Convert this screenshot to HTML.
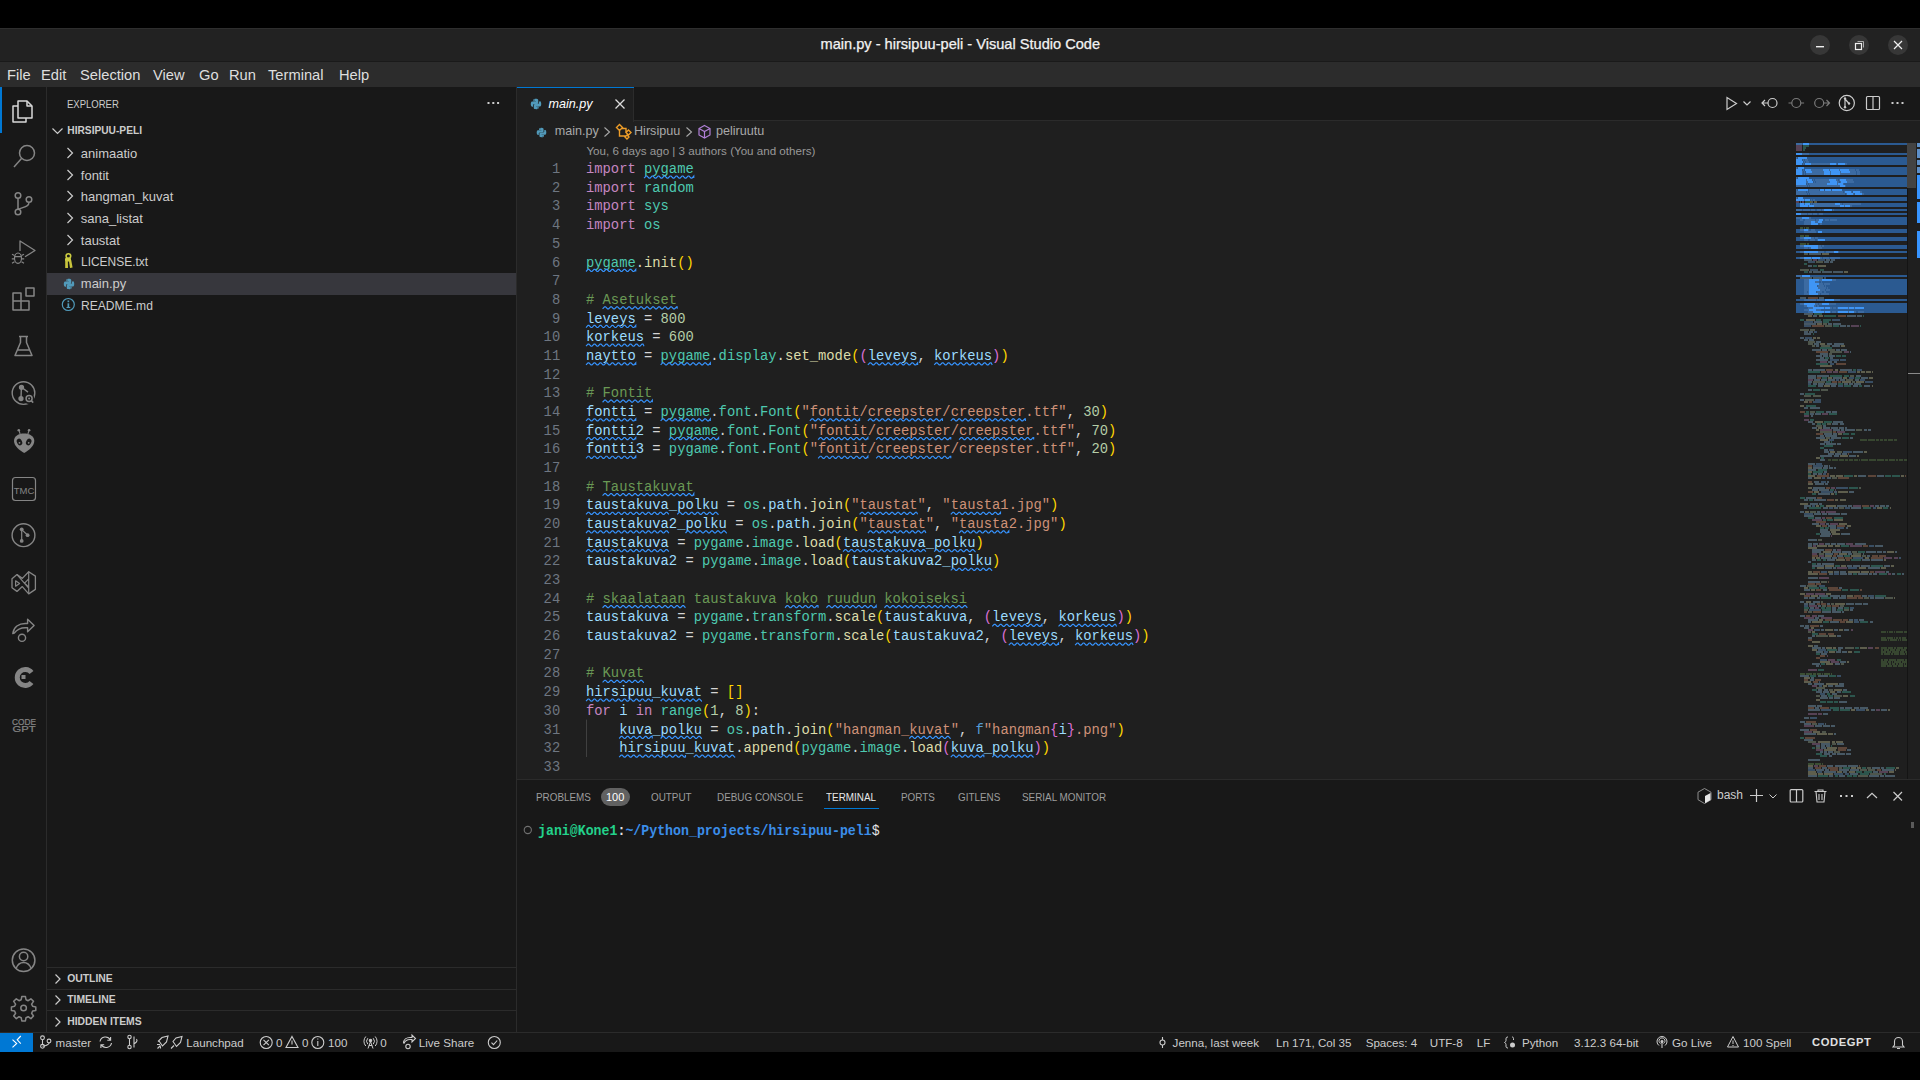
<!DOCTYPE html>
<html><head><meta charset="utf-8">
<style>
*{margin:0;padding:0;box-sizing:border-box}
html,body{width:1920px;height:1080px;overflow:hidden;background:#000;font-family:"Liberation Sans",sans-serif;color:#ccc}
.a{position:absolute}
#titlebar{left:0;top:28px;width:1920px;height:33px;background:#222222;border-top:1px solid #2e2e2e}
#menubar{left:0;top:61px;width:1920px;height:26px;background:#2c2c2c;border-top:1px solid #1a1a1a}
#activity{left:0;top:87px;width:47px;height:945px;background:#181818;border-right:1px solid #2b2b2b}
#sidebar{left:47px;top:87px;width:470px;height:945px;background:#181818;border-right:1px solid #2b2b2b}
#editor{left:517px;top:87px;width:1403px;height:692px;background:#1f1f1f}
#tabs{left:517px;top:87px;width:1403px;height:34px;background:#181818;border-bottom:1px solid #2b2b2b}
#panel{left:517px;top:779px;width:1403px;height:253px;background:#181818;border-top:1px solid #2b2b2b}
#status{left:0;top:1032px;width:1920px;height:20px;background:#181818;border-top:1px solid #2b2b2b}
.t{position:absolute;white-space:pre;line-height:1}
.menu{font-size:14.7px;color:#dedede}
.code{font-family:"Liberation Mono",monospace}
</style></head><body>
<div class="a" id="titlebar"></div>
<div class="a" id="menubar"></div>
<div class="a" id="activity"></div>
<div class="a" id="sidebar"></div>
<div class="a" id="editor"></div>
<div class="a" id="tabs"></div>
<div class="a" id="panel"></div>
<div class="a" id="status"></div>
<!-- TITLE BAR -->
<div class="t" style="left:820.5px;top:37.1px;font-size:14.6px;color:#f2f2f2;-webkit-text-stroke:0.25px #f2f2f2">main.py - hirsipuu-peli - Visual Studio Code</div>
<svg class="a" style="left:1800px;top:30px" width="120" height="30" viewBox="0 0 120 30">
 <circle cx="20" cy="15" r="10" fill="#373737"/>
 <rect x="16" y="16" width="8" height="1.4" fill="#f0f0f0"/>
 <circle cx="59" cy="15" r="10" fill="#373737"/>
 <rect x="55.5" y="13.5" width="6" height="6" fill="none" stroke="#f0f0f0" stroke-width="1.2"/>
 <path d="M57.5 11.5h6v6" fill="none" stroke="#bbb" stroke-width="0.9"/>
 <circle cx="98" cy="15" r="10" fill="#373737"/>
 <path d="M94 11l8 8M102 11l-8 8" stroke="#f0f0f0" stroke-width="1.2"/>
</svg>
<!-- MENU BAR -->
<div class="t menu" style="left:7px;top:68px">File</div>
<div class="t menu" style="left:41px;top:68px">Edit</div>
<div class="t menu" style="left:80px;top:68px">Selection</div>
<div class="t menu" style="left:153px;top:68px">View</div>
<div class="t menu" style="left:199px;top:68px">Go</div>
<div class="t menu" style="left:229px;top:68px">Run</div>
<div class="t menu" style="left:268px;top:68px">Terminal</div>
<div class="t menu" style="left:339px;top:68px">Help</div>
<!-- ACTIVITY BAR -->
<div class="a" style="left:0;top:87px;width:2px;height:46px;background:#0078d4"></div>
<svg class="a" style="left:0;top:87px" width="46" height="945" viewBox="0 87 46 945" fill="none" stroke="#858585" stroke-width="1.5" stroke-linejoin="round">
 <!-- explorer -->
 <g stroke="#d7d7d7">
  <path d="M18 101h9l5 5v12h-14z"/>
  <path d="M27 101v5h5"/>
  <path d="M18 106h-5v16h13v-4"/>
 </g>
 <!-- search -->
 <circle cx="27" cy="153" r="7.5"/>
 <path d="M21.5 158.5l-7.5 8.5"/>
 <!-- source control -->
 <circle cx="18" cy="195.5" r="2.8"/>
 <circle cx="18" cy="212" r="2.8"/>
 <circle cx="29" cy="199.5" r="2.8"/>
 <path d="M18 198.3v11M29 202.3c0 4-4 4.5-11 7"/>
 <!-- run debug -->
 <path d="M20 251V241l15 9.5-10 6.3" stroke-width="1.3"/>
 <ellipse cx="18" cy="258.2" rx="3.5" ry="5.2" stroke-width="1.2"/>
 <path d="M14.5 256.6h7M12 254.3l2.5 1.2M24 254.3l-2.5 1.2M11.8 258.8h2.7M24.2 258.8h-2.7M12 263.3l2.5-1.5M24 263.3l-2.5-1.5" stroke-width="1.2"/>
 <!-- extensions -->
 <path d="M13 293h8v8h8v9h-16z M13 301h8v9 M26 288h8v8h-8z"/>
 <!-- testing flask -->
 <path d="M19 336.5h9M20.5 336.5v6l-5.5 13h17l-5.5-13v-6M17 350h13"/>
 <!-- gitlens inspect -->
 <circle cx="23.5" cy="393.1" r="11.3" stroke-width="1.4"/>
 <circle cx="21.5" cy="387.3" r="1.9" fill="#858585"/>
 <circle cx="21" cy="398.6" r="1.9" fill="#858585"/>
 <path d="M21.4 387.3l-.4 11.3M21.5 387.3l6.5 4.8" stroke-width="1.4"/>
 <circle cx="29.1" cy="398.7" r="5.2" fill="#181818" stroke="none"/>
 <circle cx="29.1" cy="398.4" r="3" stroke-width="1.5"/>
 <circle cx="29.1" cy="398.4" r="1" fill="#858585" stroke="none"/>
 <path d="M31.2 400.6l2 2" stroke-width="1.5"/>
 <!-- platformio -->
 <path d="M14 441C14 436 18.5 433.5 24 433.5C29.5 433.5 34.3 436 34.3 441C34.3 446 28.5 450.5 24.2 453C19.8 450.5 14 446 14 441Z" fill="#858585" stroke="none"/>
 <path d="M19.3 431.2l.8 3M28.7 431.2l-.8 3" stroke-width="1.1"/>
 <circle cx="18.8" cy="430.3" r="1.3" fill="#858585" stroke="none"/>
 <circle cx="29.1" cy="430.3" r="1.3" fill="#858585" stroke="none"/>
 <ellipse cx="19.5" cy="442" rx="2.5" ry="3.5" transform="rotate(-28 19.5 442)" fill="#181818" stroke="none"/>
 <ellipse cx="28.7" cy="442" rx="2.5" ry="3.5" transform="rotate(28 28.7 442)" fill="#181818" stroke="none"/>
 <circle cx="19.5" cy="442.8" r="0.9" fill="#858585" stroke="none"/>
 <circle cx="28.7" cy="442.8" r="0.9" fill="#858585" stroke="none"/>
 <!-- TMC -->
 <rect x="12.5" y="477.5" width="23" height="23" rx="3" stroke-width="1.2"/>
 <text x="24" y="493.5" font-family="Liberation Sans" font-size="9.5" fill="#858585" stroke="none" text-anchor="middle">TMC</text>
 <!-- git graph -->
 <circle cx="23.5" cy="535.2" r="11.4" stroke-width="1.4"/>
 <circle cx="21.7" cy="529.3" r="1.9" fill="#858585" stroke="none"/>
 <circle cx="21.7" cy="540.9" r="1.9" fill="#858585" stroke="none"/>
 <circle cx="27.6" cy="535.2" r="1.9" fill="#858585" stroke="none"/>
 <path d="M21.7 529.3v11.6M21.7 529.6l5.5 5.2" stroke-width="1.2"/>
 <!-- VS logo -->
 <path d="M17 574.6L12 578.7V587.8L17 591.4L22.3 586.6L28.7 593.9L35.4 589.4V576.1L28.7 571.7L22.3 578.4Z" stroke-width="1.3"/>
 <path d="M17 574.6L28.7 588.2M28.7 571.7V593.9M15.6 580.8V586.2L19.6 583.5ZM28.7 578.8L24.6 583.2L28.7 587" stroke-width="1.2"/>
 <!-- live share -->
 <path d="M12.8 633.5c0.8-6.5 6-10 12.5-10h2.3v-4.3l6.5 6.2-6.5 6.3v-4h-2.3c-4.5 0-8.3 1.8-11 5.3z" stroke-width="1.4"/>
 <circle cx="22" cy="637.8" r="3.6" stroke-width="1.4"/>
 <!-- C -->
 <path d="M31.5 672.5a8 8 0 1 0 0 10" stroke-width="5"/>
 <rect x="21.5" y="675" width="4" height="4" fill="#858585" stroke="none"/>
 <!-- CODE GPT -->
 <text x="12" y="724.6" font-family="Liberation Sans" font-size="8.2" fill="#858585" stroke="#858585" stroke-width="0.2" textLength="24" lengthAdjust="spacingAndGlyphs">CODE</text>
 <text x="12.5" y="732.2" font-family="Liberation Sans" font-size="8.2" fill="#858585" stroke="#858585" stroke-width="0.2" textLength="23" lengthAdjust="spacingAndGlyphs">GPT</text>
 <!-- account -->
 <circle cx="23.6" cy="960.2" r="11.3"/>
 <circle cx="23.6" cy="956.5" r="4.2"/>
 <path d="M16 968.5c1.5-4 4.5-6 7.6-6s6 2 7.6 6"/>
 <!-- gear -->
 <path d="M21.8 996.5h3.6l.6 3.2 2.2 1 2.7-1.9 2.6 2.6-1.9 2.7 1 2.2 3.2.6v3.6l-3.2.6-1 2.2 1.9 2.7-2.6 2.6-2.7-1.9-2.2 1-.6 3.2h-3.6l-.6-3.2-2.2-1-2.7 1.9-2.6-2.6 1.9-2.7-1-2.2-3.2-.6v-3.6l3.2-.6 1-2.2-1.9-2.7 2.6-2.6 2.7 1.9 2.2-1z"/>
 <circle cx="23.6" cy="1008" r="2.8"/>
</svg>
<div class="t" style="left:67.3px;top:98.89px;font-size:11px;color:#cccccc;transform:scaleX(0.865);transform-origin:0 0;">EXPLORER</div>
<svg class="a" style="left:486px;top:101px" width="14" height="4"><rect x="1.5" y="1" width="2" height="2" fill="#ccc"/><rect x="6.3" y="1" width="2" height="2" fill="#ccc"/><rect x="11.1" y="1" width="2" height="2" fill="#ccc"/></svg>
<svg class="a" style="left:50px;top:124px" width="16" height="14"><path d="M2.5 4.5l5 5 5-5" fill="none" stroke="#ccc" stroke-width="1.2"/></svg>
<div class="t" style="left:67.3px;top:126.16px;font-size:10.2px;color:#cccccc;font-weight:bold;">HIRSIPUU-PELI</div>
<div class="a" style="left:47px;top:273px;width:469px;height:22px;background:#37373d"></div>
<div class="t" style="left:80.8px;top:146.89px;font-size:13px;color:#cccccc;">animaatio</div>
<svg class="a" style="left:64px;top:145.9px" width="12" height="14"><path d="M3.5 2l5 5-5 5" fill="none" stroke="#ccc" stroke-width="1.2"/></svg>
<div class="t" style="left:80.8px;top:168.59px;font-size:13px;color:#cccccc;">fontit</div>
<svg class="a" style="left:64px;top:167.6px" width="12" height="14"><path d="M3.5 2l5 5-5 5" fill="none" stroke="#ccc" stroke-width="1.2"/></svg>
<div class="t" style="left:80.8px;top:190.39px;font-size:13px;color:#cccccc;">hangman_kuvat</div>
<svg class="a" style="left:64px;top:189.4px" width="12" height="14"><path d="M3.5 2l5 5-5 5" fill="none" stroke="#ccc" stroke-width="1.2"/></svg>
<div class="t" style="left:80.8px;top:212.09px;font-size:13px;color:#cccccc;">sana_listat</div>
<svg class="a" style="left:64px;top:211.1px" width="12" height="14"><path d="M3.5 2l5 5-5 5" fill="none" stroke="#ccc" stroke-width="1.2"/></svg>
<div class="t" style="left:80.8px;top:233.89px;font-size:13px;color:#cccccc;">taustat</div>
<svg class="a" style="left:64px;top:232.9px" width="12" height="14"><path d="M3.5 2l5 5-5 5" fill="none" stroke="#ccc" stroke-width="1.2"/></svg>
<div class="t" style="left:80.8px;top:255.19px;font-size:13px;color:#cccccc;transform:scaleX(0.92);transform-origin:0 0;">LICENSE.txt</div>
<svg class="a" style="left:58px;top:250px" width="22" height="22" viewBox="58 250 22 22"><circle cx="68.4" cy="256" r="2.3" fill="none" stroke="#cbcb41" stroke-width="1.6"/><rect x="65" y="257.8" width="6" height="3.6" rx="1.4" fill="#cbcb41"/><path d="M65.2 260h2.6l.2 8h-2.8z M68.8 260h2.4l1.4 7.6-2.6.5z" fill="#c8c43c"/></svg>
<div class="t" style="left:80.8px;top:276.99px;font-size:13px;color:#cccccc;">main.py</div>
<svg class="a" style="left:62.5px;top:277.5px" width="12" height="12" viewBox="0 0 16 16"><path fill="#519aba" d="M7.9 1C4.3 1 4.5 2.6 4.5 2.6v1.6h3.5v.5H3.1S1 4.5 1 8.1s1.9 3.4 1.9 3.4h1.1V9.9s-.1-1.9 1.9-1.9h3.3s1.8 0 1.8-1.8V2.9S11.3 1 7.9 1zM6 2.1a.6.6 0 1 1 0 1.2.6.6 0 0 1 0-1.2z"/><path fill="#519aba" d="M8.1 15c3.6 0 3.4-1.6 3.4-1.6v-1.6H8v-.5h4.9S15 11.5 15 7.9s-1.9-3.4-1.9-3.4H12v1.6s.1 1.9-1.9 1.9H6.8S5 8 5 9.8v3.3S4.7 15 8.1 15zM10 13.9a.6.6 0 1 1 0-1.2.6.6 0 0 1 0 1.2z"/></svg>
<div class="t" style="left:80.8px;top:298.69px;font-size:13px;color:#cccccc;transform:scaleX(0.93);transform-origin:0 0;">README.md</div>
<svg class="a" style="left:61px;top:296.7px" width="15" height="15"><circle cx="7.3" cy="7.5" r="6" fill="none" stroke="#519aba" stroke-width="1.2"/><rect x="6.5" y="6.3" width="1.7" height="4.5" fill="#519aba"/><rect x="6.5" y="3.5" width="1.7" height="1.7" fill="#519aba"/><rect x="5.5" y="10" width="3.8" height="1" fill="#519aba"/></svg>
<div class="a" style="left:517px;top:87px;width:117px;height:35px;background:#1f1f1f;border-right:1px solid #2b2b2b"></div>
<div class="a" style="left:517px;top:87px;width:117px;height:1px;background:#0078d4"></div>
<svg class="a" style="left:530px;top:97.5px" width="12" height="12" viewBox="0 0 16 16"><path fill="#519aba" d="M7.9 1C4.3 1 4.5 2.6 4.5 2.6v1.6h3.5v.5H3.1S1 4.5 1 8.1s1.9 3.4 1.9 3.4h1.1V9.9s-.1-1.9 1.9-1.9h3.3s1.8 0 1.8-1.8V2.9S11.3 1 7.9 1zM6 2.1a.6.6 0 1 1 0 1.2.6.6 0 0 1 0-1.2z"/><path fill="#519aba" d="M8.1 15c3.6 0 3.4-1.6 3.4-1.6v-1.6H8v-.5h4.9S15 11.5 15 7.9s-1.9-3.4-1.9-3.4H12v1.6s.1 1.9-1.9 1.9H6.8S5 8 5 9.8v3.3S4.7 15 8.1 15zM10 13.9a.6.6 0 1 1 0-1.2.6.6 0 0 1 0 1.2z"/></svg>
<div class="t" style="left:548.5px;top:97.83px;font-size:12.6px;color:#ffffff;font-style:italic;">main.py</div>
<svg class="a" style="left:612px;top:96px" width="16" height="16"><path d="M3.5 3.5l9 9M12.5 3.5l-9 9" stroke="#ddd" stroke-width="1.3"/></svg>
<svg class="a" style="left:1715px;top:90px" width="205" height="28" viewBox="1715 90 205 28" fill="none" stroke-width="1.2">
 <path d="M1727 97.5v12l9.5-6z" stroke="#cccccc"/>
 <path d="M1743.5 101.5l3.5 3.5 3.5-3.5" stroke="#cccccc"/>
 <circle cx="1772.5" cy="103" r="4.5" stroke="#cccccc"/>
 <path d="M1768 103h-6M1765 100l-3 3 3 3" stroke="#cccccc"/>
 <circle cx="1796.3" cy="103" r="4.5" stroke="#7a7a7a"/>
 <path d="M1788.5 103h3.3M1800.8 103h3.3" stroke="#7a7a7a"/>
 <circle cx="1819.2" cy="103" r="4.5" stroke="#7a7a7a"/>
 <path d="M1823.7 103h5.5M1826.5 100l3 3-3 3" stroke="#7a7a7a"/>
 <circle cx="1846.8" cy="103" r="7.6" stroke="#cccccc"/>
 <circle cx="1845" cy="98.5" r="1.2" fill="#ccc" stroke="none"/>
 <circle cx="1845" cy="107.3" r="1.2" fill="#ccc" stroke="none"/>
 <circle cx="1849" cy="103.5" r="1.2" fill="#ccc" stroke="none"/>
 <path d="M1845 98.5v9M1845 99l4 4.5" stroke="#cccccc"/>
 <rect x="1866.5" y="96.5" width="13" height="13" rx="1" stroke="#cccccc"/>
 <path d="M1873 96.5v13" stroke="#cccccc"/>
 <rect x="1891.5" y="102" width="2" height="2" fill="#ccc" stroke="none"/>
 <rect x="1896.5" y="102" width="2" height="2" fill="#ccc" stroke="none"/>
 <rect x="1901.5" y="102" width="2" height="2" fill="#ccc" stroke="none"/>
</svg>
<div class="a" style="left:634px;top:120px;width:1286px;height:1px;background:#2b2b2b"></div>
<svg class="a" style="left:536px;top:126.5px" width="11" height="11" viewBox="0 0 16 16"><path fill="#519aba" d="M7.9 1C4.3 1 4.5 2.6 4.5 2.6v1.6h3.5v.5H3.1S1 4.5 1 8.1s1.9 3.4 1.9 3.4h1.1V9.9s-.1-1.9 1.9-1.9h3.3s1.8 0 1.8-1.8V2.9S11.3 1 7.9 1zM6 2.1a.6.6 0 1 1 0 1.2.6.6 0 0 1 0-1.2z"/><path fill="#519aba" d="M8.1 15c3.6 0 3.4-1.6 3.4-1.6v-1.6H8v-.5h4.9S15 11.5 15 7.9s-1.9-3.4-1.9-3.4H12v1.6s.1 1.9-1.9 1.9H6.8S5 8 5 9.8v3.3S4.7 15 8.1 15zM10 13.9a.6.6 0 1 1 0-1.2.6.6 0 0 1 0 1.2z"/></svg>
<div class="t" style="left:554.8px;top:124.93px;font-size:12.6px;color:#a9a9a9;">main.py</div>
<svg class="a" style="left:600px;top:124px" width="100" height="16" fill="none" stroke-width="1.1"><path d="M4.5 3.5l5 4.5-5 4.5" stroke="#a9a9a9"/><path d="M86.5 3.5l5 4.5-5 4.5" stroke="#a9a9a9"/></svg>
<svg class="a" style="left:614px;top:123px" width="18" height="18" fill="none" stroke="#ee9d28" stroke-width="1.4"><path d="M2.5 4.5l3-3 3 3-3 3z M12 9.5l2.5-2.5 2.5 2.5-2.5 2.5z M11 14l2-2 2 2-2 2z M5.5 7.5v5.5h6 M7.5 5.5h4.5v4"/></svg>
<div class="t" style="left:634px;top:124.93px;font-size:12.6px;color:#a9a9a9;">Hirsipuu</div>
<svg class="a" style="left:697px;top:124px" width="16" height="16" fill="none" stroke="#b180d7" stroke-width="1.2"><path d="M7.5 1.5l5.5 3v6.5l-5.5 3-5.5-3v-6.5z M2 4.5l5.5 3 5.5-3 M7.5 7.5v6.5"/></svg>
<div class="t" style="left:716px;top:124.93px;font-size:12.6px;color:#a9a9a9;">peliruutu</div>
<div class="t" style="left:586.4px;top:144.78px;font-size:11.6px;color:#999999;">You, 6 days ago | 3 authors (You and others)</div>
<div class="t code" style="left:519px;top:162.10px;width:45.93px;font-size:15.4px;color:#6e7681;text-align:right;transform:scaleX(0.8971);transform-origin:0 0">1</div>
<div class="t code" style="left:586.0px;top:162.10px;font-size:15.4px;transform:scaleX(0.8971);transform-origin:0 0"><span style="color:#C586C0">import</span><span style="color:#D4D4D4"> </span><span style="color:#4EC9B0">pygame</span></div>
<div class="t code" style="left:519px;top:180.78px;width:45.93px;font-size:15.4px;color:#6e7681;text-align:right;transform:scaleX(0.8971);transform-origin:0 0">2</div>
<div class="t code" style="left:586.0px;top:180.78px;font-size:15.4px;transform:scaleX(0.8971);transform-origin:0 0"><span style="color:#C586C0">import</span><span style="color:#D4D4D4"> </span><span style="color:#4EC9B0">random</span></div>
<div class="t code" style="left:519px;top:199.46px;width:45.93px;font-size:15.4px;color:#6e7681;text-align:right;transform:scaleX(0.8971);transform-origin:0 0">3</div>
<div class="t code" style="left:586.0px;top:199.46px;font-size:15.4px;transform:scaleX(0.8971);transform-origin:0 0"><span style="color:#C586C0">import</span><span style="color:#D4D4D4"> </span><span style="color:#4EC9B0">sys</span></div>
<div class="t code" style="left:519px;top:218.14px;width:45.93px;font-size:15.4px;color:#6e7681;text-align:right;transform:scaleX(0.8971);transform-origin:0 0">4</div>
<div class="t code" style="left:586.0px;top:218.14px;font-size:15.4px;transform:scaleX(0.8971);transform-origin:0 0"><span style="color:#C586C0">import</span><span style="color:#D4D4D4"> </span><span style="color:#4EC9B0">os</span></div>
<div class="t code" style="left:519px;top:236.82px;width:45.93px;font-size:15.4px;color:#6e7681;text-align:right;transform:scaleX(0.8971);transform-origin:0 0">5</div>
<div class="t code" style="left:519px;top:255.50px;width:45.93px;font-size:15.4px;color:#6e7681;text-align:right;transform:scaleX(0.8971);transform-origin:0 0">6</div>
<div class="t code" style="left:586.0px;top:255.50px;font-size:15.4px;transform:scaleX(0.8971);transform-origin:0 0"><span style="color:#4EC9B0">pygame</span><span style="color:#D4D4D4">.</span><span style="color:#DCDCAA">init</span><span style="color:#FFD700">()</span></div>
<div class="t code" style="left:519px;top:274.18px;width:45.93px;font-size:15.4px;color:#6e7681;text-align:right;transform:scaleX(0.8971);transform-origin:0 0">7</div>
<div class="t code" style="left:519px;top:292.86px;width:45.93px;font-size:15.4px;color:#6e7681;text-align:right;transform:scaleX(0.8971);transform-origin:0 0">8</div>
<div class="t code" style="left:586.0px;top:292.86px;font-size:15.4px;transform:scaleX(0.8971);transform-origin:0 0"><span style="color:#6A9955"># Asetukset</span></div>
<div class="t code" style="left:519px;top:311.54px;width:45.93px;font-size:15.4px;color:#6e7681;text-align:right;transform:scaleX(0.8971);transform-origin:0 0">9</div>
<div class="t code" style="left:586.0px;top:311.54px;font-size:15.4px;transform:scaleX(0.8971);transform-origin:0 0"><span style="color:#9CDCFE">leveys</span><span style="color:#D4D4D4"> = </span><span style="color:#B5CEA8">800</span></div>
<div class="t code" style="left:519px;top:330.22px;width:45.93px;font-size:15.4px;color:#6e7681;text-align:right;transform:scaleX(0.8971);transform-origin:0 0">10</div>
<div class="t code" style="left:586.0px;top:330.22px;font-size:15.4px;transform:scaleX(0.8971);transform-origin:0 0"><span style="color:#9CDCFE">korkeus</span><span style="color:#D4D4D4"> = </span><span style="color:#B5CEA8">600</span></div>
<div class="t code" style="left:519px;top:348.90px;width:45.93px;font-size:15.4px;color:#6e7681;text-align:right;transform:scaleX(0.8971);transform-origin:0 0">11</div>
<div class="t code" style="left:586.0px;top:348.90px;font-size:15.4px;transform:scaleX(0.8971);transform-origin:0 0"><span style="color:#9CDCFE">naytto</span><span style="color:#D4D4D4"> = </span><span style="color:#4EC9B0">pygame</span><span style="color:#D4D4D4">.</span><span style="color:#4EC9B0">display</span><span style="color:#D4D4D4">.</span><span style="color:#DCDCAA">set_mode</span><span style="color:#FFD700">(</span><span style="color:#DA70D6">(</span><span style="color:#9CDCFE">leveys</span><span style="color:#D4D4D4">, </span><span style="color:#9CDCFE">korkeus</span><span style="color:#DA70D6">)</span><span style="color:#FFD700">)</span></div>
<div class="t code" style="left:519px;top:367.58px;width:45.93px;font-size:15.4px;color:#6e7681;text-align:right;transform:scaleX(0.8971);transform-origin:0 0">12</div>
<div class="t code" style="left:519px;top:386.26px;width:45.93px;font-size:15.4px;color:#6e7681;text-align:right;transform:scaleX(0.8971);transform-origin:0 0">13</div>
<div class="t code" style="left:586.0px;top:386.26px;font-size:15.4px;transform:scaleX(0.8971);transform-origin:0 0"><span style="color:#6A9955"># Fontit</span></div>
<div class="t code" style="left:519px;top:404.94px;width:45.93px;font-size:15.4px;color:#6e7681;text-align:right;transform:scaleX(0.8971);transform-origin:0 0">14</div>
<div class="t code" style="left:586.0px;top:404.94px;font-size:15.4px;transform:scaleX(0.8971);transform-origin:0 0"><span style="color:#9CDCFE">fontti</span><span style="color:#D4D4D4"> = </span><span style="color:#4EC9B0">pygame</span><span style="color:#D4D4D4">.</span><span style="color:#4EC9B0">font</span><span style="color:#D4D4D4">.</span><span style="color:#4EC9B0">Font</span><span style="color:#FFD700">(</span><span style="color:#CE9178">&quot;fontit/creepster/creepster.ttf&quot;</span><span style="color:#D4D4D4">, </span><span style="color:#B5CEA8">30</span><span style="color:#FFD700">)</span></div>
<div class="t code" style="left:519px;top:423.62px;width:45.93px;font-size:15.4px;color:#6e7681;text-align:right;transform:scaleX(0.8971);transform-origin:0 0">15</div>
<div class="t code" style="left:586.0px;top:423.62px;font-size:15.4px;transform:scaleX(0.8971);transform-origin:0 0"><span style="color:#9CDCFE">fontti2</span><span style="color:#D4D4D4"> = </span><span style="color:#4EC9B0">pygame</span><span style="color:#D4D4D4">.</span><span style="color:#4EC9B0">font</span><span style="color:#D4D4D4">.</span><span style="color:#4EC9B0">Font</span><span style="color:#FFD700">(</span><span style="color:#CE9178">&quot;fontit/creepster/creepster.ttf&quot;</span><span style="color:#D4D4D4">, </span><span style="color:#B5CEA8">70</span><span style="color:#FFD700">)</span></div>
<div class="t code" style="left:519px;top:442.30px;width:45.93px;font-size:15.4px;color:#6e7681;text-align:right;transform:scaleX(0.8971);transform-origin:0 0">16</div>
<div class="t code" style="left:586.0px;top:442.30px;font-size:15.4px;transform:scaleX(0.8971);transform-origin:0 0"><span style="color:#9CDCFE">fontti3</span><span style="color:#D4D4D4"> = </span><span style="color:#4EC9B0">pygame</span><span style="color:#D4D4D4">.</span><span style="color:#4EC9B0">font</span><span style="color:#D4D4D4">.</span><span style="color:#4EC9B0">Font</span><span style="color:#FFD700">(</span><span style="color:#CE9178">&quot;fontit/creepster/creepster.ttf&quot;</span><span style="color:#D4D4D4">, </span><span style="color:#B5CEA8">20</span><span style="color:#FFD700">)</span></div>
<div class="t code" style="left:519px;top:460.98px;width:45.93px;font-size:15.4px;color:#6e7681;text-align:right;transform:scaleX(0.8971);transform-origin:0 0">17</div>
<div class="t code" style="left:519px;top:479.66px;width:45.93px;font-size:15.4px;color:#6e7681;text-align:right;transform:scaleX(0.8971);transform-origin:0 0">18</div>
<div class="t code" style="left:586.0px;top:479.66px;font-size:15.4px;transform:scaleX(0.8971);transform-origin:0 0"><span style="color:#6A9955"># Taustakuvat</span></div>
<div class="t code" style="left:519px;top:498.34px;width:45.93px;font-size:15.4px;color:#6e7681;text-align:right;transform:scaleX(0.8971);transform-origin:0 0">19</div>
<div class="t code" style="left:586.0px;top:498.34px;font-size:15.4px;transform:scaleX(0.8971);transform-origin:0 0"><span style="color:#9CDCFE">taustakuva_polku</span><span style="color:#D4D4D4"> = </span><span style="color:#4EC9B0">os</span><span style="color:#D4D4D4">.</span><span style="color:#9CDCFE">path</span><span style="color:#D4D4D4">.</span><span style="color:#DCDCAA">join</span><span style="color:#FFD700">(</span><span style="color:#CE9178">&quot;taustat&quot;</span><span style="color:#D4D4D4">, </span><span style="color:#CE9178">&quot;tausta1.jpg&quot;</span><span style="color:#FFD700">)</span></div>
<div class="t code" style="left:519px;top:517.02px;width:45.93px;font-size:15.4px;color:#6e7681;text-align:right;transform:scaleX(0.8971);transform-origin:0 0">20</div>
<div class="t code" style="left:586.0px;top:517.02px;font-size:15.4px;transform:scaleX(0.8971);transform-origin:0 0"><span style="color:#9CDCFE">taustakuva2_polku</span><span style="color:#D4D4D4"> = </span><span style="color:#4EC9B0">os</span><span style="color:#D4D4D4">.</span><span style="color:#9CDCFE">path</span><span style="color:#D4D4D4">.</span><span style="color:#DCDCAA">join</span><span style="color:#FFD700">(</span><span style="color:#CE9178">&quot;taustat&quot;</span><span style="color:#D4D4D4">, </span><span style="color:#CE9178">&quot;tausta2.jpg&quot;</span><span style="color:#FFD700">)</span></div>
<div class="t code" style="left:519px;top:535.70px;width:45.93px;font-size:15.4px;color:#6e7681;text-align:right;transform:scaleX(0.8971);transform-origin:0 0">21</div>
<div class="t code" style="left:586.0px;top:535.70px;font-size:15.4px;transform:scaleX(0.8971);transform-origin:0 0"><span style="color:#9CDCFE">taustakuva</span><span style="color:#D4D4D4"> = </span><span style="color:#4EC9B0">pygame</span><span style="color:#D4D4D4">.</span><span style="color:#4EC9B0">image</span><span style="color:#D4D4D4">.</span><span style="color:#DCDCAA">load</span><span style="color:#FFD700">(</span><span style="color:#9CDCFE">taustakuva_polku</span><span style="color:#FFD700">)</span></div>
<div class="t code" style="left:519px;top:554.38px;width:45.93px;font-size:15.4px;color:#6e7681;text-align:right;transform:scaleX(0.8971);transform-origin:0 0">22</div>
<div class="t code" style="left:586.0px;top:554.38px;font-size:15.4px;transform:scaleX(0.8971);transform-origin:0 0"><span style="color:#9CDCFE">taustakuva2</span><span style="color:#D4D4D4"> = </span><span style="color:#4EC9B0">pygame</span><span style="color:#D4D4D4">.</span><span style="color:#4EC9B0">image</span><span style="color:#D4D4D4">.</span><span style="color:#DCDCAA">load</span><span style="color:#FFD700">(</span><span style="color:#9CDCFE">taustakuva2_polku</span><span style="color:#FFD700">)</span></div>
<div class="t code" style="left:519px;top:573.06px;width:45.93px;font-size:15.4px;color:#6e7681;text-align:right;transform:scaleX(0.8971);transform-origin:0 0">23</div>
<div class="t code" style="left:519px;top:591.74px;width:45.93px;font-size:15.4px;color:#6e7681;text-align:right;transform:scaleX(0.8971);transform-origin:0 0">24</div>
<div class="t code" style="left:586.0px;top:591.74px;font-size:15.4px;transform:scaleX(0.8971);transform-origin:0 0"><span style="color:#6A9955"># skaalataan taustakuva koko ruudun kokoiseksi</span></div>
<div class="t code" style="left:519px;top:610.42px;width:45.93px;font-size:15.4px;color:#6e7681;text-align:right;transform:scaleX(0.8971);transform-origin:0 0">25</div>
<div class="t code" style="left:586.0px;top:610.42px;font-size:15.4px;transform:scaleX(0.8971);transform-origin:0 0"><span style="color:#9CDCFE">taustakuva</span><span style="color:#D4D4D4"> = </span><span style="color:#4EC9B0">pygame</span><span style="color:#D4D4D4">.</span><span style="color:#4EC9B0">transform</span><span style="color:#D4D4D4">.</span><span style="color:#DCDCAA">scale</span><span style="color:#FFD700">(</span><span style="color:#9CDCFE">taustakuva</span><span style="color:#D4D4D4">, </span><span style="color:#DA70D6">(</span><span style="color:#9CDCFE">leveys</span><span style="color:#D4D4D4">, </span><span style="color:#9CDCFE">korkeus</span><span style="color:#DA70D6">)</span><span style="color:#FFD700">)</span></div>
<div class="t code" style="left:519px;top:629.10px;width:45.93px;font-size:15.4px;color:#6e7681;text-align:right;transform:scaleX(0.8971);transform-origin:0 0">26</div>
<div class="t code" style="left:586.0px;top:629.10px;font-size:15.4px;transform:scaleX(0.8971);transform-origin:0 0"><span style="color:#9CDCFE">taustakuva2</span><span style="color:#D4D4D4"> = </span><span style="color:#4EC9B0">pygame</span><span style="color:#D4D4D4">.</span><span style="color:#4EC9B0">transform</span><span style="color:#D4D4D4">.</span><span style="color:#DCDCAA">scale</span><span style="color:#FFD700">(</span><span style="color:#9CDCFE">taustakuva2</span><span style="color:#D4D4D4">, </span><span style="color:#DA70D6">(</span><span style="color:#9CDCFE">leveys</span><span style="color:#D4D4D4">, </span><span style="color:#9CDCFE">korkeus</span><span style="color:#DA70D6">)</span><span style="color:#FFD700">)</span></div>
<div class="t code" style="left:519px;top:647.78px;width:45.93px;font-size:15.4px;color:#6e7681;text-align:right;transform:scaleX(0.8971);transform-origin:0 0">27</div>
<div class="t code" style="left:519px;top:666.46px;width:45.93px;font-size:15.4px;color:#6e7681;text-align:right;transform:scaleX(0.8971);transform-origin:0 0">28</div>
<div class="t code" style="left:586.0px;top:666.46px;font-size:15.4px;transform:scaleX(0.8971);transform-origin:0 0"><span style="color:#6A9955"># Kuvat</span></div>
<div class="t code" style="left:519px;top:685.14px;width:45.93px;font-size:15.4px;color:#6e7681;text-align:right;transform:scaleX(0.8971);transform-origin:0 0">29</div>
<div class="t code" style="left:586.0px;top:685.14px;font-size:15.4px;transform:scaleX(0.8971);transform-origin:0 0"><span style="color:#9CDCFE">hirsipuu_kuvat</span><span style="color:#D4D4D4"> = </span><span style="color:#FFD700">[]</span></div>
<div class="t code" style="left:519px;top:703.82px;width:45.93px;font-size:15.4px;color:#6e7681;text-align:right;transform:scaleX(0.8971);transform-origin:0 0">30</div>
<div class="t code" style="left:586.0px;top:703.82px;font-size:15.4px;transform:scaleX(0.8971);transform-origin:0 0"><span style="color:#C586C0">for</span><span style="color:#D4D4D4"> </span><span style="color:#9CDCFE">i</span><span style="color:#D4D4D4"> </span><span style="color:#C586C0">in</span><span style="color:#D4D4D4"> </span><span style="color:#4EC9B0">range</span><span style="color:#FFD700">(</span><span style="color:#B5CEA8">1</span><span style="color:#D4D4D4">, </span><span style="color:#B5CEA8">8</span><span style="color:#FFD700">)</span><span style="color:#D4D4D4">:</span></div>
<div class="t code" style="left:519px;top:722.50px;width:45.93px;font-size:15.4px;color:#6e7681;text-align:right;transform:scaleX(0.8971);transform-origin:0 0">31</div>
<div class="t code" style="left:586.0px;top:722.50px;font-size:15.4px;transform:scaleX(0.8971);transform-origin:0 0"><span style="color:#D4D4D4">    </span><span style="color:#9CDCFE">kuva_polku</span><span style="color:#D4D4D4"> = </span><span style="color:#4EC9B0">os</span><span style="color:#D4D4D4">.</span><span style="color:#9CDCFE">path</span><span style="color:#D4D4D4">.</span><span style="color:#DCDCAA">join</span><span style="color:#FFD700">(</span><span style="color:#CE9178">&quot;hangman_kuvat&quot;</span><span style="color:#D4D4D4">, </span><span style="color:#569CD6">f</span><span style="color:#CE9178">&quot;hangman</span><span style="color:#DA70D6">{</span><span style="color:#9CDCFE">i</span><span style="color:#DA70D6">}</span><span style="color:#CE9178">.png&quot;</span><span style="color:#FFD700">)</span></div>
<div class="t code" style="left:519px;top:741.18px;width:45.93px;font-size:15.4px;color:#6e7681;text-align:right;transform:scaleX(0.8971);transform-origin:0 0">32</div>
<div class="t code" style="left:586.0px;top:741.18px;font-size:15.4px;transform:scaleX(0.8971);transform-origin:0 0"><span style="color:#D4D4D4">    </span><span style="color:#9CDCFE">hirsipuu_kuvat</span><span style="color:#D4D4D4">.</span><span style="color:#DCDCAA">append</span><span style="color:#FFD700">(</span><span style="color:#4EC9B0">pygame</span><span style="color:#D4D4D4">.</span><span style="color:#4EC9B0">image</span><span style="color:#D4D4D4">.</span><span style="color:#DCDCAA">load</span><span style="color:#DA70D6">(</span><span style="color:#9CDCFE">kuva_polku</span><span style="color:#DA70D6">)</span><span style="color:#FFD700">)</span></div>
<div class="t code" style="left:519px;top:759.86px;width:45.93px;font-size:15.4px;color:#6e7681;text-align:right;transform:scaleX(0.8971);transform-origin:0 0">33</div>
<svg class="a" style="left:0;top:0" width="1920" height="1080" fill="none"><path d="M644.03 178.10L646.03 176.00L647.03 176.00L649.03 178.10L650.03 178.10L652.03 176.00L653.03 176.00L655.03 178.10L656.03 178.10L658.03 176.00L659.03 176.00L661.03 178.10L662.03 178.10L664.03 176.00L665.03 176.00L667.03 178.10L668.03 178.10L670.03 176.00L671.03 176.00L673.03 178.10L674.03 178.10L676.03 176.00L677.03 176.00L679.03 178.10L680.03 178.10L682.03 176.00L683.03 176.00L685.03 178.10L686.03 178.10L688.03 176.00L689.03 176.00L691.03 178.10L692.03 178.10L693.77 176.00L693.77 176.00L693.77 178.10L693.77 178.10" stroke="#3794ff" stroke-width="1.15"/><path d="M586.00 271.50L588.00 269.40L589.00 269.40L591.00 271.50L592.00 271.50L594.00 269.40L595.00 269.40L597.00 271.50L598.00 271.50L600.00 269.40L601.00 269.40L603.00 271.50L604.00 271.50L606.00 269.40L607.00 269.40L609.00 271.50L610.00 271.50L612.00 269.40L613.00 269.40L615.00 271.50L616.00 271.50L618.00 269.40L619.00 269.40L621.00 271.50L622.00 271.50L624.00 269.40L625.00 269.40L627.00 271.50L628.00 271.50L630.00 269.40L631.00 269.40L633.00 271.50L634.00 271.50L635.74 269.40L635.74 269.40L635.74 271.50L635.74 271.50" stroke="#3794ff" stroke-width="1.15"/><path d="M602.58 308.86L604.58 306.76L605.58 306.76L607.58 308.86L608.58 308.86L610.58 306.76L611.58 306.76L613.58 308.86L614.58 308.86L616.58 306.76L617.58 306.76L619.58 308.86L620.58 308.86L622.58 306.76L623.58 306.76L625.58 308.86L626.58 308.86L628.58 306.76L629.58 306.76L631.58 308.86L632.58 308.86L634.58 306.76L635.58 306.76L637.58 308.86L638.58 308.86L640.58 306.76L641.58 306.76L643.58 308.86L644.58 308.86L646.58 306.76L647.58 306.76L649.58 308.86L650.58 308.86L652.58 306.76L653.58 306.76L655.58 308.86L656.58 308.86L658.58 306.76L659.58 306.76L661.58 308.86L662.58 308.86L664.58 306.76L665.58 306.76L667.58 308.86L668.58 308.86L670.58 306.76L671.58 306.76L673.58 308.86L674.58 308.86L676.58 306.76L677.19 306.76L677.19 308.86L677.19 308.86" stroke="#3794ff" stroke-width="1.15"/><path d="M586.00 327.54L588.00 325.44L589.00 325.44L591.00 327.54L592.00 327.54L594.00 325.44L595.00 325.44L597.00 327.54L598.00 327.54L600.00 325.44L601.00 325.44L603.00 327.54L604.00 327.54L606.00 325.44L607.00 325.44L609.00 327.54L610.00 327.54L612.00 325.44L613.00 325.44L615.00 327.54L616.00 327.54L618.00 325.44L619.00 325.44L621.00 327.54L622.00 327.54L624.00 325.44L625.00 325.44L627.00 327.54L628.00 327.54L630.00 325.44L631.00 325.44L633.00 327.54L634.00 327.54L635.74 325.44L635.74 325.44L635.74 327.54L635.74 327.54" stroke="#3794ff" stroke-width="1.15"/><path d="M586.00 346.22L588.00 344.12L589.00 344.12L591.00 346.22L592.00 346.22L594.00 344.12L595.00 344.12L597.00 346.22L598.00 346.22L600.00 344.12L601.00 344.12L603.00 346.22L604.00 346.22L606.00 344.12L607.00 344.12L609.00 346.22L610.00 346.22L612.00 344.12L613.00 344.12L615.00 346.22L616.00 346.22L618.00 344.12L619.00 344.12L621.00 346.22L622.00 346.22L624.00 344.12L625.00 344.12L627.00 346.22L628.00 346.22L630.00 344.12L631.00 344.12L633.00 346.22L634.00 346.22L636.00 344.12L637.00 344.12L639.00 346.22L640.00 346.22L642.00 344.12L643.00 344.12L644.03 346.22L644.03 346.22" stroke="#3794ff" stroke-width="1.15"/><path d="M586.00 364.90L588.00 362.80L589.00 362.80L591.00 364.90L592.00 364.90L594.00 362.80L595.00 362.80L597.00 364.90L598.00 364.90L600.00 362.80L601.00 362.80L603.00 364.90L604.00 364.90L606.00 362.80L607.00 362.80L609.00 364.90L610.00 364.90L612.00 362.80L613.00 362.80L615.00 364.90L616.00 364.90L618.00 362.80L619.00 362.80L621.00 364.90L622.00 364.90L624.00 362.80L625.00 362.80L627.00 364.90L628.00 364.90L630.00 362.80L631.00 362.80L633.00 364.90L634.00 364.90L635.74 362.80L635.74 362.80L635.74 364.90L635.74 364.90" stroke="#3794ff" stroke-width="1.15"/><path d="M660.61 364.90L662.61 362.80L663.61 362.80L665.61 364.90L666.61 364.90L668.61 362.80L669.61 362.80L671.61 364.90L672.61 364.90L674.61 362.80L675.61 362.80L677.61 364.90L678.61 364.90L680.61 362.80L681.61 362.80L683.61 364.90L684.61 364.90L686.61 362.80L687.61 362.80L689.61 364.90L690.61 364.90L692.61 362.80L693.61 362.80L695.61 364.90L696.61 364.90L698.61 362.80L699.61 362.80L701.61 364.90L702.61 364.90L704.61 362.80L705.61 362.80L707.61 364.90L708.61 364.90L710.35 362.80L710.35 362.80L710.35 364.90L710.35 364.90" stroke="#3794ff" stroke-width="1.15"/><path d="M867.86 364.90L869.86 362.80L870.86 362.80L872.86 364.90L873.86 364.90L875.86 362.80L876.86 362.80L878.86 364.90L879.86 364.90L881.86 362.80L882.86 362.80L884.86 364.90L885.86 364.90L887.86 362.80L888.86 362.80L890.86 364.90L891.86 364.90L893.86 362.80L894.86 362.80L896.86 364.90L897.86 364.90L899.86 362.80L900.86 362.80L902.86 364.90L903.86 364.90L905.86 362.80L906.86 362.80L908.86 364.90L909.86 364.90L911.86 362.80L912.86 362.80L914.86 364.90L915.86 364.90L917.60 362.80L917.60 362.80L917.60 364.90L917.60 364.90" stroke="#3794ff" stroke-width="1.15"/><path d="M934.18 364.90L936.18 362.80L937.18 362.80L939.18 364.90L940.18 364.90L942.18 362.80L943.18 362.80L945.18 364.90L946.18 364.90L948.18 362.80L949.18 362.80L951.18 364.90L952.18 364.90L954.18 362.80L955.18 362.80L957.18 364.90L958.18 364.90L960.18 362.80L961.18 362.80L963.18 364.90L964.18 364.90L966.18 362.80L967.18 362.80L969.18 364.90L970.18 364.90L972.18 362.80L973.18 362.80L975.18 364.90L976.18 364.90L978.18 362.80L979.18 362.80L981.18 364.90L982.18 364.90L984.18 362.80L985.18 362.80L987.18 364.90L988.18 364.90L990.18 362.80L991.18 362.80L992.21 364.90L992.21 364.90" stroke="#3794ff" stroke-width="1.15"/><path d="M602.58 402.26L604.58 400.16L605.58 400.16L607.58 402.26L608.58 402.26L610.58 400.16L611.58 400.16L613.58 402.26L614.58 402.26L616.58 400.16L617.58 400.16L619.58 402.26L620.58 402.26L622.58 400.16L623.58 400.16L625.58 402.26L626.58 402.26L628.58 400.16L629.58 400.16L631.58 402.26L632.58 402.26L634.58 400.16L635.58 400.16L637.58 402.26L638.58 402.26L640.58 400.16L641.58 400.16L643.58 402.26L644.58 402.26L646.58 400.16L647.58 400.16L649.58 402.26L650.58 402.26L652.32 400.16L652.32 400.16L652.32 402.26L652.32 402.26" stroke="#3794ff" stroke-width="1.15"/><path d="M586.00 420.94L588.00 418.84L589.00 418.84L591.00 420.94L592.00 420.94L594.00 418.84L595.00 418.84L597.00 420.94L598.00 420.94L600.00 418.84L601.00 418.84L603.00 420.94L604.00 420.94L606.00 418.84L607.00 418.84L609.00 420.94L610.00 420.94L612.00 418.84L613.00 418.84L615.00 420.94L616.00 420.94L618.00 418.84L619.00 418.84L621.00 420.94L622.00 420.94L624.00 418.84L625.00 418.84L627.00 420.94L628.00 420.94L630.00 418.84L631.00 418.84L633.00 420.94L634.00 420.94L635.74 418.84L635.74 418.84L635.74 420.94L635.74 420.94" stroke="#3794ff" stroke-width="1.15"/><path d="M660.61 420.94L662.61 418.84L663.61 418.84L665.61 420.94L666.61 420.94L668.61 418.84L669.61 418.84L671.61 420.94L672.61 420.94L674.61 418.84L675.61 418.84L677.61 420.94L678.61 420.94L680.61 418.84L681.61 418.84L683.61 420.94L684.61 420.94L686.61 418.84L687.61 418.84L689.61 420.94L690.61 420.94L692.61 418.84L693.61 418.84L695.61 420.94L696.61 420.94L698.61 418.84L699.61 418.84L701.61 420.94L702.61 420.94L704.61 418.84L705.61 418.84L707.61 420.94L708.61 420.94L710.35 418.84L710.35 418.84L710.35 420.94L710.35 420.94" stroke="#3794ff" stroke-width="1.15"/><path d="M809.83 420.94L811.83 418.84L812.83 418.84L814.83 420.94L815.83 420.94L817.83 418.84L818.83 418.84L820.83 420.94L821.83 420.94L823.83 418.84L824.83 418.84L826.83 420.94L827.83 420.94L829.83 418.84L830.83 418.84L832.83 420.94L833.83 420.94L835.83 418.84L836.83 418.84L838.83 420.94L839.83 420.94L841.83 418.84L842.83 418.84L844.83 420.94L845.83 420.94L847.83 418.84L848.83 418.84L850.83 420.94L851.83 420.94L853.83 418.84L854.83 418.84L856.83 420.94L857.83 420.94L859.57 418.84L859.57 418.84L859.57 420.94L859.57 420.94" stroke="#3794ff" stroke-width="1.15"/><path d="M867.86 420.94L869.86 418.84L870.86 418.84L872.86 420.94L873.86 420.94L875.86 418.84L876.86 418.84L878.86 420.94L879.86 420.94L881.86 418.84L882.86 418.84L884.86 420.94L885.86 420.94L887.86 418.84L888.86 418.84L890.86 420.94L891.86 420.94L893.86 418.84L894.86 418.84L896.86 420.94L897.86 420.94L899.86 418.84L900.86 418.84L902.86 420.94L903.86 420.94L905.86 418.84L906.86 418.84L908.86 420.94L909.86 420.94L911.86 418.84L912.86 418.84L914.86 420.94L915.86 420.94L917.86 418.84L918.86 418.84L920.86 420.94L921.86 420.94L923.86 418.84L924.86 418.84L926.86 420.94L927.86 420.94L929.86 418.84L930.86 418.84L932.86 420.94L933.86 420.94L935.86 418.84L936.86 418.84L938.86 420.94L939.86 420.94L941.86 418.84L942.47 418.84L942.47 420.94L942.47 420.94" stroke="#3794ff" stroke-width="1.15"/><path d="M950.76 420.94L952.76 418.84L953.76 418.84L955.76 420.94L956.76 420.94L958.76 418.84L959.76 418.84L961.76 420.94L962.76 420.94L964.76 418.84L965.76 418.84L967.76 420.94L968.76 420.94L970.76 418.84L971.76 418.84L973.76 420.94L974.76 420.94L976.76 418.84L977.76 418.84L979.76 420.94L980.76 420.94L982.76 418.84L983.76 418.84L985.76 420.94L986.76 420.94L988.76 418.84L989.76 418.84L991.76 420.94L992.76 420.94L994.76 418.84L995.76 418.84L997.76 420.94L998.76 420.94L1000.76 418.84L1001.76 418.84L1003.76 420.94L1004.76 420.94L1006.76 418.84L1007.76 418.84L1009.76 420.94L1010.76 420.94L1012.76 418.84L1013.76 418.84L1015.76 420.94L1016.76 420.94L1018.76 418.84L1019.76 418.84L1021.76 420.94L1022.76 420.94L1024.76 418.84L1025.37 418.84L1025.37 420.94L1025.37 420.94" stroke="#3794ff" stroke-width="1.15"/><path d="M586.00 439.62L588.00 437.52L589.00 437.52L591.00 439.62L592.00 439.62L594.00 437.52L595.00 437.52L597.00 439.62L598.00 439.62L600.00 437.52L601.00 437.52L603.00 439.62L604.00 439.62L606.00 437.52L607.00 437.52L609.00 439.62L610.00 439.62L612.00 437.52L613.00 437.52L615.00 439.62L616.00 439.62L618.00 437.52L619.00 437.52L621.00 439.62L622.00 439.62L624.00 437.52L625.00 437.52L627.00 439.62L628.00 439.62L630.00 437.52L631.00 437.52L633.00 439.62L634.00 439.62L635.74 437.52L635.74 437.52L635.74 439.62L635.74 439.62" stroke="#3794ff" stroke-width="1.15"/><path d="M668.90 439.62L670.90 437.52L671.90 437.52L673.90 439.62L674.90 439.62L676.90 437.52L677.90 437.52L679.90 439.62L680.90 439.62L682.90 437.52L683.90 437.52L685.90 439.62L686.90 439.62L688.90 437.52L689.90 437.52L691.90 439.62L692.90 439.62L694.90 437.52L695.90 437.52L697.90 439.62L698.90 439.62L700.90 437.52L701.90 437.52L703.90 439.62L704.90 439.62L706.90 437.52L707.90 437.52L709.90 439.62L710.90 439.62L712.90 437.52L713.90 437.52L715.90 439.62L716.90 439.62L718.64 437.52L718.64 437.52L718.64 439.62L718.64 439.62" stroke="#3794ff" stroke-width="1.15"/><path d="M818.12 439.62L820.12 437.52L821.12 437.52L823.12 439.62L824.12 439.62L826.12 437.52L827.12 437.52L829.12 439.62L830.12 439.62L832.12 437.52L833.12 437.52L835.12 439.62L836.12 439.62L838.12 437.52L839.12 437.52L841.12 439.62L842.12 439.62L844.12 437.52L845.12 437.52L847.12 439.62L848.12 439.62L850.12 437.52L851.12 437.52L853.12 439.62L854.12 439.62L856.12 437.52L857.12 437.52L859.12 439.62L860.12 439.62L862.12 437.52L863.12 437.52L865.12 439.62L866.12 439.62L867.86 437.52L867.86 437.52L867.86 439.62L867.86 439.62" stroke="#3794ff" stroke-width="1.15"/><path d="M876.15 439.62L878.15 437.52L879.15 437.52L881.15 439.62L882.15 439.62L884.15 437.52L885.15 437.52L887.15 439.62L888.15 439.62L890.15 437.52L891.15 437.52L893.15 439.62L894.15 439.62L896.15 437.52L897.15 437.52L899.15 439.62L900.15 439.62L902.15 437.52L903.15 437.52L905.15 439.62L906.15 439.62L908.15 437.52L909.15 437.52L911.15 439.62L912.15 439.62L914.15 437.52L915.15 437.52L917.15 439.62L918.15 439.62L920.15 437.52L921.15 437.52L923.15 439.62L924.15 439.62L926.15 437.52L927.15 437.52L929.15 439.62L930.15 439.62L932.15 437.52L933.15 437.52L935.15 439.62L936.15 439.62L938.15 437.52L939.15 437.52L941.15 439.62L942.15 439.62L944.15 437.52L945.15 437.52L947.15 439.62L948.15 439.62L950.15 437.52L950.76 437.52L950.76 439.62L950.76 439.62" stroke="#3794ff" stroke-width="1.15"/><path d="M959.05 439.62L961.05 437.52L962.05 437.52L964.05 439.62L965.05 439.62L967.05 437.52L968.05 437.52L970.05 439.62L971.05 439.62L973.05 437.52L974.05 437.52L976.05 439.62L977.05 439.62L979.05 437.52L980.05 437.52L982.05 439.62L983.05 439.62L985.05 437.52L986.05 437.52L988.05 439.62L989.05 439.62L991.05 437.52L992.05 437.52L994.05 439.62L995.05 439.62L997.05 437.52L998.05 437.52L1000.05 439.62L1001.05 439.62L1003.05 437.52L1004.05 437.52L1006.05 439.62L1007.05 439.62L1009.05 437.52L1010.05 437.52L1012.05 439.62L1013.05 439.62L1015.05 437.52L1016.05 437.52L1018.05 439.62L1019.05 439.62L1021.05 437.52L1022.05 437.52L1024.05 439.62L1025.05 439.62L1027.05 437.52L1028.05 437.52L1030.05 439.62L1031.05 439.62L1033.05 437.52L1033.66 437.52L1033.66 439.62L1033.66 439.62" stroke="#3794ff" stroke-width="1.15"/><path d="M586.00 458.30L588.00 456.20L589.00 456.20L591.00 458.30L592.00 458.30L594.00 456.20L595.00 456.20L597.00 458.30L598.00 458.30L600.00 456.20L601.00 456.20L603.00 458.30L604.00 458.30L606.00 456.20L607.00 456.20L609.00 458.30L610.00 458.30L612.00 456.20L613.00 456.20L615.00 458.30L616.00 458.30L618.00 456.20L619.00 456.20L621.00 458.30L622.00 458.30L624.00 456.20L625.00 456.20L627.00 458.30L628.00 458.30L630.00 456.20L631.00 456.20L633.00 458.30L634.00 458.30L635.74 456.20L635.74 456.20L635.74 458.30L635.74 458.30" stroke="#3794ff" stroke-width="1.15"/><path d="M818.12 458.30L820.12 456.20L821.12 456.20L823.12 458.30L824.12 458.30L826.12 456.20L827.12 456.20L829.12 458.30L830.12 458.30L832.12 456.20L833.12 456.20L835.12 458.30L836.12 458.30L838.12 456.20L839.12 456.20L841.12 458.30L842.12 458.30L844.12 456.20L845.12 456.20L847.12 458.30L848.12 458.30L850.12 456.20L851.12 456.20L853.12 458.30L854.12 458.30L856.12 456.20L857.12 456.20L859.12 458.30L860.12 458.30L862.12 456.20L863.12 456.20L865.12 458.30L866.12 458.30L867.86 456.20L867.86 456.20L867.86 458.30L867.86 458.30" stroke="#3794ff" stroke-width="1.15"/><path d="M876.15 458.30L878.15 456.20L879.15 456.20L881.15 458.30L882.15 458.30L884.15 456.20L885.15 456.20L887.15 458.30L888.15 458.30L890.15 456.20L891.15 456.20L893.15 458.30L894.15 458.30L896.15 456.20L897.15 456.20L899.15 458.30L900.15 458.30L902.15 456.20L903.15 456.20L905.15 458.30L906.15 458.30L908.15 456.20L909.15 456.20L911.15 458.30L912.15 458.30L914.15 456.20L915.15 456.20L917.15 458.30L918.15 458.30L920.15 456.20L921.15 456.20L923.15 458.30L924.15 458.30L926.15 456.20L927.15 456.20L929.15 458.30L930.15 458.30L932.15 456.20L933.15 456.20L935.15 458.30L936.15 458.30L938.15 456.20L939.15 456.20L941.15 458.30L942.15 458.30L944.15 456.20L945.15 456.20L947.15 458.30L948.15 458.30L950.15 456.20L950.76 456.20L950.76 458.30L950.76 458.30" stroke="#3794ff" stroke-width="1.15"/><path d="M602.58 495.66L604.58 493.56L605.58 493.56L607.58 495.66L608.58 495.66L610.58 493.56L611.58 493.56L613.58 495.66L614.58 495.66L616.58 493.56L617.58 493.56L619.58 495.66L620.58 495.66L622.58 493.56L623.58 493.56L625.58 495.66L626.58 495.66L628.58 493.56L629.58 493.56L631.58 495.66L632.58 495.66L634.58 493.56L635.58 493.56L637.58 495.66L638.58 495.66L640.58 493.56L641.58 493.56L643.58 495.66L644.58 495.66L646.58 493.56L647.58 493.56L649.58 495.66L650.58 495.66L652.58 493.56L653.58 493.56L655.58 495.66L656.58 495.66L658.58 493.56L659.58 493.56L661.58 495.66L662.58 495.66L664.58 493.56L665.58 493.56L667.58 495.66L668.58 495.66L670.58 493.56L671.58 493.56L673.58 495.66L674.58 495.66L676.58 493.56L677.58 493.56L679.58 495.66L680.58 495.66L682.58 493.56L683.58 493.56L685.58 495.66L686.58 495.66L688.58 493.56L689.58 493.56L691.58 495.66L692.58 495.66L693.77 493.56L693.77 493.56L693.77 495.66L693.77 495.66" stroke="#3794ff" stroke-width="1.15"/><path d="M586.00 514.34L588.00 512.24L589.00 512.24L591.00 514.34L592.00 514.34L594.00 512.24L595.00 512.24L597.00 514.34L598.00 514.34L600.00 512.24L601.00 512.24L603.00 514.34L604.00 514.34L606.00 512.24L607.00 512.24L609.00 514.34L610.00 514.34L612.00 512.24L613.00 512.24L615.00 514.34L616.00 514.34L618.00 512.24L619.00 512.24L621.00 514.34L622.00 514.34L624.00 512.24L625.00 512.24L627.00 514.34L628.00 514.34L630.00 512.24L631.00 512.24L633.00 514.34L634.00 514.34L636.00 512.24L637.00 512.24L639.00 514.34L640.00 514.34L642.00 512.24L643.00 512.24L645.00 514.34L646.00 514.34L648.00 512.24L649.00 512.24L651.00 514.34L652.00 514.34L654.00 512.24L655.00 512.24L657.00 514.34L658.00 514.34L660.00 512.24L661.00 512.24L663.00 514.34L664.00 514.34L666.00 512.24L667.00 512.24L668.90 514.34L668.90 514.34" stroke="#3794ff" stroke-width="1.15"/><path d="M677.19 514.34L679.19 512.24L680.19 512.24L682.19 514.34L683.19 514.34L685.19 512.24L686.19 512.24L688.19 514.34L689.19 514.34L691.19 512.24L692.19 512.24L694.19 514.34L695.19 514.34L697.19 512.24L698.19 512.24L700.19 514.34L701.19 514.34L703.19 512.24L704.19 512.24L706.19 514.34L707.19 514.34L709.19 512.24L710.19 512.24L712.19 514.34L713.19 514.34L715.19 512.24L716.19 512.24L718.19 514.34L718.64 514.34" stroke="#3794ff" stroke-width="1.15"/><path d="M859.57 514.34L861.57 512.24L862.57 512.24L864.57 514.34L865.57 514.34L867.57 512.24L868.57 512.24L870.57 514.34L871.57 514.34L873.57 512.24L874.57 512.24L876.57 514.34L877.57 514.34L879.57 512.24L880.57 512.24L882.57 514.34L883.57 514.34L885.57 512.24L886.57 512.24L888.57 514.34L889.57 514.34L891.57 512.24L892.57 512.24L894.57 514.34L895.57 514.34L897.57 512.24L898.57 512.24L900.57 514.34L901.57 514.34L903.57 512.24L904.57 512.24L906.57 514.34L907.57 514.34L909.57 512.24L910.57 512.24L912.57 514.34L913.57 514.34L915.57 512.24L916.57 512.24L917.60 514.34L917.60 514.34" stroke="#3794ff" stroke-width="1.15"/><path d="M950.76 514.34L952.76 512.24L953.76 512.24L955.76 514.34L956.76 514.34L958.76 512.24L959.76 512.24L961.76 514.34L962.76 514.34L964.76 512.24L965.76 512.24L967.76 514.34L968.76 514.34L970.76 512.24L971.76 512.24L973.76 514.34L974.76 514.34L976.76 512.24L977.76 512.24L979.76 514.34L980.76 514.34L982.76 512.24L983.76 512.24L985.76 514.34L986.76 514.34L988.76 512.24L989.76 512.24L991.76 514.34L992.76 514.34L994.76 512.24L995.76 512.24L997.76 514.34L998.76 514.34L1000.50 512.24L1000.50 512.24L1000.50 514.34L1000.50 514.34" stroke="#3794ff" stroke-width="1.15"/><path d="M586.00 533.02L588.00 530.92L589.00 530.92L591.00 533.02L592.00 533.02L594.00 530.92L595.00 530.92L597.00 533.02L598.00 533.02L600.00 530.92L601.00 530.92L603.00 533.02L604.00 533.02L606.00 530.92L607.00 530.92L609.00 533.02L610.00 533.02L612.00 530.92L613.00 530.92L615.00 533.02L616.00 533.02L618.00 530.92L619.00 530.92L621.00 533.02L622.00 533.02L624.00 530.92L625.00 530.92L627.00 533.02L628.00 533.02L630.00 530.92L631.00 530.92L633.00 533.02L634.00 533.02L636.00 530.92L637.00 530.92L639.00 533.02L640.00 533.02L642.00 530.92L643.00 530.92L645.00 533.02L646.00 533.02L648.00 530.92L649.00 530.92L651.00 533.02L652.00 533.02L654.00 530.92L655.00 530.92L657.00 533.02L658.00 533.02L660.00 530.92L661.00 530.92L663.00 533.02L664.00 533.02L666.00 530.92L667.00 530.92L668.90 533.02L668.90 533.02" stroke="#3794ff" stroke-width="1.15"/><path d="M685.48 533.02L687.48 530.92L688.48 530.92L690.48 533.02L691.48 533.02L693.48 530.92L694.48 530.92L696.48 533.02L697.48 533.02L699.48 530.92L700.48 530.92L702.48 533.02L703.48 533.02L705.48 530.92L706.48 530.92L708.48 533.02L709.48 533.02L711.48 530.92L712.48 530.92L714.48 533.02L715.48 533.02L717.48 530.92L718.48 530.92L720.48 533.02L721.48 533.02L723.48 530.92L724.48 530.92L726.48 533.02L726.93 533.02" stroke="#3794ff" stroke-width="1.15"/><path d="M867.86 533.02L869.86 530.92L870.86 530.92L872.86 533.02L873.86 533.02L875.86 530.92L876.86 530.92L878.86 533.02L879.86 533.02L881.86 530.92L882.86 530.92L884.86 533.02L885.86 533.02L887.86 530.92L888.86 530.92L890.86 533.02L891.86 533.02L893.86 530.92L894.86 530.92L896.86 533.02L897.86 533.02L899.86 530.92L900.86 530.92L902.86 533.02L903.86 533.02L905.86 530.92L906.86 530.92L908.86 533.02L909.86 533.02L911.86 530.92L912.86 530.92L914.86 533.02L915.86 533.02L917.86 530.92L918.86 530.92L920.86 533.02L921.86 533.02L923.86 530.92L924.86 530.92L925.89 533.02L925.89 533.02" stroke="#3794ff" stroke-width="1.15"/><path d="M959.05 533.02L961.05 530.92L962.05 530.92L964.05 533.02L965.05 533.02L967.05 530.92L968.05 530.92L970.05 533.02L971.05 533.02L973.05 530.92L974.05 530.92L976.05 533.02L977.05 533.02L979.05 530.92L980.05 530.92L982.05 533.02L983.05 533.02L985.05 530.92L986.05 530.92L988.05 533.02L989.05 533.02L991.05 530.92L992.05 530.92L994.05 533.02L995.05 533.02L997.05 530.92L998.05 530.92L1000.05 533.02L1001.05 533.02L1003.05 530.92L1004.05 530.92L1006.05 533.02L1007.05 533.02L1008.79 530.92L1008.79 530.92L1008.79 533.02L1008.79 533.02" stroke="#3794ff" stroke-width="1.15"/><path d="M586.00 551.70L588.00 549.60L589.00 549.60L591.00 551.70L592.00 551.70L594.00 549.60L595.00 549.60L597.00 551.70L598.00 551.70L600.00 549.60L601.00 549.60L603.00 551.70L604.00 551.70L606.00 549.60L607.00 549.60L609.00 551.70L610.00 551.70L612.00 549.60L613.00 549.60L615.00 551.70L616.00 551.70L618.00 549.60L619.00 549.60L621.00 551.70L622.00 551.70L624.00 549.60L625.00 549.60L627.00 551.70L628.00 551.70L630.00 549.60L631.00 549.60L633.00 551.70L634.00 551.70L636.00 549.60L637.00 549.60L639.00 551.70L640.00 551.70L642.00 549.60L643.00 549.60L645.00 551.70L646.00 551.70L648.00 549.60L649.00 549.60L651.00 551.70L652.00 551.70L654.00 549.60L655.00 549.60L657.00 551.70L658.00 551.70L660.00 549.60L661.00 549.60L663.00 551.70L664.00 551.70L666.00 549.60L667.00 549.60L668.90 551.70L668.90 551.70" stroke="#3794ff" stroke-width="1.15"/><path d="M842.99 551.70L844.99 549.60L845.99 549.60L847.99 551.70L848.99 551.70L850.99 549.60L851.99 549.60L853.99 551.70L854.99 551.70L856.99 549.60L857.99 549.60L859.99 551.70L860.99 551.70L862.99 549.60L863.99 549.60L865.99 551.70L866.99 551.70L868.99 549.60L869.99 549.60L871.99 551.70L872.99 551.70L874.99 549.60L875.99 549.60L877.99 551.70L878.99 551.70L880.99 549.60L881.99 549.60L883.99 551.70L884.99 551.70L886.99 549.60L887.99 549.60L889.99 551.70L890.99 551.70L892.99 549.60L893.99 549.60L895.99 551.70L896.99 551.70L898.99 549.60L899.99 549.60L901.99 551.70L902.99 551.70L904.99 549.60L905.99 549.60L907.99 551.70L908.99 551.70L910.99 549.60L911.99 549.60L913.99 551.70L914.99 551.70L916.99 549.60L917.99 549.60L919.99 551.70L920.99 551.70L922.99 549.60L923.99 549.60L925.89 551.70L925.89 551.70" stroke="#3794ff" stroke-width="1.15"/><path d="M934.18 551.70L936.18 549.60L937.18 549.60L939.18 551.70L940.18 551.70L942.18 549.60L943.18 549.60L945.18 551.70L946.18 551.70L948.18 549.60L949.18 549.60L951.18 551.70L952.18 551.70L954.18 549.60L955.18 549.60L957.18 551.70L958.18 551.70L960.18 549.60L961.18 549.60L963.18 551.70L964.18 551.70L966.18 549.60L967.18 549.60L969.18 551.70L970.18 551.70L972.18 549.60L973.18 549.60L975.18 551.70L975.63 551.70" stroke="#3794ff" stroke-width="1.15"/><path d="M950.76 570.38L952.76 568.28L953.76 568.28L955.76 570.38L956.76 570.38L958.76 568.28L959.76 568.28L961.76 570.38L962.76 570.38L964.76 568.28L965.76 568.28L967.76 570.38L968.76 570.38L970.76 568.28L971.76 568.28L973.76 570.38L974.76 570.38L976.76 568.28L977.76 568.28L979.76 570.38L980.76 570.38L982.76 568.28L983.76 568.28L985.76 570.38L986.76 570.38L988.76 568.28L989.76 568.28L991.76 570.38L992.21 570.38" stroke="#3794ff" stroke-width="1.15"/><path d="M602.58 607.74L604.58 605.64L605.58 605.64L607.58 607.74L608.58 607.74L610.58 605.64L611.58 605.64L613.58 607.74L614.58 607.74L616.58 605.64L617.58 605.64L619.58 607.74L620.58 607.74L622.58 605.64L623.58 605.64L625.58 607.74L626.58 607.74L628.58 605.64L629.58 605.64L631.58 607.74L632.58 607.74L634.58 605.64L635.58 605.64L637.58 607.74L638.58 607.74L640.58 605.64L641.58 605.64L643.58 607.74L644.58 607.74L646.58 605.64L647.58 605.64L649.58 607.74L650.58 607.74L652.58 605.64L653.58 605.64L655.58 607.74L656.58 607.74L658.58 605.64L659.58 605.64L661.58 607.74L662.58 607.74L664.58 605.64L665.58 605.64L667.58 607.74L668.58 607.74L670.58 605.64L671.58 605.64L673.58 607.74L674.58 607.74L676.58 605.64L677.58 605.64L679.58 607.74L680.58 607.74L682.58 605.64L683.58 605.64L685.48 607.74L685.48 607.74" stroke="#3794ff" stroke-width="1.15"/><path d="M784.96 607.74L786.96 605.64L787.96 605.64L789.96 607.74L790.96 607.74L792.96 605.64L793.96 605.64L795.96 607.74L796.96 607.74L798.96 605.64L799.96 605.64L801.96 607.74L802.96 607.74L804.96 605.64L805.96 605.64L807.96 607.74L808.96 607.74L810.96 605.64L811.96 605.64L813.96 607.74L814.96 607.74L816.96 605.64L817.96 605.64L818.12 607.74L818.12 607.74" stroke="#3794ff" stroke-width="1.15"/><path d="M826.41 607.74L828.41 605.64L829.41 605.64L831.41 607.74L832.41 607.74L834.41 605.64L835.41 605.64L837.41 607.74L838.41 607.74L840.41 605.64L841.41 605.64L843.41 607.74L844.41 607.74L846.41 605.64L847.41 605.64L849.41 607.74L850.41 607.74L852.41 605.64L853.41 605.64L855.41 607.74L856.41 607.74L858.41 605.64L859.41 605.64L861.41 607.74L862.41 607.74L864.41 605.64L865.41 605.64L867.41 607.74L868.41 607.74L870.41 605.64L871.41 605.64L873.41 607.74L874.41 607.74L876.15 605.64L876.15 605.64L876.15 607.74L876.15 607.74" stroke="#3794ff" stroke-width="1.15"/><path d="M884.44 607.74L886.44 605.64L887.44 605.64L889.44 607.74L890.44 607.74L892.44 605.64L893.44 605.64L895.44 607.74L896.44 607.74L898.44 605.64L899.44 605.64L901.44 607.74L902.44 607.74L904.44 605.64L905.44 605.64L907.44 607.74L908.44 607.74L910.44 605.64L911.44 605.64L913.44 607.74L914.44 607.74L916.44 605.64L917.44 605.64L919.44 607.74L920.44 607.74L922.44 605.64L923.44 605.64L925.44 607.74L926.44 607.74L928.44 605.64L929.44 605.64L931.44 607.74L932.44 607.74L934.44 605.64L935.44 605.64L937.44 607.74L938.44 607.74L940.44 605.64L941.44 605.64L943.44 607.74L944.44 607.74L946.44 605.64L947.44 605.64L949.44 607.74L950.44 607.74L952.44 605.64L953.44 605.64L955.44 607.74L956.44 607.74L958.44 605.64L959.44 605.64L961.44 607.74L962.44 607.74L964.44 605.64L965.44 605.64L967.34 607.74L967.34 607.74" stroke="#3794ff" stroke-width="1.15"/><path d="M992.21 626.42L994.21 624.32L995.21 624.32L997.21 626.42L998.21 626.42L1000.21 624.32L1001.21 624.32L1003.21 626.42L1004.21 626.42L1006.21 624.32L1007.21 624.32L1009.21 626.42L1010.21 626.42L1012.21 624.32L1013.21 624.32L1015.21 626.42L1016.21 626.42L1018.21 624.32L1019.21 624.32L1021.21 626.42L1022.21 626.42L1024.21 624.32L1025.21 624.32L1027.21 626.42L1028.21 626.42L1030.21 624.32L1031.21 624.32L1033.21 626.42L1034.21 626.42L1036.21 624.32L1037.21 624.32L1039.21 626.42L1040.21 626.42L1041.95 624.32L1041.95 624.32L1041.95 626.42L1041.95 626.42" stroke="#3794ff" stroke-width="1.15"/><path d="M1058.53 626.42L1060.53 624.32L1061.53 624.32L1063.53 626.42L1064.53 626.42L1066.53 624.32L1067.53 624.32L1069.53 626.42L1070.53 626.42L1072.53 624.32L1073.53 624.32L1075.53 626.42L1076.53 626.42L1078.53 624.32L1079.53 624.32L1081.53 626.42L1082.53 626.42L1084.53 624.32L1085.53 624.32L1087.53 626.42L1088.53 626.42L1090.53 624.32L1091.53 624.32L1093.53 626.42L1094.53 626.42L1096.53 624.32L1097.53 624.32L1099.53 626.42L1100.53 626.42L1102.53 624.32L1103.53 624.32L1105.53 626.42L1106.53 626.42L1108.53 624.32L1109.53 624.32L1111.53 626.42L1112.53 626.42L1114.53 624.32L1115.53 624.32L1116.56 626.42L1116.56 626.42" stroke="#3794ff" stroke-width="1.15"/><path d="M1008.79 645.10L1010.79 643.00L1011.79 643.00L1013.79 645.10L1014.79 645.10L1016.79 643.00L1017.79 643.00L1019.79 645.10L1020.79 645.10L1022.79 643.00L1023.79 643.00L1025.79 645.10L1026.79 645.10L1028.79 643.00L1029.79 643.00L1031.79 645.10L1032.79 645.10L1034.79 643.00L1035.79 643.00L1037.79 645.10L1038.79 645.10L1040.79 643.00L1041.79 643.00L1043.79 645.10L1044.79 645.10L1046.79 643.00L1047.79 643.00L1049.79 645.10L1050.79 645.10L1052.79 643.00L1053.79 643.00L1055.79 645.10L1056.79 645.10L1058.53 643.00L1058.53 643.00L1058.53 645.10L1058.53 645.10" stroke="#3794ff" stroke-width="1.15"/><path d="M1075.11 645.10L1077.11 643.00L1078.11 643.00L1080.11 645.10L1081.11 645.10L1083.11 643.00L1084.11 643.00L1086.11 645.10L1087.11 645.10L1089.11 643.00L1090.11 643.00L1092.11 645.10L1093.11 645.10L1095.11 643.00L1096.11 643.00L1098.11 645.10L1099.11 645.10L1101.11 643.00L1102.11 643.00L1104.11 645.10L1105.11 645.10L1107.11 643.00L1108.11 643.00L1110.11 645.10L1111.11 645.10L1113.11 643.00L1114.11 643.00L1116.11 645.10L1117.11 645.10L1119.11 643.00L1120.11 643.00L1122.11 645.10L1123.11 645.10L1125.11 643.00L1126.11 643.00L1128.11 645.10L1129.11 645.10L1131.11 643.00L1132.11 643.00L1133.14 645.10L1133.14 645.10" stroke="#3794ff" stroke-width="1.15"/><path d="M602.58 682.46L604.58 680.36L605.58 680.36L607.58 682.46L608.58 682.46L610.58 680.36L611.58 680.36L613.58 682.46L614.58 682.46L616.58 680.36L617.58 680.36L619.58 682.46L620.58 682.46L622.58 680.36L623.58 680.36L625.58 682.46L626.58 682.46L628.58 680.36L629.58 680.36L631.58 682.46L632.58 682.46L634.58 680.36L635.58 680.36L637.58 682.46L638.58 682.46L640.58 680.36L641.58 680.36L643.58 682.46L644.03 682.46" stroke="#3794ff" stroke-width="1.15"/><path d="M586.00 701.14L588.00 699.04L589.00 699.04L591.00 701.14L592.00 701.14L594.00 699.04L595.00 699.04L597.00 701.14L598.00 701.14L600.00 699.04L601.00 699.04L603.00 701.14L604.00 701.14L606.00 699.04L607.00 699.04L609.00 701.14L610.00 701.14L612.00 699.04L613.00 699.04L615.00 701.14L616.00 701.14L618.00 699.04L619.00 699.04L621.00 701.14L622.00 701.14L624.00 699.04L625.00 699.04L627.00 701.14L628.00 701.14L630.00 699.04L631.00 699.04L633.00 701.14L634.00 701.14L636.00 699.04L637.00 699.04L639.00 701.14L640.00 701.14L642.00 699.04L643.00 699.04L645.00 701.14L646.00 701.14L648.00 699.04L649.00 699.04L651.00 701.14L652.00 701.14L652.32 699.04L652.32 699.04L652.32 701.14L652.32 701.14" stroke="#3794ff" stroke-width="1.15"/><path d="M660.61 701.14L662.61 699.04L663.61 699.04L665.61 701.14L666.61 701.14L668.61 699.04L669.61 699.04L671.61 701.14L672.61 701.14L674.61 699.04L675.61 699.04L677.61 701.14L678.61 701.14L680.61 699.04L681.61 699.04L683.61 701.14L684.61 701.14L686.61 699.04L687.61 699.04L689.61 701.14L690.61 701.14L692.61 699.04L693.61 699.04L695.61 701.14L696.61 701.14L698.61 699.04L699.61 699.04L701.61 701.14L702.06 701.14" stroke="#3794ff" stroke-width="1.15"/><path d="M619.16 738.50L621.16 736.40L622.16 736.40L624.16 738.50L625.16 738.50L627.16 736.40L628.16 736.40L630.16 738.50L631.16 738.50L633.16 736.40L634.16 736.40L636.16 738.50L637.16 738.50L639.16 736.40L640.16 736.40L642.16 738.50L643.16 738.50L645.16 736.40L646.16 736.40L648.16 738.50L649.16 738.50L651.16 736.40L652.16 736.40L652.32 738.50L652.32 738.50" stroke="#3794ff" stroke-width="1.15"/><path d="M660.61 738.50L662.61 736.40L663.61 736.40L665.61 738.50L666.61 738.50L668.61 736.40L669.61 736.40L671.61 738.50L672.61 738.50L674.61 736.40L675.61 736.40L677.61 738.50L678.61 738.50L680.61 736.40L681.61 736.40L683.61 738.50L684.61 738.50L686.61 736.40L687.61 736.40L689.61 738.50L690.61 738.50L692.61 736.40L693.61 736.40L695.61 738.50L696.61 738.50L698.61 736.40L699.61 736.40L701.61 738.50L702.06 738.50" stroke="#3794ff" stroke-width="1.15"/><path d="M909.31 738.50L911.31 736.40L912.31 736.40L914.31 738.50L915.31 738.50L917.31 736.40L918.31 736.40L920.31 738.50L921.31 738.50L923.31 736.40L924.31 736.40L926.31 738.50L927.31 738.50L929.31 736.40L930.31 736.40L932.31 738.50L933.31 738.50L935.31 736.40L936.31 736.40L938.31 738.50L939.31 738.50L941.31 736.40L942.31 736.40L944.31 738.50L945.31 738.50L947.31 736.40L948.31 736.40L950.31 738.50L950.76 738.50" stroke="#3794ff" stroke-width="1.15"/><path d="M619.16 757.18L621.16 755.08L622.16 755.08L624.16 757.18L625.16 757.18L627.16 755.08L628.16 755.08L630.16 757.18L631.16 757.18L633.16 755.08L634.16 755.08L636.16 757.18L637.16 757.18L639.16 755.08L640.16 755.08L642.16 757.18L643.16 757.18L645.16 755.08L646.16 755.08L648.16 757.18L649.16 757.18L651.16 755.08L652.16 755.08L654.16 757.18L655.16 757.18L657.16 755.08L658.16 755.08L660.16 757.18L661.16 757.18L663.16 755.08L664.16 755.08L666.16 757.18L667.16 757.18L669.16 755.08L670.16 755.08L672.16 757.18L673.16 757.18L675.16 755.08L676.16 755.08L678.16 757.18L679.16 757.18L681.16 755.08L682.16 755.08L684.16 757.18L685.16 757.18L685.48 755.08L685.48 755.08L685.48 757.18L685.48 757.18" stroke="#3794ff" stroke-width="1.15"/><path d="M693.77 757.18L695.77 755.08L696.77 755.08L698.77 757.18L699.77 757.18L701.77 755.08L702.77 755.08L704.77 757.18L705.77 757.18L707.77 755.08L708.77 755.08L710.77 757.18L711.77 757.18L713.77 755.08L714.77 755.08L716.77 757.18L717.77 757.18L719.77 755.08L720.77 755.08L722.77 757.18L723.77 757.18L725.77 755.08L726.77 755.08L728.77 757.18L729.77 757.18L731.77 755.08L732.77 755.08L734.77 757.18L735.22 757.18" stroke="#3794ff" stroke-width="1.15"/><path d="M950.76 757.18L952.76 755.08L953.76 755.08L955.76 757.18L956.76 757.18L958.76 755.08L959.76 755.08L961.76 757.18L962.76 757.18L964.76 755.08L965.76 755.08L967.76 757.18L968.76 757.18L970.76 755.08L971.76 755.08L973.76 757.18L974.76 757.18L976.76 755.08L977.76 755.08L979.76 757.18L980.76 757.18L982.76 755.08L983.76 755.08L983.92 757.18L983.92 757.18" stroke="#3794ff" stroke-width="1.15"/><path d="M992.21 757.18L994.21 755.08L995.21 755.08L997.21 757.18L998.21 757.18L1000.21 755.08L1001.21 755.08L1003.21 757.18L1004.21 757.18L1006.21 755.08L1007.21 755.08L1009.21 757.18L1010.21 757.18L1012.21 755.08L1013.21 755.08L1015.21 757.18L1016.21 757.18L1018.21 755.08L1019.21 755.08L1021.21 757.18L1022.21 757.18L1024.21 755.08L1025.21 755.08L1027.21 757.18L1028.21 757.18L1030.21 755.08L1031.21 755.08L1033.21 757.18L1033.66 757.18" stroke="#3794ff" stroke-width="1.15"/><rect x="586" y="719.6" width="1" height="37.4" fill="#404040"/></svg>
<svg class="a" style="left:0;top:0" width="1920" height="1080" viewBox="0 0 1920 1080" shape-rendering="crispEdges"><rect x="1796" y="143" width="111" height="2" fill="#2b5a91"/><rect x="1796" y="143" width="6" height="2" fill="#6fa0d8" opacity="0.25"/><rect x="1803" y="143" width="6" height="2" fill="#6fa0d8" opacity="0.25"/><rect x="1803" y="143" width="6" height="2" fill="#3f95f5"/><rect x="1796" y="145" width="6" height="2" fill="#a173a0" opacity="0.42"/><rect x="1803" y="145" width="6" height="2" fill="#3f9f8c" opacity="0.42"/><rect x="1796" y="147" width="6" height="2" fill="#a173a0" opacity="0.42"/><rect x="1803" y="147" width="3" height="2" fill="#3f9f8c" opacity="0.42"/><rect x="1796" y="149" width="6" height="2" fill="#a173a0" opacity="0.42"/><rect x="1803" y="149" width="2" height="2" fill="#3f9f8c" opacity="0.42"/><rect x="1796" y="153" width="111" height="2" fill="#2b5a91"/><rect x="1796" y="153" width="6" height="2" fill="#6fa0d8" opacity="0.25"/><rect x="1802" y="153" width="1" height="2" fill="#6fa0d8" opacity="0.25"/><rect x="1803" y="153" width="4" height="2" fill="#6fa0d8" opacity="0.25"/><rect x="1807" y="153" width="2" height="2" fill="#6fa0d8" opacity="0.25"/><rect x="1796" y="153" width="6" height="2" fill="#3f95f5"/><rect x="1796" y="157" width="111" height="2" fill="#2b5a91"/><rect x="1796" y="157" width="1" height="2" fill="#6fa0d8" opacity="0.25"/><rect x="1798" y="157" width="9" height="2" fill="#6fa0d8" opacity="0.25"/><rect x="1798" y="157" width="9" height="2" fill="#3f95f5"/><rect x="1796" y="159" width="111" height="2" fill="#2b5a91"/><rect x="1796" y="159" width="6" height="2" fill="#6fa0d8" opacity="0.25"/><rect x="1803" y="159" width="1" height="2" fill="#6fa0d8" opacity="0.25"/><rect x="1805" y="159" width="3" height="2" fill="#6fa0d8" opacity="0.25"/><rect x="1796" y="159" width="6" height="2" fill="#3f95f5"/><rect x="1796" y="161" width="111" height="2" fill="#2b5a91"/><rect x="1796" y="161" width="7" height="2" fill="#6fa0d8" opacity="0.25"/><rect x="1804" y="161" width="1" height="2" fill="#6fa0d8" opacity="0.25"/><rect x="1806" y="161" width="3" height="2" fill="#6fa0d8" opacity="0.25"/><rect x="1796" y="161" width="7" height="2" fill="#3f95f5"/><rect x="1796" y="163" width="111" height="2" fill="#2b5a91"/><rect x="1796" y="163" width="6" height="2" fill="#6fa0d8" opacity="0.25"/><rect x="1803" y="163" width="1" height="2" fill="#6fa0d8" opacity="0.25"/><rect x="1805" y="163" width="6" height="2" fill="#6fa0d8" opacity="0.25"/><rect x="1811" y="163" width="1" height="2" fill="#6fa0d8" opacity="0.25"/><rect x="1812" y="163" width="7" height="2" fill="#6fa0d8" opacity="0.25"/><rect x="1819" y="163" width="1" height="2" fill="#6fa0d8" opacity="0.25"/><rect x="1820" y="163" width="8" height="2" fill="#6fa0d8" opacity="0.25"/><rect x="1828" y="163" width="1" height="2" fill="#6fa0d8" opacity="0.25"/><rect x="1829" y="163" width="1" height="2" fill="#6fa0d8" opacity="0.25"/><rect x="1830" y="163" width="6" height="2" fill="#6fa0d8" opacity="0.25"/><rect x="1836" y="163" width="1" height="2" fill="#6fa0d8" opacity="0.25"/><rect x="1838" y="163" width="7" height="2" fill="#6fa0d8" opacity="0.25"/><rect x="1845" y="163" width="1" height="2" fill="#6fa0d8" opacity="0.25"/><rect x="1846" y="163" width="1" height="2" fill="#6fa0d8" opacity="0.25"/><rect x="1796" y="163" width="6" height="2" fill="#3f95f5"/><rect x="1805" y="163" width="6" height="2" fill="#3f95f5"/><rect x="1830" y="163" width="6" height="2" fill="#3f95f5"/><rect x="1838" y="163" width="7" height="2" fill="#3f95f5"/><rect x="1796" y="167" width="111" height="2" fill="#2b5a91"/><rect x="1796" y="167" width="1" height="2" fill="#6fa0d8" opacity="0.25"/><rect x="1798" y="167" width="6" height="2" fill="#6fa0d8" opacity="0.25"/><rect x="1798" y="167" width="6" height="2" fill="#3f95f5"/><rect x="1796" y="169" width="111" height="2" fill="#2b5a91"/><rect x="1796" y="169" width="6" height="2" fill="#6fa0d8" opacity="0.25"/><rect x="1803" y="169" width="1" height="2" fill="#6fa0d8" opacity="0.25"/><rect x="1805" y="169" width="6" height="2" fill="#6fa0d8" opacity="0.25"/><rect x="1811" y="169" width="1" height="2" fill="#6fa0d8" opacity="0.25"/><rect x="1812" y="169" width="4" height="2" fill="#6fa0d8" opacity="0.25"/><rect x="1816" y="169" width="1" height="2" fill="#6fa0d8" opacity="0.25"/><rect x="1817" y="169" width="4" height="2" fill="#6fa0d8" opacity="0.25"/><rect x="1821" y="169" width="1" height="2" fill="#6fa0d8" opacity="0.25"/><rect x="1822" y="169" width="32" height="2" fill="#6fa0d8" opacity="0.25"/><rect x="1854" y="169" width="1" height="2" fill="#6fa0d8" opacity="0.25"/><rect x="1856" y="169" width="2" height="2" fill="#6fa0d8" opacity="0.25"/><rect x="1858" y="169" width="1" height="2" fill="#6fa0d8" opacity="0.25"/><rect x="1796" y="169" width="6" height="2" fill="#3f95f5"/><rect x="1805" y="169" width="6" height="2" fill="#3f95f5"/><rect x="1823" y="169" width="6" height="2" fill="#3f95f5"/><rect x="1830" y="169" width="9" height="2" fill="#3f95f5"/><rect x="1840" y="169" width="9" height="2" fill="#3f95f5"/><rect x="1796" y="171" width="111" height="2" fill="#2b5a91"/><rect x="1796" y="171" width="7" height="2" fill="#6fa0d8" opacity="0.25"/><rect x="1804" y="171" width="1" height="2" fill="#6fa0d8" opacity="0.25"/><rect x="1806" y="171" width="6" height="2" fill="#6fa0d8" opacity="0.25"/><rect x="1812" y="171" width="1" height="2" fill="#6fa0d8" opacity="0.25"/><rect x="1813" y="171" width="4" height="2" fill="#6fa0d8" opacity="0.25"/><rect x="1817" y="171" width="1" height="2" fill="#6fa0d8" opacity="0.25"/><rect x="1818" y="171" width="4" height="2" fill="#6fa0d8" opacity="0.25"/><rect x="1822" y="171" width="1" height="2" fill="#6fa0d8" opacity="0.25"/><rect x="1823" y="171" width="32" height="2" fill="#6fa0d8" opacity="0.25"/><rect x="1855" y="171" width="1" height="2" fill="#6fa0d8" opacity="0.25"/><rect x="1857" y="171" width="2" height="2" fill="#6fa0d8" opacity="0.25"/><rect x="1859" y="171" width="1" height="2" fill="#6fa0d8" opacity="0.25"/><rect x="1796" y="171" width="6" height="2" fill="#3f95f5"/><rect x="1806" y="171" width="6" height="2" fill="#3f95f5"/><rect x="1824" y="171" width="6" height="2" fill="#3f95f5"/><rect x="1831" y="171" width="9" height="2" fill="#3f95f5"/><rect x="1841" y="171" width="9" height="2" fill="#3f95f5"/><rect x="1796" y="173" width="111" height="2" fill="#2b5a91"/><rect x="1796" y="173" width="7" height="2" fill="#6fa0d8" opacity="0.25"/><rect x="1804" y="173" width="1" height="2" fill="#6fa0d8" opacity="0.25"/><rect x="1806" y="173" width="6" height="2" fill="#6fa0d8" opacity="0.25"/><rect x="1812" y="173" width="1" height="2" fill="#6fa0d8" opacity="0.25"/><rect x="1813" y="173" width="4" height="2" fill="#6fa0d8" opacity="0.25"/><rect x="1817" y="173" width="1" height="2" fill="#6fa0d8" opacity="0.25"/><rect x="1818" y="173" width="4" height="2" fill="#6fa0d8" opacity="0.25"/><rect x="1822" y="173" width="1" height="2" fill="#6fa0d8" opacity="0.25"/><rect x="1823" y="173" width="32" height="2" fill="#6fa0d8" opacity="0.25"/><rect x="1855" y="173" width="1" height="2" fill="#6fa0d8" opacity="0.25"/><rect x="1857" y="173" width="2" height="2" fill="#6fa0d8" opacity="0.25"/><rect x="1859" y="173" width="1" height="2" fill="#6fa0d8" opacity="0.25"/><rect x="1796" y="173" width="6" height="2" fill="#3f95f5"/><rect x="1824" y="173" width="6" height="2" fill="#3f95f5"/><rect x="1831" y="173" width="9" height="2" fill="#3f95f5"/><rect x="1796" y="177" width="111" height="2" fill="#2b5a91"/><rect x="1796" y="177" width="1" height="2" fill="#6fa0d8" opacity="0.25"/><rect x="1798" y="177" width="11" height="2" fill="#6fa0d8" opacity="0.25"/><rect x="1798" y="177" width="11" height="2" fill="#3f95f5"/><rect x="1796" y="179" width="111" height="2" fill="#2b5a91"/><rect x="1796" y="179" width="16" height="2" fill="#6fa0d8" opacity="0.25"/><rect x="1813" y="179" width="1" height="2" fill="#6fa0d8" opacity="0.25"/><rect x="1815" y="179" width="2" height="2" fill="#6fa0d8" opacity="0.25"/><rect x="1817" y="179" width="1" height="2" fill="#6fa0d8" opacity="0.25"/><rect x="1818" y="179" width="4" height="2" fill="#6fa0d8" opacity="0.25"/><rect x="1822" y="179" width="1" height="2" fill="#6fa0d8" opacity="0.25"/><rect x="1823" y="179" width="4" height="2" fill="#6fa0d8" opacity="0.25"/><rect x="1827" y="179" width="1" height="2" fill="#6fa0d8" opacity="0.25"/><rect x="1828" y="179" width="9" height="2" fill="#6fa0d8" opacity="0.25"/><rect x="1837" y="179" width="1" height="2" fill="#6fa0d8" opacity="0.25"/><rect x="1839" y="179" width="13" height="2" fill="#6fa0d8" opacity="0.25"/><rect x="1852" y="179" width="1" height="2" fill="#6fa0d8" opacity="0.25"/><rect x="1796" y="179" width="10" height="2" fill="#3f95f5"/><rect x="1807" y="179" width="5" height="2" fill="#3f95f5"/><rect x="1829" y="179" width="7" height="2" fill="#3f95f5"/><rect x="1840" y="179" width="6" height="2" fill="#3f95f5"/><rect x="1796" y="181" width="111" height="2" fill="#2b5a91"/><rect x="1796" y="181" width="17" height="2" fill="#6fa0d8" opacity="0.25"/><rect x="1814" y="181" width="1" height="2" fill="#6fa0d8" opacity="0.25"/><rect x="1816" y="181" width="2" height="2" fill="#6fa0d8" opacity="0.25"/><rect x="1818" y="181" width="1" height="2" fill="#6fa0d8" opacity="0.25"/><rect x="1819" y="181" width="4" height="2" fill="#6fa0d8" opacity="0.25"/><rect x="1823" y="181" width="1" height="2" fill="#6fa0d8" opacity="0.25"/><rect x="1824" y="181" width="4" height="2" fill="#6fa0d8" opacity="0.25"/><rect x="1828" y="181" width="1" height="2" fill="#6fa0d8" opacity="0.25"/><rect x="1829" y="181" width="9" height="2" fill="#6fa0d8" opacity="0.25"/><rect x="1838" y="181" width="1" height="2" fill="#6fa0d8" opacity="0.25"/><rect x="1840" y="181" width="13" height="2" fill="#6fa0d8" opacity="0.25"/><rect x="1853" y="181" width="1" height="2" fill="#6fa0d8" opacity="0.25"/><rect x="1796" y="181" width="10" height="2" fill="#3f95f5"/><rect x="1808" y="181" width="5" height="2" fill="#3f95f5"/><rect x="1830" y="181" width="7" height="2" fill="#3f95f5"/><rect x="1841" y="181" width="6" height="2" fill="#3f95f5"/><rect x="1796" y="183" width="111" height="2" fill="#2b5a91"/><rect x="1796" y="183" width="10" height="2" fill="#6fa0d8" opacity="0.25"/><rect x="1807" y="183" width="1" height="2" fill="#6fa0d8" opacity="0.25"/><rect x="1809" y="183" width="6" height="2" fill="#6fa0d8" opacity="0.25"/><rect x="1815" y="183" width="1" height="2" fill="#6fa0d8" opacity="0.25"/><rect x="1816" y="183" width="5" height="2" fill="#6fa0d8" opacity="0.25"/><rect x="1821" y="183" width="1" height="2" fill="#6fa0d8" opacity="0.25"/><rect x="1822" y="183" width="4" height="2" fill="#6fa0d8" opacity="0.25"/><rect x="1826" y="183" width="1" height="2" fill="#6fa0d8" opacity="0.25"/><rect x="1827" y="183" width="16" height="2" fill="#6fa0d8" opacity="0.25"/><rect x="1843" y="183" width="1" height="2" fill="#6fa0d8" opacity="0.25"/><rect x="1796" y="183" width="10" height="2" fill="#3f95f5"/><rect x="1827" y="183" width="10" height="2" fill="#3f95f5"/><rect x="1838" y="183" width="5" height="2" fill="#3f95f5"/><rect x="1796" y="185" width="111" height="2" fill="#2b5a91"/><rect x="1796" y="185" width="11" height="2" fill="#6fa0d8" opacity="0.25"/><rect x="1808" y="185" width="1" height="2" fill="#6fa0d8" opacity="0.25"/><rect x="1810" y="185" width="6" height="2" fill="#6fa0d8" opacity="0.25"/><rect x="1816" y="185" width="1" height="2" fill="#6fa0d8" opacity="0.25"/><rect x="1817" y="185" width="5" height="2" fill="#6fa0d8" opacity="0.25"/><rect x="1822" y="185" width="1" height="2" fill="#6fa0d8" opacity="0.25"/><rect x="1823" y="185" width="4" height="2" fill="#6fa0d8" opacity="0.25"/><rect x="1827" y="185" width="1" height="2" fill="#6fa0d8" opacity="0.25"/><rect x="1828" y="185" width="17" height="2" fill="#6fa0d8" opacity="0.25"/><rect x="1845" y="185" width="1" height="2" fill="#6fa0d8" opacity="0.25"/><rect x="1840" y="185" width="5" height="2" fill="#3f95f5"/><rect x="1796" y="189" width="111" height="2" fill="#2b5a91"/><rect x="1796" y="189" width="1" height="2" fill="#6fa0d8" opacity="0.25"/><rect x="1798" y="189" width="10" height="2" fill="#6fa0d8" opacity="0.25"/><rect x="1809" y="189" width="10" height="2" fill="#6fa0d8" opacity="0.25"/><rect x="1820" y="189" width="4" height="2" fill="#6fa0d8" opacity="0.25"/><rect x="1825" y="189" width="6" height="2" fill="#6fa0d8" opacity="0.25"/><rect x="1832" y="189" width="10" height="2" fill="#6fa0d8" opacity="0.25"/><rect x="1798" y="189" width="10" height="2" fill="#3f95f5"/><rect x="1820" y="189" width="4" height="2" fill="#3f95f5"/><rect x="1825" y="189" width="6" height="2" fill="#3f95f5"/><rect x="1832" y="189" width="10" height="2" fill="#3f95f5"/><rect x="1796" y="191" width="111" height="2" fill="#2b5a91"/><rect x="1796" y="191" width="10" height="2" fill="#6fa0d8" opacity="0.25"/><rect x="1807" y="191" width="1" height="2" fill="#6fa0d8" opacity="0.25"/><rect x="1809" y="191" width="6" height="2" fill="#6fa0d8" opacity="0.25"/><rect x="1815" y="191" width="1" height="2" fill="#6fa0d8" opacity="0.25"/><rect x="1816" y="191" width="9" height="2" fill="#6fa0d8" opacity="0.25"/><rect x="1825" y="191" width="1" height="2" fill="#6fa0d8" opacity="0.25"/><rect x="1826" y="191" width="5" height="2" fill="#6fa0d8" opacity="0.25"/><rect x="1831" y="191" width="1" height="2" fill="#6fa0d8" opacity="0.25"/><rect x="1832" y="191" width="10" height="2" fill="#6fa0d8" opacity="0.25"/><rect x="1842" y="191" width="1" height="2" fill="#6fa0d8" opacity="0.25"/><rect x="1844" y="191" width="1" height="2" fill="#6fa0d8" opacity="0.25"/><rect x="1845" y="191" width="6" height="2" fill="#6fa0d8" opacity="0.25"/><rect x="1851" y="191" width="1" height="2" fill="#6fa0d8" opacity="0.25"/><rect x="1853" y="191" width="7" height="2" fill="#6fa0d8" opacity="0.25"/><rect x="1860" y="191" width="1" height="2" fill="#6fa0d8" opacity="0.25"/><rect x="1861" y="191" width="1" height="2" fill="#6fa0d8" opacity="0.25"/><rect x="1845" y="191" width="6" height="2" fill="#3f95f5"/><rect x="1853" y="191" width="7" height="2" fill="#3f95f5"/><rect x="1796" y="193" width="111" height="2" fill="#2b5a91"/><rect x="1796" y="193" width="11" height="2" fill="#6fa0d8" opacity="0.25"/><rect x="1808" y="193" width="1" height="2" fill="#6fa0d8" opacity="0.25"/><rect x="1810" y="193" width="6" height="2" fill="#6fa0d8" opacity="0.25"/><rect x="1816" y="193" width="1" height="2" fill="#6fa0d8" opacity="0.25"/><rect x="1817" y="193" width="9" height="2" fill="#6fa0d8" opacity="0.25"/><rect x="1826" y="193" width="1" height="2" fill="#6fa0d8" opacity="0.25"/><rect x="1827" y="193" width="5" height="2" fill="#6fa0d8" opacity="0.25"/><rect x="1832" y="193" width="1" height="2" fill="#6fa0d8" opacity="0.25"/><rect x="1833" y="193" width="11" height="2" fill="#6fa0d8" opacity="0.25"/><rect x="1844" y="193" width="1" height="2" fill="#6fa0d8" opacity="0.25"/><rect x="1846" y="193" width="1" height="2" fill="#6fa0d8" opacity="0.25"/><rect x="1847" y="193" width="6" height="2" fill="#6fa0d8" opacity="0.25"/><rect x="1853" y="193" width="1" height="2" fill="#6fa0d8" opacity="0.25"/><rect x="1855" y="193" width="7" height="2" fill="#6fa0d8" opacity="0.25"/><rect x="1862" y="193" width="1" height="2" fill="#6fa0d8" opacity="0.25"/><rect x="1863" y="193" width="1" height="2" fill="#6fa0d8" opacity="0.25"/><rect x="1847" y="193" width="6" height="2" fill="#3f95f5"/><rect x="1855" y="193" width="7" height="2" fill="#3f95f5"/><rect x="1796" y="197" width="111" height="2" fill="#2b5a91"/><rect x="1796" y="197" width="1" height="2" fill="#6fa0d8" opacity="0.25"/><rect x="1798" y="197" width="5" height="2" fill="#6fa0d8" opacity="0.25"/><rect x="1798" y="197" width="5" height="2" fill="#3f95f5"/><rect x="1796" y="199" width="111" height="2" fill="#2b5a91"/><rect x="1796" y="199" width="14" height="2" fill="#6fa0d8" opacity="0.25"/><rect x="1811" y="199" width="1" height="2" fill="#6fa0d8" opacity="0.25"/><rect x="1813" y="199" width="2" height="2" fill="#6fa0d8" opacity="0.25"/><rect x="1796" y="199" width="8" height="2" fill="#3f95f5"/><rect x="1805" y="199" width="5" height="2" fill="#3f95f5"/><rect x="1796" y="201" width="3" height="2" fill="#a173a0" opacity="0.42"/><rect x="1800" y="201" width="1" height="2" fill="#7fa8c4" opacity="0.42"/><rect x="1802" y="201" width="2" height="2" fill="#a173a0" opacity="0.42"/><rect x="1805" y="201" width="5" height="2" fill="#3f9f8c" opacity="0.42"/><rect x="1810" y="201" width="1" height="2" fill="#c8b040" opacity="0.42"/><rect x="1811" y="201" width="1" height="2" fill="#98a88c" opacity="0.42"/><rect x="1812" y="201" width="1" height="2" fill="#a0a0a0" opacity="0.42"/><rect x="1814" y="201" width="1" height="2" fill="#98a88c" opacity="0.42"/><rect x="1815" y="201" width="1" height="2" fill="#c8b040" opacity="0.42"/><rect x="1816" y="201" width="1" height="2" fill="#a0a0a0" opacity="0.42"/><rect x="1796" y="203" width="111" height="2" fill="#2b5a91"/><rect x="1800" y="203" width="10" height="2" fill="#6fa0d8" opacity="0.25"/><rect x="1811" y="203" width="1" height="2" fill="#6fa0d8" opacity="0.25"/><rect x="1813" y="203" width="2" height="2" fill="#6fa0d8" opacity="0.25"/><rect x="1815" y="203" width="1" height="2" fill="#6fa0d8" opacity="0.25"/><rect x="1816" y="203" width="4" height="2" fill="#6fa0d8" opacity="0.25"/><rect x="1820" y="203" width="1" height="2" fill="#6fa0d8" opacity="0.25"/><rect x="1821" y="203" width="4" height="2" fill="#6fa0d8" opacity="0.25"/><rect x="1825" y="203" width="1" height="2" fill="#6fa0d8" opacity="0.25"/><rect x="1826" y="203" width="15" height="2" fill="#6fa0d8" opacity="0.25"/><rect x="1841" y="203" width="1" height="2" fill="#6fa0d8" opacity="0.25"/><rect x="1843" y="203" width="1" height="2" fill="#6fa0d8" opacity="0.25"/><rect x="1844" y="203" width="8" height="2" fill="#6fa0d8" opacity="0.25"/><rect x="1852" y="203" width="1" height="2" fill="#6fa0d8" opacity="0.25"/><rect x="1853" y="203" width="1" height="2" fill="#6fa0d8" opacity="0.25"/><rect x="1854" y="203" width="1" height="2" fill="#6fa0d8" opacity="0.25"/><rect x="1855" y="203" width="5" height="2" fill="#6fa0d8" opacity="0.25"/><rect x="1860" y="203" width="1" height="2" fill="#6fa0d8" opacity="0.25"/><rect x="1800" y="203" width="4" height="2" fill="#3f95f5"/><rect x="1805" y="203" width="5" height="2" fill="#3f95f5"/><rect x="1835" y="203" width="5" height="2" fill="#3f95f5"/><rect x="1796" y="205" width="111" height="2" fill="#2b5a91"/><rect x="1800" y="205" width="14" height="2" fill="#6fa0d8" opacity="0.25"/><rect x="1814" y="205" width="1" height="2" fill="#6fa0d8" opacity="0.25"/><rect x="1815" y="205" width="6" height="2" fill="#6fa0d8" opacity="0.25"/><rect x="1821" y="205" width="1" height="2" fill="#6fa0d8" opacity="0.25"/><rect x="1822" y="205" width="6" height="2" fill="#6fa0d8" opacity="0.25"/><rect x="1828" y="205" width="1" height="2" fill="#6fa0d8" opacity="0.25"/><rect x="1829" y="205" width="5" height="2" fill="#6fa0d8" opacity="0.25"/><rect x="1834" y="205" width="1" height="2" fill="#6fa0d8" opacity="0.25"/><rect x="1835" y="205" width="4" height="2" fill="#6fa0d8" opacity="0.25"/><rect x="1839" y="205" width="1" height="2" fill="#6fa0d8" opacity="0.25"/><rect x="1840" y="205" width="10" height="2" fill="#6fa0d8" opacity="0.25"/><rect x="1850" y="205" width="1" height="2" fill="#6fa0d8" opacity="0.25"/><rect x="1851" y="205" width="1" height="2" fill="#6fa0d8" opacity="0.25"/><rect x="1800" y="205" width="8" height="2" fill="#3f95f5"/><rect x="1809" y="205" width="5" height="2" fill="#3f95f5"/><rect x="1840" y="205" width="4" height="2" fill="#3f95f5"/><rect x="1845" y="205" width="5" height="2" fill="#3f95f5"/><rect x="1796" y="209" width="111" height="2" fill="#2b5a91"/><rect x="1796" y="209" width="6" height="2" fill="#6fa0d8" opacity="0.25"/><rect x="1803" y="209" width="7" height="2" fill="#6fa0d8" opacity="0.25"/><rect x="1811" y="209" width="4" height="2" fill="#6fa0d8" opacity="0.25"/><rect x="1817" y="209" width="4" height="2" fill="#6fa0d8" opacity="0.25"/><rect x="1822" y="209" width="10" height="2" fill="#6fa0d8" opacity="0.25"/><rect x="1833" y="209" width="1" height="2" fill="#6fa0d8" opacity="0.25"/><rect x="1824" y="209" width="8" height="2" fill="#3f95f5"/><rect x="1796" y="213" width="111" height="2" fill="#2b5a91"/><rect x="1796" y="213" width="3" height="2" fill="#6fa0d8" opacity="0.25"/><rect x="1800" y="213" width="7" height="2" fill="#6fa0d8" opacity="0.25"/><rect x="1808" y="213" width="4" height="2" fill="#6fa0d8" opacity="0.25"/><rect x="1813" y="213" width="4" height="2" fill="#6fa0d8" opacity="0.25"/><rect x="1819" y="213" width="4" height="2" fill="#6fa0d8" opacity="0.25"/><rect x="1796" y="213" width="5" height="2" fill="#3f95f5"/><rect x="1796" y="217" width="111" height="2" fill="#2b5a91"/><rect x="1796" y="217" width="10" height="2" fill="#6fa0d8" opacity="0.25"/><rect x="1807" y="217" width="4" height="2" fill="#6fa0d8" opacity="0.25"/><rect x="1802" y="217" width="7" height="2" fill="#3f95f5"/><rect x="1796" y="219" width="111" height="2" fill="#2b5a91"/><rect x="1800" y="219" width="3" height="2" fill="#6fa0d8" opacity="0.25"/><rect x="1805" y="219" width="10" height="2" fill="#6fa0d8" opacity="0.25"/><rect x="1816" y="219" width="3" height="2" fill="#6fa0d8" opacity="0.25"/><rect x="1820" y="219" width="3" height="2" fill="#6fa0d8" opacity="0.25"/><rect x="1825" y="219" width="4" height="2" fill="#6fa0d8" opacity="0.25"/><rect x="1830" y="219" width="7" height="2" fill="#6fa0d8" opacity="0.25"/><rect x="1819" y="219" width="4" height="2" fill="#3f95f5"/><rect x="1796" y="221" width="111" height="2" fill="#2b5a91"/><rect x="1804" y="221" width="9" height="2" fill="#6fa0d8" opacity="0.25"/><rect x="1814" y="221" width="8" height="2" fill="#6fa0d8" opacity="0.25"/><rect x="1811" y="221" width="4" height="2" fill="#3f95f5"/><rect x="1818" y="221" width="4" height="2" fill="#3f95f5"/><rect x="1796" y="223" width="111" height="2" fill="#2b5a91"/><rect x="1804" y="223" width="9" height="2" fill="#6fa0d8" opacity="0.25"/><rect x="1814" y="223" width="4" height="2" fill="#6fa0d8" opacity="0.25"/><rect x="1820" y="223" width="2" height="2" fill="#6fa0d8" opacity="0.25"/><rect x="1811" y="223" width="7" height="2" fill="#3f95f5"/><rect x="1800" y="227" width="3" height="2" fill="#6a9955" opacity="0.4"/><rect x="1804" y="227" width="1" height="2" fill="#6a9955" opacity="0.4"/><rect x="1806" y="227" width="3" height="2" fill="#6a9955" opacity="0.4"/><rect x="1796" y="229" width="111" height="2" fill="#2b5a91"/><rect x="1800" y="229" width="4" height="2" fill="#6fa0d8" opacity="0.25"/><rect x="1806" y="229" width="3" height="2" fill="#6fa0d8" opacity="0.25"/><rect x="1811" y="229" width="4" height="2" fill="#6fa0d8" opacity="0.25"/><rect x="1804" y="229" width="4" height="2" fill="#3f95f5"/><rect x="1796" y="231" width="111" height="2" fill="#2b5a91"/><rect x="1804" y="231" width="12" height="2" fill="#6fa0d8" opacity="0.25"/><rect x="1818" y="231" width="4" height="2" fill="#6fa0d8" opacity="0.25"/><rect x="1818" y="231" width="4" height="2" fill="#3f95f5"/><rect x="1800" y="235" width="4" height="2" fill="#6a9955" opacity="0.4"/><rect x="1805" y="235" width="4" height="2" fill="#6a9955" opacity="0.4"/><rect x="1796" y="237" width="111" height="2" fill="#2b5a91"/><rect x="1800" y="237" width="8" height="2" fill="#6fa0d8" opacity="0.25"/><rect x="1809" y="237" width="5" height="2" fill="#6fa0d8" opacity="0.25"/><rect x="1815" y="237" width="3" height="2" fill="#6fa0d8" opacity="0.25"/><rect x="1804" y="237" width="7" height="2" fill="#3f95f5"/><rect x="1796" y="239" width="111" height="2" fill="#2b5a91"/><rect x="1804" y="239" width="4" height="2" fill="#6fa0d8" opacity="0.25"/><rect x="1810" y="239" width="5" height="2" fill="#6fa0d8" opacity="0.25"/><rect x="1817" y="239" width="8" height="2" fill="#6fa0d8" opacity="0.25"/><rect x="1818" y="239" width="7" height="2" fill="#3f95f5"/><rect x="1800" y="243" width="6" height="2" fill="#6a9955" opacity="0.4"/><rect x="1807" y="243" width="2" height="2" fill="#6a9955" opacity="0.4"/><rect x="1796" y="245" width="111" height="2" fill="#2b5a91"/><rect x="1800" y="245" width="5" height="2" fill="#6fa0d8" opacity="0.25"/><rect x="1807" y="245" width="4" height="2" fill="#6fa0d8" opacity="0.25"/><rect x="1812" y="245" width="9" height="2" fill="#6fa0d8" opacity="0.25"/><rect x="1822" y="245" width="2" height="2" fill="#6fa0d8" opacity="0.25"/><rect x="1804" y="245" width="14" height="2" fill="#3f95f5"/><rect x="1796" y="247" width="111" height="2" fill="#2b5a91"/><rect x="1804" y="247" width="4" height="2" fill="#6fa0d8" opacity="0.25"/><rect x="1809" y="247" width="7" height="2" fill="#6fa0d8" opacity="0.25"/><rect x="1817" y="247" width="5" height="2" fill="#6fa0d8" opacity="0.25"/><rect x="1811" y="247" width="7" height="2" fill="#3f95f5"/><rect x="1796" y="251" width="111" height="2" fill="#2b5a91"/><rect x="1800" y="251" width="9" height="2" fill="#6fa0d8" opacity="0.25"/><rect x="1811" y="251" width="6" height="2" fill="#6fa0d8" opacity="0.25"/><rect x="1818" y="251" width="6" height="2" fill="#6fa0d8" opacity="0.25"/><rect x="1826" y="251" width="8" height="2" fill="#6fa0d8" opacity="0.25"/><rect x="1836" y="251" width="3" height="2" fill="#6fa0d8" opacity="0.25"/><rect x="1804" y="251" width="14" height="2" fill="#3f95f5"/><rect x="1834" y="251" width="4" height="2" fill="#3f95f5"/><rect x="1804" y="253" width="4" height="2" fill="#8f9f88" opacity="0.42"/><rect x="1809" y="253" width="12" height="2" fill="#7fa8c4" opacity="0.42"/><rect x="1822" y="253" width="7" height="2" fill="#b4b48c" opacity="0.42"/><rect x="1796" y="257" width="111" height="2" fill="#2b5a91"/><rect x="1800" y="257" width="5" height="2" fill="#6fa0d8" opacity="0.25"/><rect x="1806" y="257" width="12" height="2" fill="#6fa0d8" opacity="0.25"/><rect x="1819" y="257" width="3" height="2" fill="#6fa0d8" opacity="0.25"/><rect x="1823" y="257" width="6" height="2" fill="#6fa0d8" opacity="0.25"/><rect x="1830" y="257" width="10" height="2" fill="#6fa0d8" opacity="0.25"/><rect x="1804" y="257" width="7" height="2" fill="#3f95f5"/><rect x="1812" y="257" width="8" height="2" fill="#3f95f5"/><rect x="1804" y="259" width="8" height="2" fill="#7fa8c4" opacity="0.42"/><rect x="1813" y="259" width="4" height="2" fill="#a173a0" opacity="0.42"/><rect x="1818" y="259" width="7" height="2" fill="#5c8fc0" opacity="0.42"/><rect x="1826" y="259" width="4" height="2" fill="#7fa8c4" opacity="0.42"/><rect x="1831" y="259" width="4" height="2" fill="#7fa8c4" opacity="0.42"/><rect x="1808" y="261" width="7" height="2" fill="#5c8fc0" opacity="0.42"/><rect x="1816" y="261" width="7" height="2" fill="#8f9f88" opacity="0.42"/><rect x="1824" y="261" width="5" height="2" fill="#7fa8c4" opacity="0.42"/><rect x="1830" y="261" width="3" height="2" fill="#7fa8c4" opacity="0.42"/><rect x="1804" y="263" width="3" height="2" fill="#3f9f8c" opacity="0.42"/><rect x="1808" y="265" width="4" height="2" fill="#7fa8c4" opacity="0.42"/><rect x="1813" y="265" width="4" height="2" fill="#3f9f8c" opacity="0.42"/><rect x="1818" y="265" width="8" height="2" fill="#b4b48c" opacity="0.42"/><rect x="1800" y="269" width="9" height="2" fill="#8f9f88" opacity="0.42"/><rect x="1810" y="269" width="8" height="2" fill="#5c8fc0" opacity="0.42"/><rect x="1820" y="269" width="4" height="2" fill="#3f9f8c" opacity="0.42"/><rect x="1804" y="271" width="4" height="2" fill="#3f9f8c" opacity="0.42"/><rect x="1809" y="271" width="3" height="2" fill="#7fa8c4" opacity="0.42"/><rect x="1813" y="271" width="8" height="2" fill="#7fa8c4" opacity="0.42"/><rect x="1822" y="271" width="10" height="2" fill="#7fa8c4" opacity="0.42"/><rect x="1833" y="271" width="10" height="2" fill="#7fa8c4" opacity="0.42"/><rect x="1844" y="271" width="4" height="2" fill="#b4b48c" opacity="0.42"/><rect x="1796" y="275" width="111" height="2" fill="#2b5a91"/><rect x="1796" y="275" width="5" height="2" fill="#6fa0d8" opacity="0.25"/><rect x="1803" y="275" width="7" height="2" fill="#6fa0d8" opacity="0.25"/><rect x="1802" y="275" width="8" height="2" fill="#3f95f5"/><rect x="1800" y="277" width="12" height="2" fill="#7fa8c4" opacity="0.42"/><rect x="1813" y="277" width="10" height="2" fill="#7fa8c4" opacity="0.42"/><rect x="1824" y="277" width="2" height="2" fill="#5c8fc0" opacity="0.42"/><rect x="1796" y="279" width="111" height="2" fill="#2b5a91"/><rect x="1804" y="279" width="8" height="2" fill="#6fa0d8" opacity="0.25"/><rect x="1813" y="279" width="5" height="2" fill="#6fa0d8" opacity="0.25"/><rect x="1819" y="279" width="4" height="2" fill="#6fa0d8" opacity="0.25"/><rect x="1824" y="279" width="6" height="2" fill="#6fa0d8" opacity="0.25"/><rect x="1831" y="279" width="5" height="2" fill="#6fa0d8" opacity="0.25"/><rect x="1809" y="279" width="10" height="2" fill="#3f95f5"/><rect x="1822" y="279" width="10" height="2" fill="#3f95f5"/><rect x="1796" y="281" width="111" height="2" fill="#2b5a91"/><rect x="1804" y="281" width="9" height="2" fill="#6fa0d8" opacity="0.25"/><rect x="1814" y="281" width="5" height="2" fill="#6fa0d8" opacity="0.25"/><rect x="1821" y="281" width="1" height="2" fill="#6fa0d8" opacity="0.25"/><rect x="1809" y="281" width="6" height="2" fill="#3f95f5"/><rect x="1796" y="283" width="111" height="2" fill="#2b5a91"/><rect x="1804" y="283" width="9" height="2" fill="#6fa0d8" opacity="0.25"/><rect x="1814" y="283" width="9" height="2" fill="#6fa0d8" opacity="0.25"/><rect x="1824" y="283" width="6" height="2" fill="#6fa0d8" opacity="0.25"/><rect x="1809" y="283" width="10" height="2" fill="#3f95f5"/><rect x="1796" y="285" width="111" height="2" fill="#2b5a91"/><rect x="1804" y="285" width="5" height="2" fill="#6fa0d8" opacity="0.25"/><rect x="1811" y="285" width="6" height="2" fill="#6fa0d8" opacity="0.25"/><rect x="1818" y="285" width="6" height="2" fill="#6fa0d8" opacity="0.25"/><rect x="1825" y="285" width="1" height="2" fill="#6fa0d8" opacity="0.25"/><rect x="1809" y="285" width="8" height="2" fill="#3f95f5"/><rect x="1796" y="287" width="111" height="2" fill="#2b5a91"/><rect x="1804" y="287" width="9" height="2" fill="#6fa0d8" opacity="0.25"/><rect x="1814" y="287" width="12" height="2" fill="#6fa0d8" opacity="0.25"/><rect x="1827" y="287" width="1" height="2" fill="#6fa0d8" opacity="0.25"/><rect x="1809" y="287" width="9" height="2" fill="#3f95f5"/><rect x="1796" y="289" width="111" height="2" fill="#2b5a91"/><rect x="1804" y="289" width="5" height="2" fill="#6fa0d8" opacity="0.25"/><rect x="1810" y="289" width="5" height="2" fill="#6fa0d8" opacity="0.25"/><rect x="1816" y="289" width="9" height="2" fill="#6fa0d8" opacity="0.25"/><rect x="1826" y="289" width="4" height="2" fill="#6fa0d8" opacity="0.25"/><rect x="1809" y="289" width="11" height="2" fill="#3f95f5"/><rect x="1796" y="291" width="111" height="2" fill="#2b5a91"/><rect x="1804" y="291" width="3" height="2" fill="#6fa0d8" opacity="0.25"/><rect x="1808" y="291" width="8" height="2" fill="#6fa0d8" opacity="0.25"/><rect x="1817" y="291" width="5" height="2" fill="#6fa0d8" opacity="0.25"/><rect x="1824" y="291" width="2" height="2" fill="#6fa0d8" opacity="0.25"/><rect x="1809" y="291" width="7" height="2" fill="#3f95f5"/><rect x="1796" y="293" width="111" height="2" fill="#2b5a91"/><rect x="1804" y="293" width="6" height="2" fill="#6fa0d8" opacity="0.25"/><rect x="1811" y="293" width="4" height="2" fill="#6fa0d8" opacity="0.25"/><rect x="1816" y="293" width="4" height="2" fill="#6fa0d8" opacity="0.25"/><rect x="1821" y="293" width="8" height="2" fill="#6fa0d8" opacity="0.25"/><rect x="1809" y="293" width="9" height="2" fill="#3f95f5"/><rect x="1800" y="297" width="6" height="2" fill="#7fa8c4" opacity="0.42"/><rect x="1808" y="297" width="10" height="2" fill="#b07a5c" opacity="0.42"/><rect x="1819" y="297" width="5" height="2" fill="#7fa8c4" opacity="0.42"/><rect x="1796" y="299" width="111" height="2" fill="#2b5a91"/><rect x="1804" y="299" width="12" height="2" fill="#6fa0d8" opacity="0.25"/><rect x="1817" y="299" width="7" height="2" fill="#6fa0d8" opacity="0.25"/><rect x="1825" y="299" width="8" height="2" fill="#6fa0d8" opacity="0.25"/><rect x="1834" y="299" width="6" height="2" fill="#6fa0d8" opacity="0.25"/><rect x="1825" y="299" width="9" height="2" fill="#3f95f5"/><rect x="1796" y="303" width="111" height="2" fill="#2b5a91"/><rect x="1800" y="303" width="4" height="2" fill="#6fa0d8" opacity="0.25"/><rect x="1805" y="303" width="8" height="2" fill="#6fa0d8" opacity="0.25"/><rect x="1814" y="303" width="4" height="2" fill="#6fa0d8" opacity="0.25"/><rect x="1819" y="303" width="4" height="2" fill="#6fa0d8" opacity="0.25"/><rect x="1824" y="303" width="3" height="2" fill="#6fa0d8" opacity="0.25"/><rect x="1828" y="303" width="8" height="2" fill="#6fa0d8" opacity="0.25"/><rect x="1804" y="303" width="11" height="2" fill="#3f95f5"/><rect x="1822" y="303" width="7" height="2" fill="#3f95f5"/><rect x="1796" y="305" width="111" height="2" fill="#2b5a91"/><rect x="1804" y="305" width="12" height="2" fill="#6fa0d8" opacity="0.25"/><rect x="1817" y="305" width="2" height="2" fill="#6fa0d8" opacity="0.25"/><rect x="1807" y="305" width="7" height="2" fill="#3f95f5"/><rect x="1796" y="307" width="111" height="2" fill="#2b5a91"/><rect x="1808" y="307" width="8" height="2" fill="#6fa0d8" opacity="0.25"/><rect x="1817" y="307" width="4" height="2" fill="#6fa0d8" opacity="0.25"/><rect x="1823" y="307" width="9" height="2" fill="#6fa0d8" opacity="0.25"/><rect x="1833" y="307" width="3" height="2" fill="#6fa0d8" opacity="0.25"/><rect x="1837" y="307" width="12" height="2" fill="#6fa0d8" opacity="0.25"/><rect x="1850" y="307" width="9" height="2" fill="#6fa0d8" opacity="0.25"/><rect x="1860" y="307" width="4" height="2" fill="#6fa0d8" opacity="0.25"/><rect x="1813" y="307" width="11" height="2" fill="#3f95f5"/><rect x="1825" y="307" width="5" height="2" fill="#3f95f5"/><rect x="1838" y="307" width="10" height="2" fill="#3f95f5"/><rect x="1849" y="307" width="5" height="2" fill="#3f95f5"/><rect x="1855" y="307" width="9" height="2" fill="#3f95f5"/><rect x="1796" y="309" width="111" height="2" fill="#2b5a91"/><rect x="1804" y="309" width="5" height="2" fill="#6fa0d8" opacity="0.25"/><rect x="1810" y="309" width="5" height="2" fill="#6fa0d8" opacity="0.25"/><rect x="1816" y="309" width="5" height="2" fill="#6fa0d8" opacity="0.25"/><rect x="1809" y="309" width="7" height="2" fill="#3f95f5"/><rect x="1796" y="311" width="111" height="2" fill="#2b5a91"/><rect x="1808" y="311" width="5" height="2" fill="#6fa0d8" opacity="0.25"/><rect x="1815" y="311" width="6" height="2" fill="#6fa0d8" opacity="0.25"/><rect x="1822" y="311" width="9" height="2" fill="#6fa0d8" opacity="0.25"/><rect x="1832" y="311" width="4" height="2" fill="#6fa0d8" opacity="0.25"/><rect x="1837" y="311" width="6" height="2" fill="#6fa0d8" opacity="0.25"/><rect x="1844" y="311" width="12" height="2" fill="#6fa0d8" opacity="0.25"/><rect x="1858" y="311" width="6" height="2" fill="#6fa0d8" opacity="0.25"/><rect x="1813" y="311" width="11" height="2" fill="#3f95f5"/><rect x="1825" y="311" width="5" height="2" fill="#3f95f5"/><rect x="1838" y="311" width="10" height="2" fill="#3f95f5"/><rect x="1849" y="311" width="5" height="2" fill="#3f95f5"/><rect x="1804" y="313" width="9" height="2" fill="#7fa8c4" opacity="0.42"/><rect x="1814" y="313" width="8" height="2" fill="#3f9f8c" opacity="0.42"/><rect x="1808" y="315" width="4" height="2" fill="#b4b48c" opacity="0.42"/><rect x="1813" y="315" width="4" height="2" fill="#7fa8c4" opacity="0.42"/><rect x="1819" y="315" width="4" height="2" fill="#b4b48c" opacity="0.42"/><rect x="1824" y="315" width="12" height="2" fill="#3f9f8c" opacity="0.42"/><rect x="1838" y="315" width="8" height="2" fill="#b07a5c" opacity="0.42"/><rect x="1847" y="315" width="9" height="2" fill="#7fa8c4" opacity="0.42"/><rect x="1857" y="315" width="5" height="2" fill="#7fa8c4" opacity="0.42"/><rect x="1863" y="315" width="1" height="2" fill="#3f9f8c" opacity="0.42"/><rect x="1800" y="319" width="4" height="2" fill="#3f9f8c" opacity="0.42"/><rect x="1806" y="319" width="9" height="2" fill="#b4b48c" opacity="0.42"/><rect x="1816" y="319" width="5" height="2" fill="#3f9f8c" opacity="0.42"/><rect x="1823" y="319" width="8" height="2" fill="#3f9f8c" opacity="0.42"/><rect x="1832" y="319" width="8" height="2" fill="#5c8fc0" opacity="0.42"/><rect x="1804" y="321" width="9" height="2" fill="#5c8fc0" opacity="0.42"/><rect x="1814" y="321" width="8" height="2" fill="#7fa8c4" opacity="0.42"/><rect x="1823" y="321" width="6" height="2" fill="#3f9f8c" opacity="0.42"/><rect x="1804" y="323" width="12" height="2" fill="#7fa8c4" opacity="0.42"/><rect x="1817" y="323" width="5" height="2" fill="#b4b48c" opacity="0.42"/><rect x="1823" y="323" width="4" height="2" fill="#8f9f88" opacity="0.42"/><rect x="1828" y="323" width="4" height="2" fill="#7fa8c4" opacity="0.42"/><rect x="1833" y="323" width="8" height="2" fill="#7fa8c4" opacity="0.42"/><rect x="1804" y="325" width="7" height="2" fill="#5c8fc0" opacity="0.42"/><rect x="1812" y="325" width="12" height="2" fill="#b07a5c" opacity="0.42"/><rect x="1825" y="325" width="7" height="2" fill="#8f9f88" opacity="0.42"/><rect x="1833" y="325" width="6" height="2" fill="#3f9f8c" opacity="0.42"/><rect x="1840" y="325" width="6" height="2" fill="#7fa8c4" opacity="0.42"/><rect x="1847" y="325" width="3" height="2" fill="#7fa8c4" opacity="0.42"/><rect x="1851" y="325" width="8" height="2" fill="#a173a0" opacity="0.42"/><rect x="1860" y="325" width="1" height="2" fill="#3f9f8c" opacity="0.42"/><rect x="1800" y="329" width="9" height="2" fill="#8f9f88" opacity="0.42"/><rect x="1810" y="329" width="5" height="2" fill="#8f9f88" opacity="0.42"/><rect x="1804" y="331" width="4" height="2" fill="#7fa8c4" opacity="0.42"/><rect x="1809" y="331" width="4" height="2" fill="#7fa8c4" opacity="0.42"/><rect x="1814" y="331" width="3" height="2" fill="#5c8fc0" opacity="0.42"/><rect x="1804" y="333" width="7" height="2" fill="#7fa8c4" opacity="0.42"/><rect x="1813" y="333" width="1" height="2" fill="#3f9f8c" opacity="0.42"/><rect x="1800" y="337" width="4" height="2" fill="#7fa8c4" opacity="0.42"/><rect x="1805" y="337" width="7" height="2" fill="#5c8fc0" opacity="0.42"/><rect x="1813" y="337" width="3" height="2" fill="#b4b48c" opacity="0.42"/><rect x="1817" y="337" width="3" height="2" fill="#b4b48c" opacity="0.42"/><rect x="1804" y="339" width="4" height="2" fill="#7fa8c4" opacity="0.42"/><rect x="1809" y="339" width="5" height="2" fill="#7fa8c4" opacity="0.42"/><rect x="1808" y="341" width="7" height="2" fill="#8f9f88" opacity="0.42"/><rect x="1816" y="341" width="5" height="2" fill="#7fa8c4" opacity="0.42"/><rect x="1808" y="343" width="5" height="2" fill="#8f9f88" opacity="0.42"/><rect x="1814" y="343" width="5" height="2" fill="#7fa8c4" opacity="0.42"/><rect x="1820" y="343" width="5" height="2" fill="#b4b48c" opacity="0.42"/><rect x="1827" y="343" width="5" height="2" fill="#7fa8c4" opacity="0.42"/><rect x="1834" y="343" width="10" height="2" fill="#7fa8c4" opacity="0.42"/><rect x="1812" y="345" width="3" height="2" fill="#8f9f88" opacity="0.42"/><rect x="1816" y="345" width="3" height="2" fill="#7fa8c4" opacity="0.42"/><rect x="1821" y="345" width="9" height="2" fill="#8f9f88" opacity="0.42"/><rect x="1832" y="345" width="8" height="2" fill="#7fa8c4" opacity="0.42"/><rect x="1841" y="345" width="4" height="2" fill="#b4b48c" opacity="0.42"/><rect x="1820" y="347" width="12" height="2" fill="#3f9f8c" opacity="0.42"/><rect x="1812" y="349" width="9" height="2" fill="#7fa8c4" opacity="0.42"/><rect x="1822" y="349" width="5" height="2" fill="#7fa8c4" opacity="0.42"/><rect x="1828" y="349" width="7" height="2" fill="#8f9f88" opacity="0.42"/><rect x="1836" y="349" width="4" height="2" fill="#7fa8c4" opacity="0.42"/><rect x="1841" y="349" width="6" height="2" fill="#7fa8c4" opacity="0.42"/><rect x="1816" y="351" width="12" height="2" fill="#b07a5c" opacity="0.42"/><rect x="1830" y="351" width="12" height="2" fill="#8f9f88" opacity="0.42"/><rect x="1844" y="351" width="5" height="2" fill="#a173a0" opacity="0.42"/><rect x="1850" y="351" width="1" height="2" fill="#7fa8c4" opacity="0.42"/><rect x="1820" y="353" width="8" height="2" fill="#7fa8c4" opacity="0.42"/><rect x="1829" y="353" width="3" height="2" fill="#8f9f88" opacity="0.42"/><rect x="1816" y="355" width="6" height="2" fill="#7fa8c4" opacity="0.42"/><rect x="1823" y="355" width="5" height="2" fill="#7fa8c4" opacity="0.42"/><rect x="1829" y="355" width="6" height="2" fill="#7fa8c4" opacity="0.42"/><rect x="1836" y="355" width="5" height="2" fill="#3f9f8c" opacity="0.42"/><rect x="1842" y="355" width="4" height="2" fill="#3f9f8c" opacity="0.42"/><rect x="1820" y="357" width="4" height="2" fill="#7fa8c4" opacity="0.42"/><rect x="1825" y="357" width="4" height="2" fill="#3f9f8c" opacity="0.42"/><rect x="1830" y="357" width="3" height="2" fill="#7fa8c4" opacity="0.42"/><rect x="1816" y="359" width="12" height="2" fill="#7fa8c4" opacity="0.42"/><rect x="1830" y="359" width="9" height="2" fill="#5c8fc0" opacity="0.42"/><rect x="1840" y="359" width="6" height="2" fill="#5c8fc0" opacity="0.42"/><rect x="1820" y="361" width="7" height="2" fill="#a173a0" opacity="0.42"/><rect x="1828" y="361" width="4" height="2" fill="#7fa8c4" opacity="0.42"/><rect x="1834" y="361" width="3" height="2" fill="#7fa8c4" opacity="0.42"/><rect x="1816" y="363" width="12" height="2" fill="#3f9f8c" opacity="0.42"/><rect x="1830" y="363" width="4" height="2" fill="#5c8fc0" opacity="0.42"/><rect x="1836" y="363" width="10" height="2" fill="#b07a5c" opacity="0.42"/><rect x="1820" y="365" width="12" height="2" fill="#b4b48c" opacity="0.42"/><rect x="1808" y="369" width="4" height="2" fill="#7fa8c4" opacity="0.42"/><rect x="1813" y="369" width="12" height="2" fill="#7fa8c4" opacity="0.42"/><rect x="1826" y="369" width="7" height="2" fill="#b07a5c" opacity="0.42"/><rect x="1835" y="369" width="3" height="2" fill="#b4b48c" opacity="0.42"/><rect x="1840" y="369" width="12" height="2" fill="#7fa8c4" opacity="0.42"/><rect x="1853" y="369" width="3" height="2" fill="#3f9f8c" opacity="0.42"/><rect x="1857" y="369" width="5" height="2" fill="#5c8fc0" opacity="0.42"/><rect x="1808" y="371" width="12" height="2" fill="#3f9f8c" opacity="0.42"/><rect x="1821" y="371" width="5" height="2" fill="#b07a5c" opacity="0.42"/><rect x="1827" y="371" width="5" height="2" fill="#a173a0" opacity="0.42"/><rect x="1833" y="371" width="5" height="2" fill="#a173a0" opacity="0.42"/><rect x="1839" y="371" width="8" height="2" fill="#b07a5c" opacity="0.42"/><rect x="1848" y="371" width="8" height="2" fill="#5c8fc0" opacity="0.42"/><rect x="1857" y="371" width="3" height="2" fill="#b4b48c" opacity="0.42"/><rect x="1861" y="371" width="4" height="2" fill="#b4b48c" opacity="0.42"/><rect x="1866" y="371" width="5" height="2" fill="#b4b48c" opacity="0.42"/><rect x="1872" y="371" width="1" height="2" fill="#b4b48c" opacity="0.42"/><rect x="1808" y="375" width="8" height="2" fill="#7fa8c4" opacity="0.42"/><rect x="1817" y="375" width="12" height="2" fill="#7fa8c4" opacity="0.42"/><rect x="1830" y="375" width="12" height="2" fill="#3f9f8c" opacity="0.42"/><rect x="1844" y="375" width="5" height="2" fill="#3f9f8c" opacity="0.42"/><rect x="1850" y="375" width="4" height="2" fill="#8f9f88" opacity="0.42"/><rect x="1856" y="375" width="5" height="2" fill="#7fa8c4" opacity="0.42"/><rect x="1808" y="377" width="8" height="2" fill="#7fa8c4" opacity="0.42"/><rect x="1817" y="377" width="4" height="2" fill="#b07a5c" opacity="0.42"/><rect x="1822" y="377" width="5" height="2" fill="#3f9f8c" opacity="0.42"/><rect x="1828" y="377" width="4" height="2" fill="#b4b48c" opacity="0.42"/><rect x="1833" y="377" width="9" height="2" fill="#7fa8c4" opacity="0.42"/><rect x="1843" y="377" width="4" height="2" fill="#b4b48c" opacity="0.42"/><rect x="1849" y="377" width="5" height="2" fill="#5c8fc0" opacity="0.42"/><rect x="1855" y="377" width="5" height="2" fill="#3f9f8c" opacity="0.42"/><rect x="1861" y="377" width="7" height="2" fill="#7fa8c4" opacity="0.42"/><rect x="1869" y="377" width="4" height="2" fill="#b4b48c" opacity="0.42"/><rect x="1808" y="379" width="5" height="2" fill="#a173a0" opacity="0.42"/><rect x="1814" y="379" width="6" height="2" fill="#7fa8c4" opacity="0.42"/><rect x="1821" y="379" width="6" height="2" fill="#7fa8c4" opacity="0.42"/><rect x="1828" y="379" width="7" height="2" fill="#7fa8c4" opacity="0.42"/><rect x="1836" y="379" width="3" height="2" fill="#5c8fc0" opacity="0.42"/><rect x="1840" y="379" width="5" height="2" fill="#7fa8c4" opacity="0.42"/><rect x="1846" y="379" width="7" height="2" fill="#8f9f88" opacity="0.42"/><rect x="1855" y="379" width="4" height="2" fill="#7fa8c4" opacity="0.42"/><rect x="1860" y="379" width="5" height="2" fill="#5c8fc0" opacity="0.42"/><rect x="1808" y="381" width="4" height="2" fill="#7fa8c4" opacity="0.42"/><rect x="1813" y="381" width="12" height="2" fill="#8f9f88" opacity="0.42"/><rect x="1826" y="381" width="5" height="2" fill="#3f9f8c" opacity="0.42"/><rect x="1832" y="381" width="5" height="2" fill="#b07a5c" opacity="0.42"/><rect x="1838" y="381" width="3" height="2" fill="#b07a5c" opacity="0.42"/><rect x="1842" y="381" width="9" height="2" fill="#b4b48c" opacity="0.42"/><rect x="1852" y="381" width="3" height="2" fill="#8f9f88" opacity="0.42"/><rect x="1856" y="381" width="8" height="2" fill="#b4b48c" opacity="0.42"/><rect x="1865" y="381" width="8" height="2" fill="#5c8fc0" opacity="0.42"/><rect x="1808" y="383" width="3" height="2" fill="#5c8fc0" opacity="0.42"/><rect x="1813" y="383" width="4" height="2" fill="#7fa8c4" opacity="0.42"/><rect x="1818" y="383" width="6" height="2" fill="#7fa8c4" opacity="0.42"/><rect x="1825" y="383" width="12" height="2" fill="#7fa8c4" opacity="0.42"/><rect x="1838" y="383" width="5" height="2" fill="#3f9f8c" opacity="0.42"/><rect x="1844" y="383" width="4" height="2" fill="#7fa8c4" opacity="0.42"/><rect x="1849" y="383" width="4" height="2" fill="#7fa8c4" opacity="0.42"/><rect x="1854" y="383" width="7" height="2" fill="#7fa8c4" opacity="0.42"/><rect x="1808" y="385" width="8" height="2" fill="#3f9f8c" opacity="0.42"/><rect x="1818" y="385" width="5" height="2" fill="#7fa8c4" opacity="0.42"/><rect x="1824" y="385" width="6" height="2" fill="#b4b48c" opacity="0.42"/><rect x="1831" y="385" width="5" height="2" fill="#7fa8c4" opacity="0.42"/><rect x="1838" y="385" width="5" height="2" fill="#5c8fc0" opacity="0.42"/><rect x="1844" y="385" width="7" height="2" fill="#3f9f8c" opacity="0.42"/><rect x="1853" y="385" width="5" height="2" fill="#7fa8c4" opacity="0.42"/><rect x="1859" y="385" width="3" height="2" fill="#3f9f8c" opacity="0.42"/><rect x="1864" y="385" width="6" height="2" fill="#7fa8c4" opacity="0.42"/><rect x="1872" y="385" width="1" height="2" fill="#b4b48c" opacity="0.42"/><rect x="1808" y="389" width="4" height="2" fill="#7fa8c4" opacity="0.42"/><rect x="1813" y="389" width="7" height="2" fill="#3f9f8c" opacity="0.42"/><rect x="1821" y="389" width="7" height="2" fill="#8f9f88" opacity="0.42"/><rect x="1800" y="393" width="4" height="2" fill="#7fa8c4" opacity="0.42"/><rect x="1805" y="393" width="10" height="2" fill="#3f9f8c" opacity="0.42"/><rect x="1804" y="395" width="7" height="2" fill="#8f9f88" opacity="0.42"/><rect x="1813" y="395" width="8" height="2" fill="#8f9f88" opacity="0.42"/><rect x="1800" y="399" width="4" height="2" fill="#7fa8c4" opacity="0.42"/><rect x="1805" y="399" width="9" height="2" fill="#8f9f88" opacity="0.42"/><rect x="1815" y="399" width="6" height="2" fill="#5c8fc0" opacity="0.42"/><rect x="1804" y="401" width="4" height="2" fill="#b4b48c" opacity="0.42"/><rect x="1809" y="401" width="3" height="2" fill="#b07a5c" opacity="0.42"/><rect x="1813" y="401" width="8" height="2" fill="#5c8fc0" opacity="0.42"/><rect x="1800" y="405" width="4" height="2" fill="#b4b48c" opacity="0.42"/><rect x="1806" y="405" width="10" height="2" fill="#3f9f8c" opacity="0.42"/><rect x="1804" y="407" width="4" height="2" fill="#7fa8c4" opacity="0.42"/><rect x="1810" y="407" width="10" height="2" fill="#7fa8c4" opacity="0.42"/><rect x="1800" y="411" width="5" height="2" fill="#b07a5c" opacity="0.42"/><rect x="1806" y="411" width="3" height="2" fill="#3f9f8c" opacity="0.42"/><rect x="1810" y="411" width="5" height="2" fill="#8f9f88" opacity="0.42"/><rect x="1816" y="411" width="8" height="2" fill="#3f9f8c" opacity="0.42"/><rect x="1826" y="411" width="5" height="2" fill="#7fa8c4" opacity="0.42"/><rect x="1832" y="411" width="5" height="2" fill="#7fa8c4" opacity="0.42"/><rect x="1804" y="413" width="5" height="2" fill="#3f9f8c" opacity="0.42"/><rect x="1810" y="413" width="4" height="2" fill="#7fa8c4" opacity="0.42"/><rect x="1815" y="413" width="6" height="2" fill="#7fa8c4" opacity="0.42"/><rect x="1822" y="413" width="6" height="2" fill="#a173a0" opacity="0.42"/><rect x="1829" y="413" width="8" height="2" fill="#3f9f8c" opacity="0.42"/><rect x="1804" y="415" width="5" height="2" fill="#a173a0" opacity="0.42"/><rect x="1811" y="415" width="2" height="2" fill="#7fa8c4" opacity="0.42"/><rect x="1804" y="419" width="5" height="2" fill="#a173a0" opacity="0.42"/><rect x="1810" y="419" width="4" height="2" fill="#3f9f8c" opacity="0.42"/><rect x="1808" y="421" width="5" height="2" fill="#7fa8c4" opacity="0.42"/><rect x="1815" y="421" width="8" height="2" fill="#b4b48c" opacity="0.42"/><rect x="1824" y="421" width="8" height="2" fill="#3f9f8c" opacity="0.42"/><rect x="1833" y="421" width="10" height="2" fill="#7fa8c4" opacity="0.42"/><rect x="1812" y="423" width="3" height="2" fill="#7fa8c4" opacity="0.42"/><rect x="1817" y="423" width="4" height="2" fill="#3f9f8c" opacity="0.42"/><rect x="1822" y="423" width="4" height="2" fill="#3f9f8c" opacity="0.42"/><rect x="1827" y="423" width="4" height="2" fill="#8f9f88" opacity="0.42"/><rect x="1832" y="423" width="6" height="2" fill="#7fa8c4" opacity="0.42"/><rect x="1840" y="423" width="4" height="2" fill="#7fa8c4" opacity="0.42"/><rect x="1816" y="425" width="6" height="2" fill="#8f9f88" opacity="0.42"/><rect x="1823" y="425" width="3" height="2" fill="#7fa8c4" opacity="0.42"/><rect x="1812" y="427" width="5" height="2" fill="#7fa8c4" opacity="0.42"/><rect x="1818" y="427" width="4" height="2" fill="#b4b48c" opacity="0.42"/><rect x="1823" y="427" width="7" height="2" fill="#7fa8c4" opacity="0.42"/><rect x="1831" y="427" width="7" height="2" fill="#7fa8c4" opacity="0.42"/><rect x="1839" y="427" width="5" height="2" fill="#7fa8c4" opacity="0.42"/><rect x="1845" y="427" width="2" height="2" fill="#7fa8c4" opacity="0.42"/><rect x="1816" y="429" width="3" height="2" fill="#b4b48c" opacity="0.42"/><rect x="1820" y="429" width="12" height="2" fill="#a173a0" opacity="0.42"/><rect x="1833" y="429" width="7" height="2" fill="#7fa8c4" opacity="0.42"/><rect x="1841" y="429" width="3" height="2" fill="#7fa8c4" opacity="0.42"/><rect x="1845" y="429" width="10" height="2" fill="#7fa8c4" opacity="0.42"/><rect x="1856" y="429" width="6" height="2" fill="#8f9f88" opacity="0.42"/><rect x="1864" y="429" width="3" height="2" fill="#7fa8c4" opacity="0.42"/><rect x="1868" y="429" width="3" height="2" fill="#7fa8c4" opacity="0.42"/><rect x="1820" y="431" width="12" height="2" fill="#8f9f88" opacity="0.42"/><rect x="1833" y="431" width="3" height="2" fill="#b07a5c" opacity="0.42"/><rect x="1837" y="431" width="8" height="2" fill="#a173a0" opacity="0.42"/><rect x="1816" y="433" width="7" height="2" fill="#b07a5c" opacity="0.42"/><rect x="1824" y="433" width="8" height="2" fill="#7fa8c4" opacity="0.42"/><rect x="1833" y="433" width="4" height="2" fill="#7fa8c4" opacity="0.42"/><rect x="1838" y="433" width="4" height="2" fill="#b4b48c" opacity="0.42"/><rect x="1843" y="433" width="6" height="2" fill="#3f9f8c" opacity="0.42"/><rect x="1851" y="433" width="4" height="2" fill="#3f9f8c" opacity="0.42"/><rect x="1820" y="435" width="4" height="2" fill="#7fa8c4" opacity="0.42"/><rect x="1825" y="435" width="12" height="2" fill="#7fa8c4" opacity="0.42"/><rect x="1816" y="437" width="9" height="2" fill="#7fa8c4" opacity="0.42"/><rect x="1826" y="437" width="4" height="2" fill="#8f9f88" opacity="0.42"/><rect x="1831" y="437" width="10" height="2" fill="#7fa8c4" opacity="0.42"/><rect x="1842" y="437" width="7" height="2" fill="#3f9f8c" opacity="0.42"/><rect x="1850" y="437" width="3" height="2" fill="#7fa8c4" opacity="0.42"/><rect x="1820" y="439" width="8" height="2" fill="#b4b48c" opacity="0.42"/><rect x="1829" y="439" width="5" height="2" fill="#5c8fc0" opacity="0.42"/><rect x="1860" y="439" width="7" height="2" fill="#6a9955" opacity="0.32"/><rect x="1868" y="439" width="7" height="2" fill="#6a9955" opacity="0.32"/><rect x="1876" y="439" width="3" height="2" fill="#6a9955" opacity="0.32"/><rect x="1880" y="439" width="3" height="2" fill="#6a9955" opacity="0.32"/><rect x="1884" y="439" width="3" height="2" fill="#6a9955" opacity="0.32"/><rect x="1888" y="439" width="5" height="2" fill="#6a9955" opacity="0.32"/><rect x="1894" y="439" width="3" height="2" fill="#6a9955" opacity="0.32"/><rect x="1824" y="441" width="6" height="2" fill="#7fa8c4" opacity="0.42"/><rect x="1831" y="441" width="1" height="2" fill="#3f9f8c" opacity="0.42"/><rect x="1820" y="443" width="5" height="2" fill="#7fa8c4" opacity="0.42"/><rect x="1826" y="443" width="10" height="2" fill="#7fa8c4" opacity="0.42"/><rect x="1837" y="443" width="4" height="2" fill="#7fa8c4" opacity="0.42"/><rect x="1824" y="445" width="9" height="2" fill="#3f9f8c" opacity="0.42"/><rect x="1820" y="447" width="4" height="2" fill="#3f9f8c" opacity="0.42"/><rect x="1824" y="449" width="4" height="2" fill="#7fa8c4" opacity="0.42"/><rect x="1829" y="449" width="5" height="2" fill="#5c8fc0" opacity="0.42"/><rect x="1824" y="451" width="5" height="2" fill="#7fa8c4" opacity="0.42"/><rect x="1830" y="451" width="5" height="2" fill="#b4b48c" opacity="0.42"/><rect x="1837" y="451" width="5" height="2" fill="#8f9f88" opacity="0.42"/><rect x="1843" y="451" width="9" height="2" fill="#5c8fc0" opacity="0.42"/><rect x="1853" y="451" width="10" height="2" fill="#7fa8c4" opacity="0.42"/><rect x="1864" y="451" width="3" height="2" fill="#b4b48c" opacity="0.42"/><rect x="1828" y="453" width="6" height="2" fill="#7fa8c4" opacity="0.42"/><rect x="1835" y="453" width="6" height="2" fill="#7fa8c4" opacity="0.42"/><rect x="1842" y="453" width="5" height="2" fill="#7fa8c4" opacity="0.42"/><rect x="1848" y="453" width="1" height="2" fill="#b07a5c" opacity="0.42"/><rect x="1820" y="455" width="12" height="2" fill="#7fa8c4" opacity="0.42"/><rect x="1834" y="455" width="5" height="2" fill="#7fa8c4" opacity="0.42"/><rect x="1840" y="455" width="8" height="2" fill="#b4b48c" opacity="0.42"/><rect x="1849" y="455" width="7" height="2" fill="#7fa8c4" opacity="0.42"/><rect x="1857" y="455" width="2" height="2" fill="#b4b48c" opacity="0.42"/><rect x="1816" y="457" width="4" height="2" fill="#b4b48c" opacity="0.42"/><rect x="1821" y="457" width="3" height="2" fill="#3f9f8c" opacity="0.42"/><rect x="1820" y="459" width="5" height="2" fill="#7fa8c4" opacity="0.42"/><rect x="1828" y="459" width="3" height="2" fill="#6a9955" opacity="0.32"/><rect x="1832" y="459" width="6" height="2" fill="#6a9955" opacity="0.32"/><rect x="1839" y="459" width="5" height="2" fill="#6a9955" opacity="0.32"/><rect x="1845" y="459" width="3" height="2" fill="#6a9955" opacity="0.32"/><rect x="1849" y="459" width="4" height="2" fill="#6a9955" opacity="0.32"/><rect x="1854" y="459" width="4" height="2" fill="#6a9955" opacity="0.32"/><rect x="1859" y="459" width="1" height="2" fill="#6a9955" opacity="0.32"/><rect x="1861" y="459" width="7" height="2" fill="#6a9955" opacity="0.32"/><rect x="1869" y="459" width="7" height="2" fill="#6a9955" opacity="0.32"/><rect x="1877" y="459" width="7" height="2" fill="#6a9955" opacity="0.32"/><rect x="1885" y="459" width="3" height="2" fill="#6a9955" opacity="0.32"/><rect x="1889" y="459" width="6" height="2" fill="#6a9955" opacity="0.32"/><rect x="1896" y="459" width="2" height="2" fill="#6a9955" opacity="0.32"/><rect x="1899" y="459" width="4" height="2" fill="#6a9955" opacity="0.32"/><rect x="1904" y="459" width="3" height="2" fill="#6a9955" opacity="0.32"/><rect x="1808" y="463" width="7" height="2" fill="#7fa8c4" opacity="0.42"/><rect x="1816" y="463" width="6" height="2" fill="#5c8fc0" opacity="0.42"/><rect x="1808" y="465" width="4" height="2" fill="#b07a5c" opacity="0.42"/><rect x="1813" y="465" width="10" height="2" fill="#5c8fc0" opacity="0.42"/><rect x="1824" y="465" width="4" height="2" fill="#7fa8c4" opacity="0.42"/><rect x="1829" y="465" width="1" height="2" fill="#7fa8c4" opacity="0.42"/><rect x="1808" y="467" width="4" height="2" fill="#b4b48c" opacity="0.42"/><rect x="1813" y="467" width="9" height="2" fill="#7fa8c4" opacity="0.42"/><rect x="1823" y="467" width="5" height="2" fill="#7fa8c4" opacity="0.42"/><rect x="1829" y="467" width="4" height="2" fill="#7fa8c4" opacity="0.42"/><rect x="1834" y="467" width="2" height="2" fill="#7fa8c4" opacity="0.42"/><rect x="1808" y="469" width="8" height="2" fill="#7fa8c4" opacity="0.42"/><rect x="1818" y="469" width="9" height="2" fill="#3f9f8c" opacity="0.42"/><rect x="1808" y="471" width="4" height="2" fill="#b4b48c" opacity="0.42"/><rect x="1813" y="471" width="10" height="2" fill="#3f9f8c" opacity="0.42"/><rect x="1824" y="471" width="3" height="2" fill="#7fa8c4" opacity="0.42"/><rect x="1808" y="473" width="3" height="2" fill="#3f9f8c" opacity="0.42"/><rect x="1813" y="473" width="4" height="2" fill="#7fa8c4" opacity="0.42"/><rect x="1818" y="473" width="4" height="2" fill="#7fa8c4" opacity="0.42"/><rect x="1823" y="473" width="3" height="2" fill="#5c8fc0" opacity="0.42"/><rect x="1827" y="473" width="2" height="2" fill="#b07a5c" opacity="0.42"/><rect x="1808" y="475" width="7" height="2" fill="#b4b48c" opacity="0.42"/><rect x="1817" y="475" width="12" height="2" fill="#b07a5c" opacity="0.42"/><rect x="1830" y="475" width="5" height="2" fill="#b4b48c" opacity="0.42"/><rect x="1836" y="475" width="7" height="2" fill="#b4b48c" opacity="0.42"/><rect x="1844" y="475" width="9" height="2" fill="#3f9f8c" opacity="0.42"/><rect x="1854" y="475" width="3" height="2" fill="#b4b48c" opacity="0.42"/><rect x="1858" y="475" width="8" height="2" fill="#7fa8c4" opacity="0.42"/><rect x="1868" y="475" width="8" height="2" fill="#b07a5c" opacity="0.42"/><rect x="1877" y="475" width="7" height="2" fill="#7fa8c4" opacity="0.42"/><rect x="1885" y="475" width="6" height="2" fill="#3f9f8c" opacity="0.42"/><rect x="1892" y="475" width="8" height="2" fill="#3f9f8c" opacity="0.42"/><rect x="1901" y="475" width="3" height="2" fill="#b4b48c" opacity="0.42"/><rect x="1905" y="475" width="1" height="2" fill="#b07a5c" opacity="0.42"/><rect x="1808" y="477" width="4" height="2" fill="#7fa8c4" opacity="0.42"/><rect x="1814" y="477" width="7" height="2" fill="#b4b48c" opacity="0.42"/><rect x="1822" y="477" width="3" height="2" fill="#5c8fc0" opacity="0.42"/><rect x="1827" y="477" width="4" height="2" fill="#7fa8c4" opacity="0.42"/><rect x="1832" y="477" width="5" height="2" fill="#8f9f88" opacity="0.42"/><rect x="1838" y="477" width="11" height="2" fill="#b07a5c" opacity="0.42"/><rect x="1808" y="481" width="4" height="2" fill="#b07a5c" opacity="0.42"/><rect x="1814" y="481" width="5" height="2" fill="#7fa8c4" opacity="0.42"/><rect x="1821" y="481" width="5" height="2" fill="#5c8fc0" opacity="0.42"/><rect x="1827" y="481" width="2" height="2" fill="#7fa8c4" opacity="0.42"/><rect x="1808" y="483" width="5" height="2" fill="#b4b48c" opacity="0.42"/><rect x="1815" y="483" width="9" height="2" fill="#7fa8c4" opacity="0.42"/><rect x="1825" y="483" width="3" height="2" fill="#7fa8c4" opacity="0.42"/><rect x="1808" y="487" width="4" height="2" fill="#b4b48c" opacity="0.42"/><rect x="1813" y="487" width="12" height="2" fill="#7fa8c4" opacity="0.42"/><rect x="1826" y="487" width="4" height="2" fill="#b07a5c" opacity="0.42"/><rect x="1831" y="487" width="4" height="2" fill="#a173a0" opacity="0.42"/><rect x="1836" y="487" width="12" height="2" fill="#5c8fc0" opacity="0.42"/><rect x="1849" y="487" width="9" height="2" fill="#3f9f8c" opacity="0.42"/><rect x="1859" y="487" width="2" height="2" fill="#8f9f88" opacity="0.42"/><rect x="1812" y="489" width="6" height="2" fill="#7fa8c4" opacity="0.42"/><rect x="1819" y="489" width="10" height="2" fill="#7fa8c4" opacity="0.42"/><rect x="1830" y="489" width="4" height="2" fill="#3f9f8c" opacity="0.42"/><rect x="1835" y="489" width="1" height="2" fill="#a173a0" opacity="0.42"/><rect x="1808" y="491" width="5" height="2" fill="#b07a5c" opacity="0.42"/><rect x="1814" y="491" width="5" height="2" fill="#b4b48c" opacity="0.42"/><rect x="1821" y="491" width="12" height="2" fill="#5c8fc0" opacity="0.42"/><rect x="1834" y="491" width="3" height="2" fill="#7fa8c4" opacity="0.42"/><rect x="1838" y="491" width="10" height="2" fill="#b4b48c" opacity="0.42"/><rect x="1849" y="491" width="5" height="2" fill="#7fa8c4" opacity="0.42"/><rect x="1812" y="493" width="4" height="2" fill="#3f9f8c" opacity="0.42"/><rect x="1818" y="493" width="12" height="2" fill="#7fa8c4" opacity="0.42"/><rect x="1831" y="493" width="3" height="2" fill="#b4b48c" opacity="0.42"/><rect x="1835" y="493" width="2" height="2" fill="#3f9f8c" opacity="0.42"/><rect x="1800" y="497" width="5" height="2" fill="#3f9f8c" opacity="0.42"/><rect x="1806" y="497" width="10" height="2" fill="#7fa8c4" opacity="0.42"/><rect x="1817" y="497" width="5" height="2" fill="#b07a5c" opacity="0.42"/><rect x="1804" y="499" width="4" height="2" fill="#7fa8c4" opacity="0.42"/><rect x="1809" y="499" width="4" height="2" fill="#3f9f8c" opacity="0.42"/><rect x="1814" y="499" width="12" height="2" fill="#7fa8c4" opacity="0.42"/><rect x="1827" y="499" width="7" height="2" fill="#b07a5c" opacity="0.42"/><rect x="1835" y="499" width="3" height="2" fill="#b4b48c" opacity="0.42"/><rect x="1840" y="499" width="6" height="2" fill="#b4b48c" opacity="0.42"/><rect x="1800" y="503" width="8" height="2" fill="#b4b48c" opacity="0.42"/><rect x="1810" y="503" width="8" height="2" fill="#7fa8c4" opacity="0.42"/><rect x="1819" y="503" width="3" height="2" fill="#7fa8c4" opacity="0.42"/><rect x="1804" y="505" width="7" height="2" fill="#7fa8c4" opacity="0.42"/><rect x="1812" y="505" width="3" height="2" fill="#5c8fc0" opacity="0.42"/><rect x="1816" y="505" width="3" height="2" fill="#b4b48c" opacity="0.42"/><rect x="1820" y="505" width="4" height="2" fill="#3f9f8c" opacity="0.42"/><rect x="1826" y="505" width="10" height="2" fill="#b4b48c" opacity="0.42"/><rect x="1837" y="505" width="10" height="2" fill="#7fa8c4" opacity="0.42"/><rect x="1848" y="505" width="4" height="2" fill="#7fa8c4" opacity="0.42"/><rect x="1853" y="505" width="8" height="2" fill="#a173a0" opacity="0.42"/><rect x="1862" y="505" width="7" height="2" fill="#b07a5c" opacity="0.42"/><rect x="1870" y="505" width="4" height="2" fill="#a173a0" opacity="0.42"/><rect x="1875" y="505" width="4" height="2" fill="#7fa8c4" opacity="0.42"/><rect x="1880" y="505" width="5" height="2" fill="#7fa8c4" opacity="0.42"/><rect x="1886" y="505" width="3" height="2" fill="#7fa8c4" opacity="0.42"/><rect x="1804" y="507" width="3" height="2" fill="#7fa8c4" opacity="0.42"/><rect x="1809" y="507" width="12" height="2" fill="#3f9f8c" opacity="0.42"/><rect x="1823" y="507" width="5" height="2" fill="#7fa8c4" opacity="0.42"/><rect x="1829" y="507" width="4" height="2" fill="#5c8fc0" opacity="0.42"/><rect x="1834" y="507" width="4" height="2" fill="#7fa8c4" opacity="0.42"/><rect x="1839" y="507" width="5" height="2" fill="#8f9f88" opacity="0.42"/><rect x="1845" y="507" width="5" height="2" fill="#5c8fc0" opacity="0.42"/><rect x="1851" y="507" width="10" height="2" fill="#7fa8c4" opacity="0.42"/><rect x="1863" y="507" width="8" height="2" fill="#3f9f8c" opacity="0.42"/><rect x="1873" y="507" width="3" height="2" fill="#5c8fc0" opacity="0.42"/><rect x="1877" y="507" width="5" height="2" fill="#b4b48c" opacity="0.42"/><rect x="1883" y="507" width="5" height="2" fill="#3f9f8c" opacity="0.42"/><rect x="1890" y="507" width="1" height="2" fill="#b4b48c" opacity="0.42"/><rect x="1800" y="511" width="4" height="2" fill="#7fa8c4" opacity="0.42"/><rect x="1805" y="511" width="4" height="2" fill="#b4b48c" opacity="0.42"/><rect x="1810" y="511" width="6" height="2" fill="#8f9f88" opacity="0.42"/><rect x="1817" y="511" width="3" height="2" fill="#7fa8c4" opacity="0.42"/><rect x="1821" y="511" width="4" height="2" fill="#a173a0" opacity="0.42"/><rect x="1826" y="511" width="10" height="2" fill="#a173a0" opacity="0.42"/><rect x="1804" y="513" width="9" height="2" fill="#5c8fc0" opacity="0.42"/><rect x="1814" y="513" width="7" height="2" fill="#7fa8c4" opacity="0.42"/><rect x="1822" y="513" width="5" height="2" fill="#7fa8c4" opacity="0.42"/><rect x="1828" y="513" width="12" height="2" fill="#7fa8c4" opacity="0.42"/><rect x="1841" y="513" width="6" height="2" fill="#7fa8c4" opacity="0.42"/><rect x="1804" y="515" width="10" height="2" fill="#7fa8c4" opacity="0.42"/><rect x="1808" y="517" width="6" height="2" fill="#3f9f8c" opacity="0.42"/><rect x="1815" y="517" width="6" height="2" fill="#7fa8c4" opacity="0.42"/><rect x="1822" y="517" width="3" height="2" fill="#a173a0" opacity="0.42"/><rect x="1826" y="517" width="6" height="2" fill="#b07a5c" opacity="0.42"/><rect x="1834" y="517" width="9" height="2" fill="#3f9f8c" opacity="0.42"/><rect x="1812" y="519" width="10" height="2" fill="#a173a0" opacity="0.42"/><rect x="1823" y="519" width="3" height="2" fill="#3f9f8c" opacity="0.42"/><rect x="1827" y="519" width="6" height="2" fill="#3f9f8c" opacity="0.42"/><rect x="1834" y="519" width="9" height="2" fill="#b4b48c" opacity="0.42"/><rect x="1816" y="521" width="10" height="2" fill="#b07a5c" opacity="0.42"/><rect x="1812" y="523" width="7" height="2" fill="#7fa8c4" opacity="0.42"/><rect x="1820" y="523" width="5" height="2" fill="#a173a0" opacity="0.42"/><rect x="1826" y="523" width="3" height="2" fill="#7fa8c4" opacity="0.42"/><rect x="1830" y="523" width="8" height="2" fill="#a173a0" opacity="0.42"/><rect x="1839" y="523" width="8" height="2" fill="#b4b48c" opacity="0.42"/><rect x="1816" y="525" width="5" height="2" fill="#b4b48c" opacity="0.42"/><rect x="1822" y="525" width="5" height="2" fill="#b07a5c" opacity="0.42"/><rect x="1828" y="525" width="8" height="2" fill="#7fa8c4" opacity="0.42"/><rect x="1837" y="525" width="8" height="2" fill="#b07a5c" opacity="0.42"/><rect x="1847" y="525" width="4" height="2" fill="#b4b48c" opacity="0.42"/><rect x="1820" y="527" width="4" height="2" fill="#3f9f8c" opacity="0.42"/><rect x="1825" y="527" width="4" height="2" fill="#3f9f8c" opacity="0.42"/><rect x="1830" y="527" width="6" height="2" fill="#7fa8c4" opacity="0.42"/><rect x="1837" y="527" width="7" height="2" fill="#5c8fc0" opacity="0.42"/><rect x="1846" y="527" width="2" height="2" fill="#7fa8c4" opacity="0.42"/><rect x="1820" y="529" width="8" height="2" fill="#7fa8c4" opacity="0.42"/><rect x="1830" y="529" width="10" height="2" fill="#b4b48c" opacity="0.42"/><rect x="1820" y="531" width="10" height="2" fill="#7fa8c4" opacity="0.42"/><rect x="1831" y="531" width="5" height="2" fill="#b4b48c" opacity="0.42"/><rect x="1816" y="533" width="4" height="2" fill="#3f9f8c" opacity="0.42"/><rect x="1821" y="533" width="10" height="2" fill="#7fa8c4" opacity="0.42"/><rect x="1832" y="533" width="8" height="2" fill="#b4b48c" opacity="0.42"/><rect x="1841" y="533" width="9" height="2" fill="#7fa8c4" opacity="0.42"/><rect x="1820" y="535" width="10" height="2" fill="#7fa8c4" opacity="0.42"/><rect x="1831" y="535" width="1" height="2" fill="#a173a0" opacity="0.42"/><rect x="1808" y="539" width="9" height="2" fill="#7fa8c4" opacity="0.42"/><rect x="1818" y="539" width="4" height="2" fill="#8f9f88" opacity="0.42"/><rect x="1808" y="543" width="4" height="2" fill="#7fa8c4" opacity="0.42"/><rect x="1813" y="543" width="5" height="2" fill="#7fa8c4" opacity="0.42"/><rect x="1819" y="543" width="5" height="2" fill="#a173a0" opacity="0.42"/><rect x="1825" y="543" width="5" height="2" fill="#7fa8c4" opacity="0.42"/><rect x="1831" y="543" width="5" height="2" fill="#7fa8c4" opacity="0.42"/><rect x="1837" y="543" width="8" height="2" fill="#7fa8c4" opacity="0.42"/><rect x="1846" y="543" width="7" height="2" fill="#a173a0" opacity="0.42"/><rect x="1855" y="543" width="11" height="2" fill="#7fa8c4" opacity="0.42"/><rect x="1808" y="545" width="4" height="2" fill="#7fa8c4" opacity="0.42"/><rect x="1813" y="545" width="3" height="2" fill="#a173a0" opacity="0.42"/><rect x="1817" y="545" width="10" height="2" fill="#b4b48c" opacity="0.42"/><rect x="1828" y="545" width="5" height="2" fill="#b4b48c" opacity="0.42"/><rect x="1835" y="545" width="5" height="2" fill="#b4b48c" opacity="0.42"/><rect x="1841" y="545" width="8" height="2" fill="#3f9f8c" opacity="0.42"/><rect x="1850" y="545" width="12" height="2" fill="#a173a0" opacity="0.42"/><rect x="1863" y="545" width="5" height="2" fill="#b07a5c" opacity="0.42"/><rect x="1869" y="545" width="5" height="2" fill="#5c8fc0" opacity="0.42"/><rect x="1875" y="545" width="8" height="2" fill="#7fa8c4" opacity="0.42"/><rect x="1808" y="547" width="9" height="2" fill="#b4b48c" opacity="0.42"/><rect x="1812" y="549" width="12" height="2" fill="#7fa8c4" opacity="0.42"/><rect x="1825" y="549" width="7" height="2" fill="#b07a5c" opacity="0.42"/><rect x="1833" y="549" width="3" height="2" fill="#7fa8c4" opacity="0.42"/><rect x="1837" y="549" width="4" height="2" fill="#a173a0" opacity="0.42"/><rect x="1812" y="551" width="9" height="2" fill="#7fa8c4" opacity="0.42"/><rect x="1823" y="551" width="8" height="2" fill="#b4b48c" opacity="0.42"/><rect x="1832" y="551" width="9" height="2" fill="#7fa8c4" opacity="0.42"/><rect x="1842" y="551" width="9" height="2" fill="#7fa8c4" opacity="0.42"/><rect x="1852" y="551" width="5" height="2" fill="#8f9f88" opacity="0.42"/><rect x="1858" y="551" width="7" height="2" fill="#3f9f8c" opacity="0.42"/><rect x="1866" y="551" width="10" height="2" fill="#7fa8c4" opacity="0.42"/><rect x="1877" y="551" width="5" height="2" fill="#7fa8c4" opacity="0.42"/><rect x="1883" y="551" width="3" height="2" fill="#7fa8c4" opacity="0.42"/><rect x="1887" y="551" width="7" height="2" fill="#b4b48c" opacity="0.42"/><rect x="1895" y="551" width="2" height="2" fill="#7fa8c4" opacity="0.42"/><rect x="1812" y="553" width="5" height="2" fill="#a173a0" opacity="0.42"/><rect x="1819" y="553" width="5" height="2" fill="#8f9f88" opacity="0.42"/><rect x="1825" y="553" width="8" height="2" fill="#7fa8c4" opacity="0.42"/><rect x="1834" y="553" width="4" height="2" fill="#b07a5c" opacity="0.42"/><rect x="1839" y="553" width="8" height="2" fill="#b4b48c" opacity="0.42"/><rect x="1848" y="553" width="4" height="2" fill="#7fa8c4" opacity="0.42"/><rect x="1853" y="553" width="8" height="2" fill="#8f9f88" opacity="0.42"/><rect x="1863" y="553" width="1" height="2" fill="#7fa8c4" opacity="0.42"/><rect x="1812" y="555" width="6" height="2" fill="#b07a5c" opacity="0.42"/><rect x="1819" y="555" width="5" height="2" fill="#a173a0" opacity="0.42"/><rect x="1825" y="555" width="7" height="2" fill="#b4b48c" opacity="0.42"/><rect x="1833" y="555" width="3" height="2" fill="#b07a5c" opacity="0.42"/><rect x="1837" y="555" width="6" height="2" fill="#7fa8c4" opacity="0.42"/><rect x="1844" y="555" width="6" height="2" fill="#3f9f8c" opacity="0.42"/><rect x="1851" y="555" width="10" height="2" fill="#b4b48c" opacity="0.42"/><rect x="1862" y="555" width="4" height="2" fill="#8f9f88" opacity="0.42"/><rect x="1867" y="555" width="3" height="2" fill="#7fa8c4" opacity="0.42"/><rect x="1872" y="555" width="6" height="2" fill="#b07a5c" opacity="0.42"/><rect x="1879" y="555" width="7" height="2" fill="#b07a5c" opacity="0.42"/><rect x="1812" y="557" width="3" height="2" fill="#b4b48c" opacity="0.42"/><rect x="1816" y="557" width="4" height="2" fill="#b4b48c" opacity="0.42"/><rect x="1821" y="557" width="10" height="2" fill="#7fa8c4" opacity="0.42"/><rect x="1832" y="557" width="5" height="2" fill="#7fa8c4" opacity="0.42"/><rect x="1838" y="557" width="6" height="2" fill="#b07a5c" opacity="0.42"/><rect x="1845" y="557" width="7" height="2" fill="#b07a5c" opacity="0.42"/><rect x="1853" y="557" width="10" height="2" fill="#5c8fc0" opacity="0.42"/><rect x="1865" y="557" width="4" height="2" fill="#b4b48c" opacity="0.42"/><rect x="1871" y="557" width="12" height="2" fill="#b07a5c" opacity="0.42"/><rect x="1884" y="557" width="8" height="2" fill="#a173a0" opacity="0.42"/><rect x="1894" y="557" width="4" height="2" fill="#a173a0" opacity="0.42"/><rect x="1899" y="557" width="2" height="2" fill="#5c8fc0" opacity="0.42"/><rect x="1812" y="559" width="4" height="2" fill="#7fa8c4" opacity="0.42"/><rect x="1817" y="559" width="4" height="2" fill="#3f9f8c" opacity="0.42"/><rect x="1823" y="559" width="3" height="2" fill="#3f9f8c" opacity="0.42"/><rect x="1827" y="559" width="8" height="2" fill="#7fa8c4" opacity="0.42"/><rect x="1836" y="559" width="9" height="2" fill="#b4b48c" opacity="0.42"/><rect x="1846" y="559" width="4" height="2" fill="#b07a5c" opacity="0.42"/><rect x="1851" y="559" width="10" height="2" fill="#3f9f8c" opacity="0.42"/><rect x="1862" y="559" width="8" height="2" fill="#7fa8c4" opacity="0.42"/><rect x="1871" y="559" width="12" height="2" fill="#7fa8c4" opacity="0.42"/><rect x="1884" y="559" width="2" height="2" fill="#b4b48c" opacity="0.42"/><rect x="1808" y="561" width="3" height="2" fill="#7fa8c4" opacity="0.42"/><rect x="1812" y="563" width="4" height="2" fill="#3f9f8c" opacity="0.42"/><rect x="1817" y="563" width="4" height="2" fill="#7fa8c4" opacity="0.42"/><rect x="1822" y="563" width="12" height="2" fill="#7fa8c4" opacity="0.42"/><rect x="1812" y="565" width="12" height="2" fill="#7fa8c4" opacity="0.42"/><rect x="1825" y="565" width="9" height="2" fill="#b4b48c" opacity="0.42"/><rect x="1835" y="565" width="5" height="2" fill="#3f9f8c" opacity="0.42"/><rect x="1841" y="565" width="5" height="2" fill="#b4b48c" opacity="0.42"/><rect x="1847" y="565" width="5" height="2" fill="#7fa8c4" opacity="0.42"/><rect x="1853" y="565" width="7" height="2" fill="#7fa8c4" opacity="0.42"/><rect x="1861" y="565" width="9" height="2" fill="#7fa8c4" opacity="0.42"/><rect x="1871" y="565" width="12" height="2" fill="#3f9f8c" opacity="0.42"/><rect x="1884" y="565" width="6" height="2" fill="#7fa8c4" opacity="0.42"/><rect x="1891" y="565" width="3" height="2" fill="#b4b48c" opacity="0.42"/><rect x="1812" y="567" width="3" height="2" fill="#3f9f8c" opacity="0.42"/><rect x="1817" y="567" width="7" height="2" fill="#b4b48c" opacity="0.42"/><rect x="1825" y="567" width="7" height="2" fill="#7fa8c4" opacity="0.42"/><rect x="1833" y="567" width="3" height="2" fill="#7fa8c4" opacity="0.42"/><rect x="1837" y="567" width="10" height="2" fill="#a173a0" opacity="0.42"/><rect x="1848" y="567" width="9" height="2" fill="#5c8fc0" opacity="0.42"/><rect x="1859" y="567" width="7" height="2" fill="#b4b48c" opacity="0.42"/><rect x="1868" y="567" width="12" height="2" fill="#7fa8c4" opacity="0.42"/><rect x="1881" y="567" width="5" height="2" fill="#b4b48c" opacity="0.42"/><rect x="1808" y="571" width="4" height="2" fill="#b4b48c" opacity="0.42"/><rect x="1813" y="571" width="7" height="2" fill="#b07a5c" opacity="0.42"/><rect x="1821" y="571" width="6" height="2" fill="#5c8fc0" opacity="0.42"/><rect x="1828" y="571" width="5" height="2" fill="#b4b48c" opacity="0.42"/><rect x="1834" y="571" width="5" height="2" fill="#7fa8c4" opacity="0.42"/><rect x="1840" y="571" width="6" height="2" fill="#7fa8c4" opacity="0.42"/><rect x="1848" y="571" width="12" height="2" fill="#b4b48c" opacity="0.42"/><rect x="1861" y="571" width="8" height="2" fill="#b4b48c" opacity="0.42"/><rect x="1870" y="571" width="4" height="2" fill="#b07a5c" opacity="0.42"/><rect x="1875" y="571" width="10" height="2" fill="#a173a0" opacity="0.42"/><rect x="1886" y="571" width="3" height="2" fill="#7fa8c4" opacity="0.42"/><rect x="1808" y="573" width="10" height="2" fill="#b4b48c" opacity="0.42"/><rect x="1819" y="573" width="8" height="2" fill="#b07a5c" opacity="0.42"/><rect x="1829" y="573" width="4" height="2" fill="#7fa8c4" opacity="0.42"/><rect x="1834" y="573" width="5" height="2" fill="#5c8fc0" opacity="0.42"/><rect x="1840" y="573" width="7" height="2" fill="#7fa8c4" opacity="0.42"/><rect x="1848" y="573" width="4" height="2" fill="#7fa8c4" opacity="0.42"/><rect x="1853" y="573" width="4" height="2" fill="#3f9f8c" opacity="0.42"/><rect x="1858" y="573" width="10" height="2" fill="#7fa8c4" opacity="0.42"/><rect x="1869" y="573" width="3" height="2" fill="#7fa8c4" opacity="0.42"/><rect x="1873" y="573" width="4" height="2" fill="#7fa8c4" opacity="0.42"/><rect x="1879" y="573" width="8" height="2" fill="#3f9f8c" opacity="0.42"/><rect x="1888" y="573" width="3" height="2" fill="#a173a0" opacity="0.42"/><rect x="1892" y="573" width="3" height="2" fill="#7fa8c4" opacity="0.42"/><rect x="1897" y="573" width="4" height="2" fill="#3f9f8c" opacity="0.42"/><rect x="1902" y="573" width="2" height="2" fill="#7fa8c4" opacity="0.42"/><rect x="1808" y="577" width="10" height="2" fill="#7fa8c4" opacity="0.42"/><rect x="1819" y="577" width="10" height="2" fill="#a173a0" opacity="0.42"/><rect x="1808" y="581" width="12" height="2" fill="#7fa8c4" opacity="0.42"/><rect x="1821" y="581" width="6" height="2" fill="#8f9f88" opacity="0.42"/><rect x="1828" y="581" width="1" height="2" fill="#b07a5c" opacity="0.42"/><rect x="1808" y="583" width="7" height="2" fill="#b07a5c" opacity="0.42"/><rect x="1816" y="583" width="5" height="2" fill="#b07a5c" opacity="0.42"/><rect x="1800" y="585" width="6" height="2" fill="#7fa8c4" opacity="0.42"/><rect x="1807" y="585" width="10" height="2" fill="#8f9f88" opacity="0.42"/><rect x="1819" y="585" width="6" height="2" fill="#5c8fc0" opacity="0.42"/><rect x="1804" y="587" width="4" height="2" fill="#b4b48c" opacity="0.42"/><rect x="1809" y="587" width="10" height="2" fill="#3f9f8c" opacity="0.42"/><rect x="1820" y="587" width="7" height="2" fill="#3f9f8c" opacity="0.42"/><rect x="1828" y="587" width="10" height="2" fill="#b07a5c" opacity="0.42"/><rect x="1839" y="587" width="3" height="2" fill="#7fa8c4" opacity="0.42"/><rect x="1804" y="589" width="6" height="2" fill="#7fa8c4" opacity="0.42"/><rect x="1811" y="589" width="4" height="2" fill="#b4b48c" opacity="0.42"/><rect x="1816" y="589" width="5" height="2" fill="#b07a5c" opacity="0.42"/><rect x="1823" y="589" width="4" height="2" fill="#7fa8c4" opacity="0.42"/><rect x="1829" y="589" width="12" height="2" fill="#b07a5c" opacity="0.42"/><rect x="1842" y="589" width="6" height="2" fill="#3f9f8c" opacity="0.42"/><rect x="1850" y="589" width="9" height="2" fill="#3f9f8c" opacity="0.42"/><rect x="1860" y="589" width="2" height="2" fill="#b07a5c" opacity="0.42"/><rect x="1800" y="593" width="5" height="2" fill="#b4b48c" opacity="0.42"/><rect x="1806" y="593" width="8" height="2" fill="#a173a0" opacity="0.42"/><rect x="1815" y="593" width="10" height="2" fill="#a173a0" opacity="0.42"/><rect x="1826" y="593" width="5" height="2" fill="#b4b48c" opacity="0.42"/><rect x="1804" y="595" width="6" height="2" fill="#b07a5c" opacity="0.42"/><rect x="1811" y="595" width="7" height="2" fill="#b4b48c" opacity="0.42"/><rect x="1819" y="595" width="9" height="2" fill="#7fa8c4" opacity="0.42"/><rect x="1830" y="595" width="10" height="2" fill="#7fa8c4" opacity="0.42"/><rect x="1841" y="595" width="5" height="2" fill="#7fa8c4" opacity="0.42"/><rect x="1847" y="595" width="6" height="2" fill="#b4b48c" opacity="0.42"/><rect x="1854" y="595" width="7" height="2" fill="#b07a5c" opacity="0.42"/><rect x="1862" y="595" width="5" height="2" fill="#7fa8c4" opacity="0.42"/><rect x="1868" y="595" width="6" height="2" fill="#5c8fc0" opacity="0.42"/><rect x="1875" y="595" width="11" height="2" fill="#3f9f8c" opacity="0.42"/><rect x="1804" y="597" width="4" height="2" fill="#7fa8c4" opacity="0.42"/><rect x="1809" y="597" width="6" height="2" fill="#7fa8c4" opacity="0.42"/><rect x="1817" y="597" width="3" height="2" fill="#7fa8c4" opacity="0.42"/><rect x="1821" y="597" width="10" height="2" fill="#3f9f8c" opacity="0.42"/><rect x="1833" y="597" width="5" height="2" fill="#7fa8c4" opacity="0.42"/><rect x="1839" y="597" width="7" height="2" fill="#7fa8c4" opacity="0.42"/><rect x="1847" y="597" width="10" height="2" fill="#b07a5c" opacity="0.42"/><rect x="1858" y="597" width="5" height="2" fill="#b07a5c" opacity="0.42"/><rect x="1864" y="597" width="5" height="2" fill="#8f9f88" opacity="0.42"/><rect x="1870" y="597" width="4" height="2" fill="#7fa8c4" opacity="0.42"/><rect x="1875" y="597" width="9" height="2" fill="#7fa8c4" opacity="0.42"/><rect x="1885" y="597" width="8" height="2" fill="#8f9f88" opacity="0.42"/><rect x="1894" y="597" width="1" height="2" fill="#b4b48c" opacity="0.42"/><rect x="1800" y="601" width="4" height="2" fill="#7fa8c4" opacity="0.42"/><rect x="1806" y="601" width="5" height="2" fill="#b4b48c" opacity="0.42"/><rect x="1813" y="601" width="7" height="2" fill="#7fa8c4" opacity="0.42"/><rect x="1821" y="601" width="2" height="2" fill="#8f9f88" opacity="0.42"/><rect x="1804" y="603" width="4" height="2" fill="#7fa8c4" opacity="0.42"/><rect x="1809" y="603" width="6" height="2" fill="#7fa8c4" opacity="0.42"/><rect x="1817" y="603" width="3" height="2" fill="#b07a5c" opacity="0.42"/><rect x="1821" y="603" width="5" height="2" fill="#b07a5c" opacity="0.42"/><rect x="1827" y="603" width="3" height="2" fill="#7fa8c4" opacity="0.42"/><rect x="1831" y="603" width="3" height="2" fill="#8f9f88" opacity="0.42"/><rect x="1835" y="603" width="10" height="2" fill="#b4b48c" opacity="0.42"/><rect x="1846" y="603" width="8" height="2" fill="#7fa8c4" opacity="0.42"/><rect x="1855" y="603" width="7" height="2" fill="#7fa8c4" opacity="0.42"/><rect x="1863" y="603" width="5" height="2" fill="#7fa8c4" opacity="0.42"/><rect x="1804" y="605" width="4" height="2" fill="#5c8fc0" opacity="0.42"/><rect x="1809" y="605" width="8" height="2" fill="#a173a0" opacity="0.42"/><rect x="1818" y="605" width="3" height="2" fill="#7fa8c4" opacity="0.42"/><rect x="1822" y="605" width="4" height="2" fill="#8f9f88" opacity="0.42"/><rect x="1827" y="605" width="4" height="2" fill="#b07a5c" opacity="0.42"/><rect x="1832" y="605" width="7" height="2" fill="#b07a5c" opacity="0.42"/><rect x="1840" y="605" width="4" height="2" fill="#8f9f88" opacity="0.42"/><rect x="1804" y="607" width="5" height="2" fill="#3f9f8c" opacity="0.42"/><rect x="1810" y="607" width="4" height="2" fill="#7fa8c4" opacity="0.42"/><rect x="1815" y="607" width="4" height="2" fill="#a173a0" opacity="0.42"/><rect x="1821" y="607" width="4" height="2" fill="#3f9f8c" opacity="0.42"/><rect x="1826" y="607" width="5" height="2" fill="#3f9f8c" opacity="0.42"/><rect x="1832" y="607" width="4" height="2" fill="#7fa8c4" opacity="0.42"/><rect x="1838" y="607" width="5" height="2" fill="#7fa8c4" opacity="0.42"/><rect x="1844" y="607" width="5" height="2" fill="#3f9f8c" opacity="0.42"/><rect x="1850" y="607" width="4" height="2" fill="#5c8fc0" opacity="0.42"/><rect x="1804" y="609" width="4" height="2" fill="#8f9f88" opacity="0.42"/><rect x="1809" y="609" width="12" height="2" fill="#5c8fc0" opacity="0.42"/><rect x="1822" y="609" width="9" height="2" fill="#3f9f8c" opacity="0.42"/><rect x="1832" y="609" width="4" height="2" fill="#7fa8c4" opacity="0.42"/><rect x="1837" y="609" width="6" height="2" fill="#3f9f8c" opacity="0.42"/><rect x="1844" y="609" width="5" height="2" fill="#8f9f88" opacity="0.42"/><rect x="1850" y="609" width="3" height="2" fill="#7fa8c4" opacity="0.42"/><rect x="1804" y="611" width="3" height="2" fill="#b07a5c" opacity="0.42"/><rect x="1808" y="611" width="4" height="2" fill="#8f9f88" opacity="0.42"/><rect x="1813" y="611" width="8" height="2" fill="#b07a5c" opacity="0.42"/><rect x="1822" y="611" width="9" height="2" fill="#7fa8c4" opacity="0.42"/><rect x="1832" y="611" width="9" height="2" fill="#7fa8c4" opacity="0.42"/><rect x="1842" y="611" width="2" height="2" fill="#7fa8c4" opacity="0.42"/><rect x="1800" y="615" width="5" height="2" fill="#7fa8c4" opacity="0.42"/><rect x="1806" y="615" width="4" height="2" fill="#b07a5c" opacity="0.42"/><rect x="1812" y="615" width="5" height="2" fill="#a173a0" opacity="0.42"/><rect x="1818" y="615" width="6" height="2" fill="#7fa8c4" opacity="0.42"/><rect x="1804" y="617" width="10" height="2" fill="#a173a0" opacity="0.42"/><rect x="1815" y="617" width="4" height="2" fill="#7fa8c4" opacity="0.42"/><rect x="1821" y="617" width="11" height="2" fill="#a173a0" opacity="0.42"/><rect x="1808" y="619" width="10" height="2" fill="#7fa8c4" opacity="0.42"/><rect x="1819" y="619" width="4" height="2" fill="#b4b48c" opacity="0.42"/><rect x="1825" y="619" width="7" height="2" fill="#b07a5c" opacity="0.42"/><rect x="1833" y="619" width="9" height="2" fill="#b07a5c" opacity="0.42"/><rect x="1843" y="619" width="5" height="2" fill="#b07a5c" opacity="0.42"/><rect x="1849" y="619" width="4" height="2" fill="#7fa8c4" opacity="0.42"/><rect x="1854" y="619" width="4" height="2" fill="#5c8fc0" opacity="0.42"/><rect x="1859" y="619" width="5" height="2" fill="#7fa8c4" opacity="0.42"/><rect x="1808" y="621" width="3" height="2" fill="#7fa8c4" opacity="0.42"/><rect x="1812" y="621" width="10" height="2" fill="#b4b48c" opacity="0.42"/><rect x="1823" y="621" width="6" height="2" fill="#3f9f8c" opacity="0.42"/><rect x="1830" y="621" width="9" height="2" fill="#7fa8c4" opacity="0.42"/><rect x="1840" y="621" width="5" height="2" fill="#b07a5c" opacity="0.42"/><rect x="1846" y="621" width="7" height="2" fill="#b4b48c" opacity="0.42"/><rect x="1854" y="621" width="5" height="2" fill="#5c8fc0" opacity="0.42"/><rect x="1860" y="621" width="8" height="2" fill="#3f9f8c" opacity="0.42"/><rect x="1870" y="621" width="3" height="2" fill="#7fa8c4" opacity="0.42"/><rect x="1800" y="625" width="4" height="2" fill="#7fa8c4" opacity="0.42"/><rect x="1805" y="625" width="4" height="2" fill="#7fa8c4" opacity="0.42"/><rect x="1810" y="625" width="9" height="2" fill="#b07a5c" opacity="0.42"/><rect x="1820" y="625" width="3" height="2" fill="#7fa8c4" opacity="0.42"/><rect x="1804" y="627" width="5" height="2" fill="#7fa8c4" opacity="0.42"/><rect x="1811" y="627" width="3" height="2" fill="#b4b48c" opacity="0.42"/><rect x="1808" y="629" width="5" height="2" fill="#a173a0" opacity="0.42"/><rect x="1814" y="629" width="6" height="2" fill="#5c8fc0" opacity="0.42"/><rect x="1821" y="629" width="3" height="2" fill="#7fa8c4" opacity="0.42"/><rect x="1825" y="629" width="8" height="2" fill="#b4b48c" opacity="0.42"/><rect x="1834" y="629" width="4" height="2" fill="#7fa8c4" opacity="0.42"/><rect x="1839" y="629" width="4" height="2" fill="#b4b48c" opacity="0.42"/><rect x="1844" y="629" width="5" height="2" fill="#7fa8c4" opacity="0.42"/><rect x="1851" y="629" width="2" height="2" fill="#a173a0" opacity="0.42"/><rect x="1808" y="631" width="3" height="2" fill="#8f9f88" opacity="0.42"/><rect x="1812" y="631" width="3" height="2" fill="#b4b48c" opacity="0.42"/><rect x="1881" y="631" width="5" height="2" fill="#6a9955" opacity="0.32"/><rect x="1887" y="631" width="1" height="2" fill="#6a9955" opacity="0.32"/><rect x="1889" y="631" width="4" height="2" fill="#6a9955" opacity="0.32"/><rect x="1894" y="631" width="1" height="2" fill="#6a9955" opacity="0.32"/><rect x="1896" y="631" width="7" height="2" fill="#6a9955" opacity="0.32"/><rect x="1904" y="631" width="3" height="2" fill="#6a9955" opacity="0.32"/><rect x="1812" y="633" width="6" height="2" fill="#3f9f8c" opacity="0.42"/><rect x="1819" y="633" width="7" height="2" fill="#b07a5c" opacity="0.42"/><rect x="1828" y="633" width="6" height="2" fill="#b07a5c" opacity="0.42"/><rect x="1812" y="635" width="3" height="2" fill="#7fa8c4" opacity="0.42"/><rect x="1816" y="635" width="12" height="2" fill="#8f9f88" opacity="0.42"/><rect x="1829" y="635" width="7" height="2" fill="#b4b48c" opacity="0.42"/><rect x="1837" y="635" width="4" height="2" fill="#7fa8c4" opacity="0.42"/><rect x="1808" y="637" width="4" height="2" fill="#7fa8c4" opacity="0.42"/><rect x="1881" y="637" width="5" height="2" fill="#6a9955" opacity="0.32"/><rect x="1887" y="637" width="6" height="2" fill="#6a9955" opacity="0.32"/><rect x="1894" y="637" width="1" height="2" fill="#6a9955" opacity="0.32"/><rect x="1896" y="637" width="2" height="2" fill="#6a9955" opacity="0.32"/><rect x="1899" y="637" width="2" height="2" fill="#6a9955" opacity="0.32"/><rect x="1902" y="637" width="4" height="2" fill="#6a9955" opacity="0.32"/><rect x="1808" y="639" width="4" height="2" fill="#b07a5c" opacity="0.42"/><rect x="1881" y="639" width="6" height="2" fill="#6a9955" opacity="0.32"/><rect x="1888" y="639" width="1" height="2" fill="#6a9955" opacity="0.32"/><rect x="1890" y="639" width="7" height="2" fill="#6a9955" opacity="0.32"/><rect x="1898" y="639" width="1" height="2" fill="#6a9955" opacity="0.32"/><rect x="1900" y="639" width="1" height="2" fill="#6a9955" opacity="0.32"/><rect x="1902" y="639" width="5" height="2" fill="#6a9955" opacity="0.32"/><rect x="1812" y="641" width="8" height="2" fill="#b4b48c" opacity="0.42"/><rect x="1808" y="645" width="5" height="2" fill="#b4b48c" opacity="0.42"/><rect x="1814" y="645" width="4" height="2" fill="#7fa8c4" opacity="0.42"/><rect x="1812" y="647" width="9" height="2" fill="#7fa8c4" opacity="0.42"/><rect x="1822" y="647" width="3" height="2" fill="#7fa8c4" opacity="0.42"/><rect x="1826" y="647" width="6" height="2" fill="#b4b48c" opacity="0.42"/><rect x="1833" y="647" width="3" height="2" fill="#b4b48c" opacity="0.42"/><rect x="1838" y="647" width="5" height="2" fill="#7fa8c4" opacity="0.42"/><rect x="1845" y="647" width="9" height="2" fill="#8f9f88" opacity="0.42"/><rect x="1855" y="647" width="4" height="2" fill="#3f9f8c" opacity="0.42"/><rect x="1860" y="647" width="7" height="2" fill="#b4b48c" opacity="0.42"/><rect x="1868" y="647" width="5" height="2" fill="#a173a0" opacity="0.42"/><rect x="1875" y="647" width="4" height="2" fill="#b07a5c" opacity="0.42"/><rect x="1881" y="647" width="6" height="2" fill="#6a9955" opacity="0.32"/><rect x="1888" y="647" width="5" height="2" fill="#6a9955" opacity="0.32"/><rect x="1894" y="647" width="2" height="2" fill="#6a9955" opacity="0.32"/><rect x="1897" y="647" width="6" height="2" fill="#6a9955" opacity="0.32"/><rect x="1904" y="647" width="3" height="2" fill="#6a9955" opacity="0.32"/><rect x="1812" y="649" width="5" height="2" fill="#b4b48c" opacity="0.42"/><rect x="1818" y="649" width="8" height="2" fill="#5c8fc0" opacity="0.42"/><rect x="1827" y="649" width="10" height="2" fill="#3f9f8c" opacity="0.42"/><rect x="1838" y="649" width="3" height="2" fill="#7fa8c4" opacity="0.42"/><rect x="1881" y="649" width="2" height="2" fill="#6a9955" opacity="0.32"/><rect x="1884" y="649" width="5" height="2" fill="#6a9955" opacity="0.32"/><rect x="1890" y="649" width="5" height="2" fill="#6a9955" opacity="0.32"/><rect x="1896" y="649" width="4" height="2" fill="#6a9955" opacity="0.32"/><rect x="1901" y="649" width="5" height="2" fill="#6a9955" opacity="0.32"/><rect x="1816" y="651" width="7" height="2" fill="#7fa8c4" opacity="0.42"/><rect x="1824" y="651" width="4" height="2" fill="#5c8fc0" opacity="0.42"/><rect x="1829" y="651" width="6" height="2" fill="#b4b48c" opacity="0.42"/><rect x="1836" y="651" width="5" height="2" fill="#7fa8c4" opacity="0.42"/><rect x="1842" y="651" width="5" height="2" fill="#7fa8c4" opacity="0.42"/><rect x="1848" y="651" width="4" height="2" fill="#b4b48c" opacity="0.42"/><rect x="1854" y="651" width="6" height="2" fill="#3f9f8c" opacity="0.42"/><rect x="1881" y="651" width="5" height="2" fill="#6a9955" opacity="0.32"/><rect x="1887" y="651" width="4" height="2" fill="#6a9955" opacity="0.32"/><rect x="1892" y="651" width="7" height="2" fill="#6a9955" opacity="0.32"/><rect x="1900" y="651" width="4" height="2" fill="#6a9955" opacity="0.32"/><rect x="1905" y="651" width="2" height="2" fill="#6a9955" opacity="0.32"/><rect x="1816" y="653" width="4" height="2" fill="#3f9f8c" opacity="0.42"/><rect x="1821" y="653" width="6" height="2" fill="#7fa8c4" opacity="0.42"/><rect x="1881" y="653" width="2" height="2" fill="#6a9955" opacity="0.32"/><rect x="1884" y="653" width="6" height="2" fill="#6a9955" opacity="0.32"/><rect x="1891" y="653" width="2" height="2" fill="#6a9955" opacity="0.32"/><rect x="1894" y="653" width="5" height="2" fill="#6a9955" opacity="0.32"/><rect x="1900" y="653" width="5" height="2" fill="#6a9955" opacity="0.32"/><rect x="1906" y="653" width="1" height="2" fill="#6a9955" opacity="0.32"/><rect x="1820" y="655" width="5" height="2" fill="#b07a5c" opacity="0.42"/><rect x="1827" y="655" width="1" height="2" fill="#a173a0" opacity="0.42"/><rect x="1816" y="657" width="4" height="2" fill="#b07a5c" opacity="0.42"/><rect x="1820" y="659" width="7" height="2" fill="#5c8fc0" opacity="0.42"/><rect x="1828" y="659" width="7" height="2" fill="#a173a0" opacity="0.42"/><rect x="1837" y="659" width="4" height="2" fill="#3f9f8c" opacity="0.42"/><rect x="1881" y="659" width="2" height="2" fill="#6a9955" opacity="0.32"/><rect x="1884" y="659" width="4" height="2" fill="#6a9955" opacity="0.32"/><rect x="1889" y="659" width="7" height="2" fill="#6a9955" opacity="0.32"/><rect x="1897" y="659" width="7" height="2" fill="#6a9955" opacity="0.32"/><rect x="1905" y="659" width="2" height="2" fill="#6a9955" opacity="0.32"/><rect x="1820" y="661" width="10" height="2" fill="#b4b48c" opacity="0.42"/><rect x="1831" y="661" width="8" height="2" fill="#a173a0" opacity="0.42"/><rect x="1840" y="661" width="6" height="2" fill="#7fa8c4" opacity="0.42"/><rect x="1847" y="661" width="2" height="2" fill="#b4b48c" opacity="0.42"/><rect x="1881" y="661" width="6" height="2" fill="#6a9955" opacity="0.32"/><rect x="1888" y="661" width="3" height="2" fill="#6a9955" opacity="0.32"/><rect x="1892" y="661" width="1" height="2" fill="#6a9955" opacity="0.32"/><rect x="1894" y="661" width="7" height="2" fill="#6a9955" opacity="0.32"/><rect x="1902" y="661" width="5" height="2" fill="#6a9955" opacity="0.32"/><rect x="1812" y="663" width="8" height="2" fill="#7fa8c4" opacity="0.42"/><rect x="1821" y="663" width="4" height="2" fill="#3f9f8c" opacity="0.42"/><rect x="1826" y="663" width="7" height="2" fill="#b4b48c" opacity="0.42"/><rect x="1835" y="663" width="5" height="2" fill="#7fa8c4" opacity="0.42"/><rect x="1841" y="663" width="3" height="2" fill="#8f9f88" opacity="0.42"/><rect x="1881" y="663" width="7" height="2" fill="#6a9955" opacity="0.32"/><rect x="1889" y="663" width="2" height="2" fill="#6a9955" opacity="0.32"/><rect x="1892" y="663" width="3" height="2" fill="#6a9955" opacity="0.32"/><rect x="1896" y="663" width="2" height="2" fill="#6a9955" opacity="0.32"/><rect x="1899" y="663" width="4" height="2" fill="#6a9955" opacity="0.32"/><rect x="1904" y="663" width="1" height="2" fill="#6a9955" opacity="0.32"/><rect x="1906" y="663" width="1" height="2" fill="#6a9955" opacity="0.32"/><rect x="1816" y="665" width="3" height="2" fill="#7fa8c4" opacity="0.42"/><rect x="1820" y="665" width="1" height="2" fill="#5c8fc0" opacity="0.42"/><rect x="1881" y="665" width="5" height="2" fill="#6a9955" opacity="0.32"/><rect x="1887" y="665" width="5" height="2" fill="#6a9955" opacity="0.32"/><rect x="1893" y="665" width="4" height="2" fill="#6a9955" opacity="0.32"/><rect x="1898" y="665" width="5" height="2" fill="#6a9955" opacity="0.32"/><rect x="1904" y="665" width="3" height="2" fill="#6a9955" opacity="0.32"/><rect x="1808" y="669" width="9" height="2" fill="#a173a0" opacity="0.42"/><rect x="1818" y="669" width="6" height="2" fill="#3f9f8c" opacity="0.42"/><rect x="1800" y="673" width="5" height="2" fill="#6a9955" opacity="0.4"/><rect x="1806" y="673" width="6" height="2" fill="#6a9955" opacity="0.4"/><rect x="1813" y="673" width="3" height="2" fill="#6a9955" opacity="0.4"/><rect x="1817" y="673" width="4" height="2" fill="#6a9955" opacity="0.4"/><rect x="1822" y="673" width="1" height="2" fill="#6a9955" opacity="0.4"/><rect x="1824" y="673" width="6" height="2" fill="#6a9955" opacity="0.4"/><rect x="1831" y="673" width="1" height="2" fill="#6a9955" opacity="0.4"/><rect x="1800" y="675" width="9" height="2" fill="#7fa8c4" opacity="0.42"/><rect x="1810" y="675" width="6" height="2" fill="#3f9f8c" opacity="0.42"/><rect x="1818" y="675" width="10" height="2" fill="#7fa8c4" opacity="0.42"/><rect x="1829" y="675" width="7" height="2" fill="#3f9f8c" opacity="0.42"/><rect x="1837" y="675" width="4" height="2" fill="#5c8fc0" opacity="0.42"/><rect x="1804" y="677" width="6" height="2" fill="#b4b48c" opacity="0.42"/><rect x="1811" y="677" width="3" height="2" fill="#7fa8c4" opacity="0.42"/><rect x="1804" y="679" width="4" height="2" fill="#b07a5c" opacity="0.42"/><rect x="1810" y="679" width="4" height="2" fill="#7fa8c4" opacity="0.42"/><rect x="1815" y="679" width="6" height="2" fill="#b07a5c" opacity="0.42"/><rect x="1804" y="681" width="7" height="2" fill="#b4b48c" opacity="0.42"/><rect x="1813" y="681" width="5" height="2" fill="#b07a5c" opacity="0.42"/><rect x="1819" y="681" width="1" height="2" fill="#5c8fc0" opacity="0.42"/><rect x="1808" y="683" width="4" height="2" fill="#7fa8c4" opacity="0.42"/><rect x="1814" y="683" width="10" height="2" fill="#7fa8c4" opacity="0.42"/><rect x="1826" y="683" width="12" height="2" fill="#b4b48c" opacity="0.42"/><rect x="1839" y="683" width="5" height="2" fill="#7fa8c4" opacity="0.42"/><rect x="1812" y="685" width="5" height="2" fill="#a173a0" opacity="0.42"/><rect x="1819" y="685" width="3" height="2" fill="#5c8fc0" opacity="0.42"/><rect x="1823" y="685" width="4" height="2" fill="#b4b48c" opacity="0.42"/><rect x="1828" y="685" width="5" height="2" fill="#7fa8c4" opacity="0.42"/><rect x="1835" y="685" width="9" height="2" fill="#7fa8c4" opacity="0.42"/><rect x="1816" y="687" width="9" height="2" fill="#8f9f88" opacity="0.42"/><rect x="1812" y="689" width="5" height="2" fill="#3f9f8c" opacity="0.42"/><rect x="1818" y="689" width="4" height="2" fill="#7fa8c4" opacity="0.42"/><rect x="1824" y="689" width="4" height="2" fill="#7fa8c4" opacity="0.42"/><rect x="1829" y="689" width="4" height="2" fill="#8f9f88" opacity="0.42"/><rect x="1834" y="689" width="8" height="2" fill="#b4b48c" opacity="0.42"/><rect x="1843" y="689" width="4" height="2" fill="#7fa8c4" opacity="0.42"/><rect x="1816" y="691" width="6" height="2" fill="#7fa8c4" opacity="0.42"/><rect x="1823" y="691" width="6" height="2" fill="#7fa8c4" opacity="0.42"/><rect x="1830" y="691" width="5" height="2" fill="#b4b48c" opacity="0.42"/><rect x="1837" y="691" width="4" height="2" fill="#7fa8c4" opacity="0.42"/><rect x="1842" y="691" width="9" height="2" fill="#3f9f8c" opacity="0.42"/><rect x="1820" y="693" width="5" height="2" fill="#5c8fc0" opacity="0.42"/><rect x="1827" y="693" width="3" height="2" fill="#3f9f8c" opacity="0.42"/><rect x="1832" y="693" width="5" height="2" fill="#7fa8c4" opacity="0.42"/><rect x="1816" y="695" width="4" height="2" fill="#8f9f88" opacity="0.42"/><rect x="1821" y="695" width="6" height="2" fill="#7fa8c4" opacity="0.42"/><rect x="1828" y="695" width="5" height="2" fill="#3f9f8c" opacity="0.42"/><rect x="1834" y="695" width="8" height="2" fill="#8f9f88" opacity="0.42"/><rect x="1843" y="695" width="5" height="2" fill="#b4b48c" opacity="0.42"/><rect x="1850" y="695" width="5" height="2" fill="#3f9f8c" opacity="0.42"/><rect x="1820" y="697" width="8" height="2" fill="#7fa8c4" opacity="0.42"/><rect x="1829" y="697" width="4" height="2" fill="#7fa8c4" opacity="0.42"/><rect x="1834" y="697" width="6" height="2" fill="#7fa8c4" opacity="0.42"/><rect x="1816" y="699" width="4" height="2" fill="#b4b48c" opacity="0.42"/><rect x="1820" y="701" width="6" height="2" fill="#3f9f8c" opacity="0.42"/><rect x="1827" y="701" width="6" height="2" fill="#3f9f8c" opacity="0.42"/><rect x="1834" y="701" width="4" height="2" fill="#3f9f8c" opacity="0.42"/><rect x="1839" y="701" width="8" height="2" fill="#7fa8c4" opacity="0.42"/><rect x="1808" y="705" width="8" height="2" fill="#7fa8c4" opacity="0.42"/><rect x="1817" y="705" width="5" height="2" fill="#7fa8c4" opacity="0.42"/><rect x="1808" y="707" width="6" height="2" fill="#b07a5c" opacity="0.42"/><rect x="1815" y="707" width="4" height="2" fill="#7fa8c4" opacity="0.42"/><rect x="1820" y="707" width="9" height="2" fill="#b07a5c" opacity="0.42"/><rect x="1830" y="707" width="9" height="2" fill="#3f9f8c" opacity="0.42"/><rect x="1840" y="707" width="4" height="2" fill="#7fa8c4" opacity="0.42"/><rect x="1845" y="707" width="7" height="2" fill="#7fa8c4" opacity="0.42"/><rect x="1854" y="707" width="5" height="2" fill="#7fa8c4" opacity="0.42"/><rect x="1860" y="707" width="8" height="2" fill="#7fa8c4" opacity="0.42"/><rect x="1808" y="709" width="12" height="2" fill="#7fa8c4" opacity="0.42"/><rect x="1821" y="709" width="10" height="2" fill="#5c8fc0" opacity="0.42"/><rect x="1833" y="709" width="6" height="2" fill="#3f9f8c" opacity="0.42"/><rect x="1840" y="709" width="10" height="2" fill="#3f9f8c" opacity="0.42"/><rect x="1851" y="709" width="4" height="2" fill="#b4b48c" opacity="0.42"/><rect x="1856" y="709" width="9" height="2" fill="#5c8fc0" opacity="0.42"/><rect x="1866" y="709" width="3" height="2" fill="#b4b48c" opacity="0.42"/><rect x="1871" y="709" width="4" height="2" fill="#7fa8c4" opacity="0.42"/><rect x="1876" y="709" width="4" height="2" fill="#a173a0" opacity="0.42"/><rect x="1881" y="709" width="6" height="2" fill="#7fa8c4" opacity="0.42"/><rect x="1888" y="709" width="2" height="2" fill="#b4b48c" opacity="0.42"/><rect x="1808" y="713" width="9" height="2" fill="#a173a0" opacity="0.42"/><rect x="1818" y="713" width="4" height="2" fill="#a173a0" opacity="0.42"/><rect x="1823" y="713" width="5" height="2" fill="#7fa8c4" opacity="0.42"/><rect x="1804" y="717" width="5" height="2" fill="#7fa8c4" opacity="0.42"/><rect x="1810" y="717" width="7" height="2" fill="#5c8fc0" opacity="0.42"/><rect x="1800" y="721" width="5" height="2" fill="#7fa8c4" opacity="0.42"/><rect x="1806" y="721" width="10" height="2" fill="#b07a5c" opacity="0.42"/><rect x="1804" y="723" width="7" height="2" fill="#7fa8c4" opacity="0.42"/><rect x="1812" y="723" width="5" height="2" fill="#8f9f88" opacity="0.42"/><rect x="1818" y="723" width="6" height="2" fill="#5c8fc0" opacity="0.42"/><rect x="1825" y="723" width="1" height="2" fill="#7fa8c4" opacity="0.42"/><rect x="1804" y="725" width="10" height="2" fill="#a173a0" opacity="0.42"/><rect x="1815" y="725" width="7" height="2" fill="#7fa8c4" opacity="0.42"/><rect x="1823" y="725" width="7" height="2" fill="#7fa8c4" opacity="0.42"/><rect x="1831" y="725" width="4" height="2" fill="#7fa8c4" opacity="0.42"/><rect x="1800" y="729" width="9" height="2" fill="#7fa8c4" opacity="0.42"/><rect x="1810" y="729" width="7" height="2" fill="#b07a5c" opacity="0.42"/><rect x="1804" y="731" width="8" height="2" fill="#a173a0" opacity="0.42"/><rect x="1813" y="731" width="7" height="2" fill="#b4b48c" opacity="0.42"/><rect x="1822" y="731" width="4" height="2" fill="#8f9f88" opacity="0.42"/><rect x="1804" y="733" width="12" height="2" fill="#7fa8c4" opacity="0.42"/><rect x="1817" y="733" width="10" height="2" fill="#b4b48c" opacity="0.42"/><rect x="1828" y="733" width="5" height="2" fill="#b4b48c" opacity="0.42"/><rect x="1834" y="733" width="2" height="2" fill="#7fa8c4" opacity="0.42"/><rect x="1800" y="737" width="4" height="2" fill="#3f9f8c" opacity="0.42"/><rect x="1805" y="737" width="10" height="2" fill="#b07a5c" opacity="0.42"/><rect x="1804" y="739" width="9" height="2" fill="#7fa8c4" opacity="0.42"/><rect x="1808" y="741" width="8" height="2" fill="#8f9f88" opacity="0.42"/><rect x="1818" y="741" width="12" height="2" fill="#b4b48c" opacity="0.42"/><rect x="1832" y="741" width="3" height="2" fill="#b4b48c" opacity="0.42"/><rect x="1836" y="741" width="7" height="2" fill="#b4b48c" opacity="0.42"/><rect x="1812" y="743" width="8" height="2" fill="#a173a0" opacity="0.42"/><rect x="1821" y="743" width="9" height="2" fill="#7fa8c4" opacity="0.42"/><rect x="1832" y="743" width="4" height="2" fill="#8f9f88" opacity="0.42"/><rect x="1837" y="743" width="7" height="2" fill="#7fa8c4" opacity="0.42"/><rect x="1816" y="745" width="4" height="2" fill="#7fa8c4" opacity="0.42"/><rect x="1821" y="745" width="4" height="2" fill="#7fa8c4" opacity="0.42"/><rect x="1826" y="745" width="4" height="2" fill="#7fa8c4" opacity="0.42"/><rect x="1831" y="745" width="1" height="2" fill="#3f9f8c" opacity="0.42"/><rect x="1812" y="747" width="3" height="2" fill="#3f9f8c" opacity="0.42"/><rect x="1816" y="747" width="4" height="2" fill="#8f9f88" opacity="0.42"/><rect x="1821" y="747" width="5" height="2" fill="#7fa8c4" opacity="0.42"/><rect x="1827" y="747" width="10" height="2" fill="#b4b48c" opacity="0.42"/><rect x="1838" y="747" width="9" height="2" fill="#b07a5c" opacity="0.42"/><rect x="1816" y="749" width="7" height="2" fill="#a173a0" opacity="0.42"/><rect x="1824" y="749" width="12" height="2" fill="#b4b48c" opacity="0.42"/><rect x="1838" y="749" width="8" height="2" fill="#b07a5c" opacity="0.42"/><rect x="1847" y="749" width="4" height="2" fill="#7fa8c4" opacity="0.42"/><rect x="1820" y="751" width="3" height="2" fill="#7fa8c4" opacity="0.42"/><rect x="1824" y="751" width="3" height="2" fill="#7fa8c4" opacity="0.42"/><rect x="1828" y="751" width="5" height="2" fill="#7fa8c4" opacity="0.42"/><rect x="1834" y="751" width="6" height="2" fill="#8f9f88" opacity="0.42"/><rect x="1816" y="753" width="6" height="2" fill="#3f9f8c" opacity="0.42"/><rect x="1824" y="753" width="6" height="2" fill="#7fa8c4" opacity="0.42"/><rect x="1832" y="753" width="4" height="2" fill="#7fa8c4" opacity="0.42"/><rect x="1837" y="753" width="8" height="2" fill="#7fa8c4" opacity="0.42"/><rect x="1846" y="753" width="5" height="2" fill="#7fa8c4" opacity="0.42"/><rect x="1820" y="755" width="7" height="2" fill="#3f9f8c" opacity="0.42"/><rect x="1829" y="755" width="3" height="2" fill="#7fa8c4" opacity="0.42"/><rect x="1808" y="759" width="12" height="2" fill="#7fa8c4" opacity="0.42"/><rect x="1808" y="763" width="6" height="2" fill="#6a9955" opacity="0.4"/><rect x="1815" y="763" width="6" height="2" fill="#6a9955" opacity="0.4"/><rect x="1822" y="763" width="1" height="2" fill="#6a9955" opacity="0.4"/><rect x="1808" y="765" width="5" height="2" fill="#b4b48c" opacity="0.42"/><rect x="1814" y="765" width="4" height="2" fill="#a173a0" opacity="0.42"/><rect x="1819" y="765" width="7" height="2" fill="#b07a5c" opacity="0.42"/><rect x="1827" y="765" width="6" height="2" fill="#7fa8c4" opacity="0.42"/><rect x="1835" y="765" width="12" height="2" fill="#7fa8c4" opacity="0.42"/><rect x="1848" y="765" width="10" height="2" fill="#7fa8c4" opacity="0.42"/><rect x="1859" y="765" width="1" height="2" fill="#b07a5c" opacity="0.42"/><rect x="1808" y="767" width="5" height="2" fill="#7fa8c4" opacity="0.42"/><rect x="1815" y="767" width="6" height="2" fill="#b07a5c" opacity="0.42"/><rect x="1822" y="767" width="5" height="2" fill="#7fa8c4" opacity="0.42"/><rect x="1828" y="767" width="10" height="2" fill="#b07a5c" opacity="0.42"/><rect x="1839" y="767" width="3" height="2" fill="#8f9f88" opacity="0.42"/><rect x="1843" y="767" width="7" height="2" fill="#3f9f8c" opacity="0.42"/><rect x="1851" y="767" width="5" height="2" fill="#b4b48c" opacity="0.42"/><rect x="1857" y="767" width="4" height="2" fill="#b4b48c" opacity="0.42"/><rect x="1862" y="767" width="4" height="2" fill="#3f9f8c" opacity="0.42"/><rect x="1867" y="767" width="4" height="2" fill="#8f9f88" opacity="0.42"/><rect x="1872" y="767" width="8" height="2" fill="#7fa8c4" opacity="0.42"/><rect x="1881" y="767" width="3" height="2" fill="#7fa8c4" opacity="0.42"/><rect x="1886" y="767" width="9" height="2" fill="#3f9f8c" opacity="0.42"/><rect x="1896" y="767" width="3" height="2" fill="#b4b48c" opacity="0.42"/><rect x="1808" y="769" width="7" height="2" fill="#5c8fc0" opacity="0.42"/><rect x="1816" y="769" width="8" height="2" fill="#7fa8c4" opacity="0.42"/><rect x="1825" y="769" width="4" height="2" fill="#7fa8c4" opacity="0.42"/><rect x="1830" y="769" width="8" height="2" fill="#b07a5c" opacity="0.42"/><rect x="1839" y="769" width="10" height="2" fill="#7fa8c4" opacity="0.42"/><rect x="1850" y="769" width="9" height="2" fill="#7fa8c4" opacity="0.42"/><rect x="1860" y="769" width="7" height="2" fill="#8f9f88" opacity="0.42"/><rect x="1868" y="769" width="7" height="2" fill="#8f9f88" opacity="0.42"/><rect x="1877" y="769" width="4" height="2" fill="#b07a5c" opacity="0.42"/><rect x="1882" y="769" width="12" height="2" fill="#7fa8c4" opacity="0.42"/><rect x="1895" y="769" width="1" height="2" fill="#b4b48c" opacity="0.42"/><rect x="1808" y="771" width="8" height="2" fill="#b4b48c" opacity="0.42"/><rect x="1817" y="771" width="5" height="2" fill="#5c8fc0" opacity="0.42"/><rect x="1824" y="771" width="12" height="2" fill="#7fa8c4" opacity="0.42"/><rect x="1837" y="771" width="5" height="2" fill="#b4b48c" opacity="0.42"/><rect x="1843" y="771" width="4" height="2" fill="#7fa8c4" opacity="0.42"/><rect x="1849" y="771" width="6" height="2" fill="#b4b48c" opacity="0.42"/><rect x="1856" y="771" width="6" height="2" fill="#3f9f8c" opacity="0.42"/><rect x="1864" y="771" width="8" height="2" fill="#3f9f8c" opacity="0.42"/><rect x="1873" y="771" width="5" height="2" fill="#7fa8c4" opacity="0.42"/><rect x="1879" y="771" width="9" height="2" fill="#a173a0" opacity="0.42"/><rect x="1889" y="771" width="5" height="2" fill="#b4b48c" opacity="0.42"/><rect x="1808" y="773" width="9" height="2" fill="#b4b48c" opacity="0.42"/><rect x="1818" y="773" width="5" height="2" fill="#b4b48c" opacity="0.42"/><rect x="1824" y="773" width="9" height="2" fill="#b4b48c" opacity="0.42"/><rect x="1834" y="773" width="9" height="2" fill="#5c8fc0" opacity="0.42"/><rect x="1845" y="773" width="4" height="2" fill="#5c8fc0" opacity="0.42"/><rect x="1850" y="773" width="8" height="2" fill="#7fa8c4" opacity="0.42"/><rect x="1860" y="773" width="9" height="2" fill="#3f9f8c" opacity="0.42"/><rect x="1870" y="773" width="12" height="2" fill="#8f9f88" opacity="0.42"/><rect x="1884" y="773" width="2" height="2" fill="#3f9f8c" opacity="0.42"/><rect x="1808" y="775" width="9" height="2" fill="#7fa8c4" opacity="0.42"/><rect x="1818" y="775" width="10" height="2" fill="#3f9f8c" opacity="0.42"/><rect x="1829" y="775" width="4" height="2" fill="#7fa8c4" opacity="0.42"/><rect x="1835" y="775" width="3" height="2" fill="#3f9f8c" opacity="0.42"/><rect x="1839" y="775" width="6" height="2" fill="#7fa8c4" opacity="0.42"/><rect x="1847" y="775" width="5" height="2" fill="#3f9f8c" opacity="0.42"/><rect x="1853" y="775" width="4" height="2" fill="#3f9f8c" opacity="0.42"/><rect x="1858" y="775" width="10" height="2" fill="#8f9f88" opacity="0.42"/><rect x="1869" y="775" width="10" height="2" fill="#7fa8c4" opacity="0.42"/><rect x="1880" y="775" width="4" height="2" fill="#7fa8c4" opacity="0.42"/><rect x="1885" y="775" width="10" height="2" fill="#7fa8c4" opacity="0.42"/><rect x="1907" y="188" width="1" height="591" fill="#141414"/><rect x="1907" y="143" width="9" height="45" fill="#434343"/><rect x="1917" y="143" width="3" height="4" fill="#5d8fc8"/><rect x="1917" y="148.5" width="3" height="9.5" fill="#5d8fc8"/><rect x="1917" y="159.5" width="3" height="5.5" fill="#5d8fc8"/><rect x="1917" y="167" width="3" height="5.5" fill="#5d8fc8"/><rect x="1917" y="174.5" width="3" height="24.0" fill="#3794ff"/><rect x="1917" y="201.5" width="3" height="21.0" fill="#3794ff"/><rect x="1917" y="231" width="3" height="27" fill="#3794ff"/><rect x="1908" y="372.5" width="12" height="1.5" fill="#8a8a8a"/></svg>
<div class="a" style="left:47px;top:967px;width:469px;height:1px;background:#2b2b2b"></div>
<svg class="a" style="left:52px;top:971.9px" width="12" height="14"><path d="M3.5 2.5l4.5 4.5-4.5 4.5" fill="none" stroke="#ccc" stroke-width="1.2"/></svg>
<div class="t" style="left:67.2px;top:973.59px;font-size:10.4px;color:#cccccc;font-weight:bold;">OUTLINE</div>
<div class="a" style="left:47px;top:989px;width:469px;height:1px;background:#2b2b2b"></div>
<svg class="a" style="left:52px;top:993.1px" width="12" height="14"><path d="M3.5 2.5l4.5 4.5-4.5 4.5" fill="none" stroke="#ccc" stroke-width="1.2"/></svg>
<div class="t" style="left:67.2px;top:994.79px;font-size:10.4px;color:#cccccc;font-weight:bold;">TIMELINE</div>
<div class="a" style="left:47px;top:1010px;width:469px;height:1px;background:#2b2b2b"></div>
<svg class="a" style="left:52px;top:1014.9px" width="12" height="14"><path d="M3.5 2.5l4.5 4.5-4.5 4.5" fill="none" stroke="#ccc" stroke-width="1.2"/></svg>
<div class="t" style="left:67.2px;top:1016.59px;font-size:10.4px;color:#cccccc;font-weight:bold;">HIDDEN ITEMS</div>
<div class="t" style="left:536.3px;top:792.14px;font-size:10.7px;color:#9d9d9d;transform:scaleX(0.925);transform-origin:0 0;">PROBLEMS</div>
<div class="t" style="left:651.3px;top:792.14px;font-size:10.7px;color:#9d9d9d;transform:scaleX(0.925);transform-origin:0 0;">OUTPUT</div>
<div class="t" style="left:716.9px;top:792.14px;font-size:10.7px;color:#9d9d9d;transform:scaleX(0.925);transform-origin:0 0;">DEBUG CONSOLE</div>
<div class="t" style="left:826.3px;top:792.14px;font-size:10.7px;color:#e7e7e7;transform:scaleX(0.925);transform-origin:0 0;">TERMINAL</div>
<div class="t" style="left:901.3px;top:792.14px;font-size:10.7px;color:#9d9d9d;transform:scaleX(0.925);transform-origin:0 0;">PORTS</div>
<div class="t" style="left:957.5px;top:792.14px;font-size:10.7px;color:#9d9d9d;transform:scaleX(0.925);transform-origin:0 0;">GITLENS</div>
<div class="t" style="left:1022px;top:792.14px;font-size:10.7px;color:#9d9d9d;transform:scaleX(0.925);transform-origin:0 0;">SERIAL MONITOR</div>
<div class="a" style="left:600.5px;top:788px;width:29.5px;height:18px;border-radius:9px;background:#616161"></div>
<div class="t" style="left:606px;top:792.19px;font-size:11px;color:#ffffff;">100</div>
<div class="a" style="left:824px;top:807.5px;width:55px;height:1px;background:#0078d4"></div>
<svg class="a" style="left:1690px;top:785px" width="230" height="25" viewBox="1690 785 230 25" fill="none" stroke="#cccccc" stroke-width="1.2">
 <path d="M1704.5 788.5l6.5 3.7v7.5l-6.5 3.8-6.5-3.8v-7.5z" stroke="#9a9a9a" stroke-width="0.9"/>
 <path d="M1705 796l5.5-3v7l-5.5 3.2z" fill="#e8e8e8" stroke="none"/>
 <path d="M1756.5 789v13M1750 795.5h13"/>
 <path d="M1769.5 794.5l3.5 3.5 3.5-3.5" stroke-width="1"/>
 <rect x="1790.2" y="789.6" width="12.6" height="12.4" rx="1"/>
 <path d="M1796.5 789.6v12.4"/>
 <path d="M1814.5 791.5h12M1818 791.5v-1.5h5v1.5M1816 791.5l1 10.5h7l1-10.5M1819 794v6M1822 794v6" stroke-width="1.1"/>
 <rect x="1840" y="795" width="2" height="2" fill="#ccc" stroke="none"/>
 <rect x="1845.5" y="795" width="2" height="2" fill="#ccc" stroke="none"/>
 <rect x="1851" y="795" width="2" height="2" fill="#ccc" stroke="none"/>
 <path d="M1867 798l5-4.7 5 4.7"/>
 <path d="M1893.5 792l8.5 8.5M1902 792l-8.5 8.5"/>
</svg>
<div class="t" style="left:1717px;top:789.44px;font-size:12px;color:#cccccc;">bash</div>
<svg class="a" style="left:522px;top:824px" width="12" height="12"><circle cx="5.8" cy="6" r="3.6" fill="none" stroke="#707070" stroke-width="1.1"/></svg>
<div class="t code" style="left:537.8px;top:823.77px;font-size:14.4px;transform:scaleX(0.9200);transform-origin:0 0"><span style="color:#23d18b;font-weight:bold">jani@Kone1</span><span style="color:#e5e5e5;font-weight:bold">:</span><span style="color:#3b8eea;font-weight:bold">~/Python_projects/hirsipuu-peli</span><span style="color:#e5e5e5">$</span></div>
<div class="a" style="left:1911px;top:822px;width:3px;height:6px;background:#5a5a5a"></div>
<div class="a" style="left:0;top:1033px;width:33px;height:19px;background:#0078d4"></div>
<svg class="a" style="left:0;top:1033px" width="33" height="19" fill="none" stroke="#fff" stroke-width="1.1"><path d="M12.5 6.7l4.2 3.8-4.2 3.8M20.8 3l-3.6 3.8 3.6 3.8"/></svg>
<svg class="a" style="left:0;top:1033px" width="1920" height="19" viewBox="0 1033 1920 19" fill="none" stroke="#cccccc" stroke-width="1.1">
 <circle cx="42.5" cy="1037.8" r="1.9"/><circle cx="42.5" cy="1046.3" r="1.9"/><circle cx="49" cy="1041" r="1.9"/>
 <path d="M42.5 1039.7v4.7M49 1042.9c0 2-3 2.5-6.5 3.4"/>
 <path d="M100 1041.5a5.5 5.5 0 0 1 10.3-1.5M111.5 1043a5.5 5.5 0 0 1-10.3 1.5M110.6 1037v3.3h-3.3M100.9 1048v-3.3h3.3"/>
 <circle cx="129.5" cy="1037" r="1.7"/><circle cx="129.5" cy="1047" r="1.7"/><path d="M129.5 1038.7v6.6M134 1036.5v11M133.5 1044c2.5-1 4.5-3 3-5"/>
 <path d="M157.5 1048.5l3-3M159 1041l3.5 5 4-4 1.5-6-6 1.5-4 4z M157 1044.5h3M160.5 1048.5v-2"/>
 <path d="M171 1048.5l3-3M173 1041.5l3.5 5 4-4 1.5-6-6 1.5z" />
 <circle cx="266.2" cy="1042.5" r="6"/><path d="M263.5 1039.8l5.4 5.4M268.9 1039.8l-5.4 5.4"/>
 <path d="M292 1036.5l6 11h-12z M292 1040.5v4"/>
 <circle cx="317.8" cy="1042.5" r="6"/><path d="M317.8 1041v5M317.8 1038.5v1"/>
 <path d="M370.5 1041.5l-2.5 7M370.5 1041.5l2.5 7M368.8 1045.5h3.4M367.8 1038.2a4.5 4.5 0 0 0 0 6M373.2 1038.2a4.5 4.5 0 0 1 0 6M365.8 1036.5a7 7 0 0 0 0 9.5M375.2 1036.5a7 7 0 0 1 0 9.5" stroke-width="1"/>
 <circle cx="370.5" cy="1040.5" r="1.2" fill="#ccc"/>
 <path d="M403.5 1043.5c0-4 3-6 6.5-6h2v-2.5l3.5 3.5-3.5 3.5v-2.5h-2c-2.5 0-5 1.5-6 4"/>
 <circle cx="408" cy="1046.5" r="2.2"/>
 <circle cx="494.3" cy="1042.5" r="6"/><path d="M491.5 1042.7l2 2 3.7-4.2"/>
 <path d="M1162.5 1037v3M1162.5 1045v3"/><circle cx="1162.5" cy="1042.5" r="2.5"/>
 <path d="M1508 1037c-1.5 0-2 .5-2 2v1.5c0 1-.5 1.5-1.5 2 1 .5 1.5 1 1.5 2v1.5c0 1.5.5 2 2 2" stroke-width="1"/>
 <circle cx="1512.5" cy="1045" r="2.5" fill="#ccc" stroke="none"/>
 <path d="M1512 1037c1 0 1.5.5 1.5 1.5v1.5" stroke-width="1"/>
 <path d="M1659 1045.5a5 5 0 1 1 6 0M1660.5 1043.5a3 3 0 1 1 3 0" stroke-width="1"/><circle cx="1662" cy="1041.5" r="1" fill="#ccc"/><path d="M1662 1042.5v5.5" />
 <path d="M1733 1036.5l5.5 10.5h-11z M1733 1040.5v3.5M1733 1045v1" stroke-width="1"/>
 <path d="M1898.5 1037.5a4 4 0 0 0-4 4v3.5l-1.5 2h11l-1.5-2v-3.5a4 4 0 0 0-4-4zM1897 1048.5h3"/>
</svg>
<div class="t" style="left:55.6px;top:1036.68px;font-size:11.6px;color:#cccccc;">master</div>
<div class="t" style="left:186.3px;top:1036.68px;font-size:11.6px;color:#cccccc;">Launchpad</div>
<div class="t" style="left:276px;top:1036.68px;font-size:11.6px;color:#cccccc;">0</div>
<div class="t" style="left:302px;top:1036.68px;font-size:11.6px;color:#cccccc;">0</div>
<div class="t" style="left:328.1px;top:1036.68px;font-size:11.6px;color:#cccccc;">100</div>
<div class="t" style="left:380.3px;top:1036.68px;font-size:11.6px;color:#cccccc;">0</div>
<div class="t" style="left:418.8px;top:1036.68px;font-size:11.6px;color:#cccccc;">Live Share</div>
<div class="t" style="left:1172.6px;top:1036.68px;font-size:11.6px;color:#cccccc;">Jenna, last week</div>
<div class="t" style="left:1276px;top:1036.68px;font-size:11.6px;color:#cccccc;">Ln 171, Col 35</div>
<div class="t" style="left:1365.7px;top:1036.68px;font-size:11.6px;color:#cccccc;">Spaces: 4</div>
<div class="t" style="left:1429.8px;top:1036.68px;font-size:11.6px;color:#cccccc;">UTF-8</div>
<div class="t" style="left:1476.8px;top:1036.68px;font-size:11.6px;color:#cccccc;">LF</div>
<div class="t" style="left:1522px;top:1036.68px;font-size:11.6px;color:#cccccc;">Python</div>
<div class="t" style="left:1574px;top:1036.68px;font-size:11.6px;color:#cccccc;">3.12.3 64-bit</div>
<div class="t" style="left:1672px;top:1036.68px;font-size:11.6px;color:#cccccc;">Go Live</div>
<div class="t" style="left:1743px;top:1036.68px;font-size:11.6px;color:#cccccc;">100 Spell</div>
<div class="t" style="left:1812px;top:1037.32px;font-size:11.2px;color:#e0e0e0;transform:scaleX(1.0);transform-origin:0 0;font-weight:bold;letter-spacing:0.6px;">CODEGPT</div>
</body></html>
